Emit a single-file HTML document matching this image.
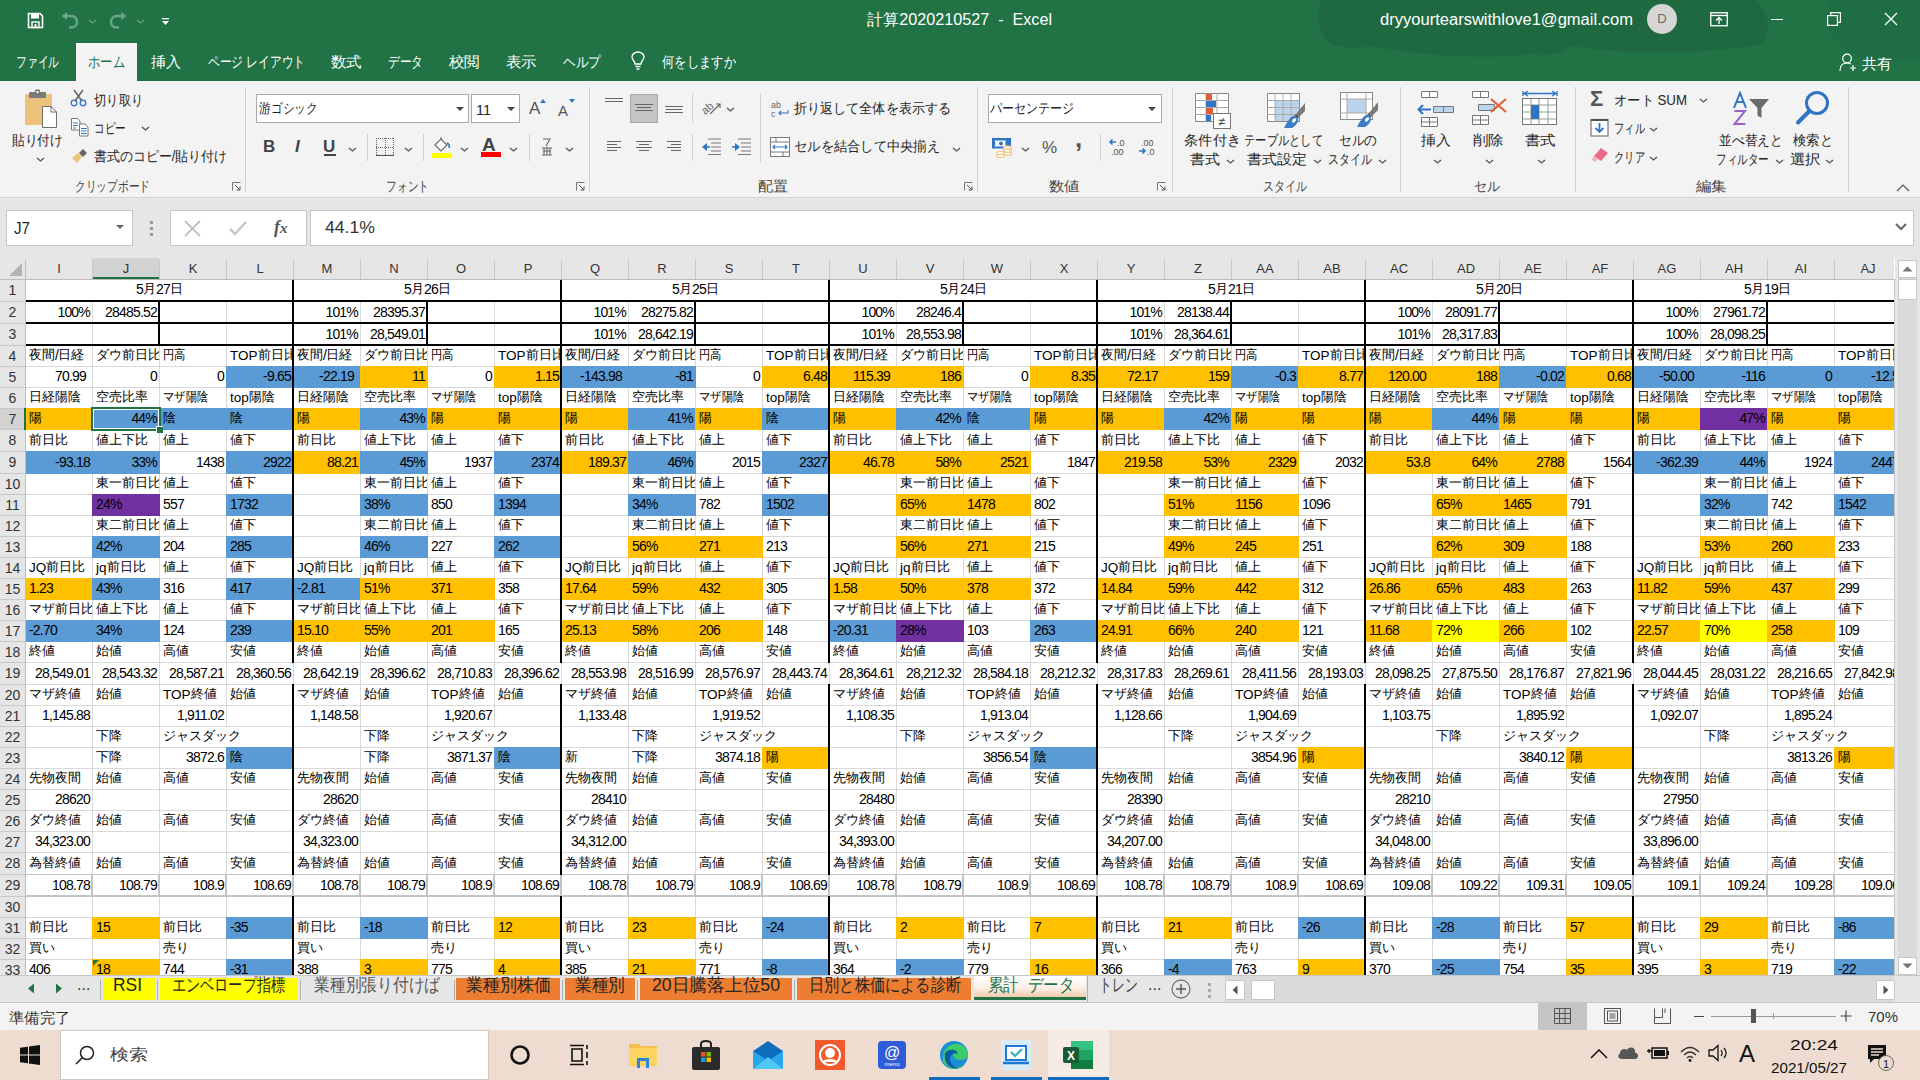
<!DOCTYPE html><html><head><meta charset="utf-8"><style>

*{margin:0;padding:0;box-sizing:border-box}
html,body{width:1920px;height:1080px;overflow:hidden;background:#fff;font-family:"Liberation Sans",sans-serif}
.a{position:absolute}
.t{position:absolute;white-space:nowrap;line-height:1}
.rb{color:#262626;font-size:15px}
.gl{position:absolute;font-size:14px;color:#444;white-space:nowrap;line-height:1}
.sep{position:absolute;width:1px;background:#d0d0d0}
.dd{position:absolute}


.cell{font-size:14px;color:#000;display:flex;align-items:flex-end;padding-bottom:4px}
.n{font-size:14px;letter-spacing:-0.8px}
.l{font-size:13.5px;letter-spacing:0}
.j{font-size:13px;position:relative;top:-1px}

</style></head><body>
<div class="a" style="left:0px;top:0px;width:1920px;height:81px;background:#217346"></div>
<svg class="a" style="left:1280px;top:0;width:640px;height:81px" viewBox="1280 0 640 81"><path d="M1322 0 C1316 12 1318 26 1322 34 C1326 46 1345 50 1372 46 C1420 56 1490 60 1532 54 C1548 58 1562 52 1572 46 C1630 56 1710 54 1762 44 C1774 26 1766 10 1756 0 Z" fill="#1f6741" opacity="0.85"/><path d="M1832 0 C1818 26 1836 52 1872 60 C1895 64 1910 62 1920 60 L1920 0 Z" fill="#1f6741" opacity="0.55"/></svg>
<svg class="a" style="left:27px;top:12px;width:17px;height:17px" viewBox="0 0 17 17"><path d="M1.5 1.5 H13 L15.5 4 V15.5 H1.5 Z" fill="none" stroke="#fff" stroke-width="1.6"/><rect x="4" y="1.5" width="8" height="5" fill="#fff"/><rect x="5" y="10" width="7" height="5.5" fill="none" stroke="#fff" stroke-width="1.4"/><rect x="7.5" y="12" width="2" height="3.5" fill="#fff"/></svg>
<svg class="a" style="left:60px;top:12px;width:20px;height:17px" viewBox="0 0 20 17"><path d="M5 4 H11 C15 4 17 7 17 10 C17 13 15 15.5 11 15.5 H9" fill="none" stroke="#6aa584" stroke-width="2.4"/><path d="M1.5 4 L7 0 V8 Z" fill="#6aa584"/></svg>
<svg class="a" style="left:88px;top:19px;width:9px;height:5px;" viewBox="0 0 9 5"><path d="M1 1 L4.5 4 L8 1" fill="none" stroke="#6aa584" stroke-width="1.3"/></svg>
<svg class="a" style="left:108px;top:12px;width:20px;height:17px" viewBox="0 0 20 17"><path d="M15 4 H9 C5 4 3 7 3 10 C3 13 5 15.5 9 15.5 H11" fill="none" stroke="#6aa584" stroke-width="2.4"/><path d="M18.5 4 L13 0 V8 Z" fill="#6aa584"/></svg>
<svg class="a" style="left:136px;top:19px;width:9px;height:5px;" viewBox="0 0 9 5"><path d="M1 1 L4.5 4 L8 1" fill="none" stroke="#6aa584" stroke-width="1.3"/></svg>
<svg class="a" style="left:161px;top:17px;width:9px;height:10px" viewBox="0 0 9 10"><rect x="1" y="1" width="7" height="1.3" fill="#fff"/><path d="M1 4 H8 L4.5 8 Z" fill="#fff"/></svg>
<div class="t" id="f0" style="left:867px;top:12px;font-size:16px;color:#fff;transform:scaleX(1.0097);transform-origin:0 0;">計算2020210527&nbsp; - &nbsp;Excel</div>
<div class="t" id="f1" style="left:1380px;top:12px;font-size:16px;color:#fff;transform:scaleX(1.0336);transform-origin:0 0;">dryyourtearswithlove1@gmail.com</div>
<div class="a" style="left:1647px;top:4px;width:30px;height:30px;border-radius:50%;background:#d6d6d6;color:#6b6b6b;font-size:13px;text-align:center;line-height:30px">D</div>
<svg class="a" style="left:1710px;top:11px;width:18px;height:16px" viewBox="0 0 18 16"><rect x="0.75" y="1.75" width="16.5" height="13" fill="none" stroke="#fff" stroke-width="1.3"/><line x1="0.75" y1="4.5" x2="17.25" y2="4.5" stroke="#fff" stroke-width="1.3"/><path d="M9 13 V7 M6 9.5 L9 6.5 L12 9.5" fill="none" stroke="#fff" stroke-width="1.3"/></svg>
<div class="a" style="left:1771px;top:19px;width:12px;height:1px;background:#fff"></div>
<svg class="a" style="left:1827px;top:12px;width:14px;height:14px" viewBox="0 0 14 14"><rect x="0.6" y="3.6" width="9.8" height="9.8" fill="none" stroke="#fff" stroke-width="1.2"/><path d="M3.6 3.6 V0.6 H13.4 V10.4 H10.4" fill="none" stroke="#fff" stroke-width="1.2"/></svg>
<svg class="a" style="left:1884px;top:12px;width:14px;height:14px" viewBox="0 0 14 14"><path d="M1 1 L13 13 M13 1 L1 13" stroke="#fff" stroke-width="1.3"/></svg>
<div class="a" style="left:76px;top:43px;width:61px;height:38px;background:#f3f3f3"></div>
<div class="t" id="f2" style="left:16px;top:54px;font-size:15px;color:#fff;transform:scaleX(0.7167);transform-origin:0 0;">ファイル</div>
<div class="t" id="f3" style="left:88px;top:54px;font-size:15px;color:#217346;transform:scaleX(0.8222);transform-origin:0 0;">ホーム</div>
<div class="t" id="f4" style="left:151px;top:54px;font-size:15px;color:#fff;transform:scaleX(1.0000);transform-origin:0 0;">挿入</div>
<div class="t" id="f5" style="left:208px;top:54px;font-size:15px;color:#fff;transform:scaleX(0.7812);transform-origin:0 0;">ページ レイアウト</div>
<div class="t" id="f6" style="left:331px;top:54px;font-size:15px;color:#fff;transform:scaleX(1.0333);transform-origin:0 0;">数式</div>
<div class="t" id="f7" style="left:388px;top:54px;font-size:15px;color:#fff;transform:scaleX(0.7778);transform-origin:0 0;">データ</div>
<div class="t" id="f8" style="left:449px;top:54px;font-size:15px;color:#fff;transform:scaleX(1.0333);transform-origin:0 0;">校閲</div>
<div class="t" id="f9" style="left:506px;top:54px;font-size:15px;color:#fff;transform:scaleX(1.0333);transform-origin:0 0;">表示</div>
<div class="t" id="f10" style="left:563px;top:54px;font-size:15px;color:#fff;transform:scaleX(0.8444);transform-origin:0 0;">ヘルプ</div>
<div class="t" id="f11" style="left:662px;top:54px;font-size:15px;color:#fff;transform:scaleX(0.8222);transform-origin:0 0;">何をしますか</div>
<svg class="a" style="left:630px;top:51px;width:16px;height:20px" viewBox="0 0 16 20"><path d="M5 13 C5 10 2 9 2 6 C2 3 5 1 8 1 C11 1 14 3 14 6 C14 9 11 10 11 13 Z" fill="none" stroke="#fff" stroke-width="1.3"/><path d="M5.5 15.5 H10.5 M6.5 18 H9.5" stroke="#fff" stroke-width="1.3"/></svg>
<svg class="a" style="left:1839px;top:53px;width:18px;height:19px" viewBox="0 0 18 19"><circle cx="8" cy="5.5" r="4.3" fill="none" stroke="#fff" stroke-width="1.2"/><path d="M1 18 C1 12 4 10 8 10 C10 10 11 10.5 12 11" fill="none" stroke="#fff" stroke-width="1.2"/><path d="M14 12 V18 M11 15 H17" stroke="#fff" stroke-width="1.2"/></svg>
<div class="t" id="f12" style="left:1862px;top:56px;font-size:15px;color:#fff;transform:scaleX(1.0000);transform-origin:0 0;">共有</div>
<div class="a" style="left:0px;top:81px;width:1920px;height:116px;background:#f3f3f3"></div>
<div class="a" style="left:0px;top:197px;width:1920px;height:1px;background:#d4d4d4"></div>
<div class="sep" style="left:245px;top:87px;height:105px"></div>
<div class="sep" style="left:589px;top:87px;height:105px"></div>
<div class="sep" style="left:977px;top:87px;height:105px"></div>
<div class="sep" style="left:1172px;top:87px;height:105px"></div>
<div class="sep" style="left:1400px;top:87px;height:105px"></div>
<div class="sep" style="left:1575px;top:87px;height:105px"></div>
<div class="sep" style="left:1848px;top:87px;height:105px"></div>
<div class="t" id="f13" style="left:75px;top:179px;font-size:14px;color:#444;transform:scaleX(0.7653);transform-origin:0 0;">クリップボード</div>
<div class="t" id="f14" style="left:386px;top:179px;font-size:14px;color:#444;transform:scaleX(0.7679);transform-origin:0 0;">フォント</div>
<div class="t" id="f15" style="left:758px;top:179px;font-size:14px;color:#444;transform:scaleX(1.0714);transform-origin:0 0;">配置</div>
<div class="t" id="f16" style="left:1049px;top:179px;font-size:14px;color:#444;transform:scaleX(1.1071);transform-origin:0 0;">数値</div>
<div class="t" id="f17" style="left:1263px;top:179px;font-size:14px;color:#444;transform:scaleX(0.7857);transform-origin:0 0;">スタイル</div>
<div class="t" id="f18" style="left:1474px;top:179px;font-size:14px;color:#444;transform:scaleX(0.9286);transform-origin:0 0;">セル</div>
<div class="t" id="f19" style="left:1696px;top:179px;font-size:14px;color:#444;transform:scaleX(1.1071);transform-origin:0 0;">編集</div>
<svg class="a" style="left:232px;top:182px;width:9px;height:9px" viewBox="0 0 9 9"><path d="M0.5 8.5 V0.5 H8.5" fill="none" stroke="#777" stroke-width="1"/><path d="M3 3 L8 8 M8 4.5 V8 H4.5" fill="none" stroke="#555" stroke-width="1"/></svg>
<svg class="a" style="left:576px;top:182px;width:9px;height:9px" viewBox="0 0 9 9"><path d="M0.5 8.5 V0.5 H8.5" fill="none" stroke="#777" stroke-width="1"/><path d="M3 3 L8 8 M8 4.5 V8 H4.5" fill="none" stroke="#555" stroke-width="1"/></svg>
<svg class="a" style="left:964px;top:182px;width:9px;height:9px" viewBox="0 0 9 9"><path d="M0.5 8.5 V0.5 H8.5" fill="none" stroke="#777" stroke-width="1"/><path d="M3 3 L8 8 M8 4.5 V8 H4.5" fill="none" stroke="#555" stroke-width="1"/></svg>
<svg class="a" style="left:1157px;top:182px;width:9px;height:9px" viewBox="0 0 9 9"><path d="M0.5 8.5 V0.5 H8.5" fill="none" stroke="#777" stroke-width="1"/><path d="M3 3 L8 8 M8 4.5 V8 H4.5" fill="none" stroke="#555" stroke-width="1"/></svg>
<svg class="a" style="left:1896px;top:184px;width:14px;height:8px" viewBox="0 0 14 8"><path d="M1 7 L7 1 L13 7" fill="none" stroke="#555" stroke-width="1.2"/></svg>
<svg class="a" style="left:23px;top:89px;width:36px;height:40px" viewBox="0 0 36 40"><rect x="2" y="5" width="27" height="31" rx="1.5" fill="#edc37c"/><rect x="6" y="3" width="17" height="6" rx="1" fill="#7a7a7a"/><rect x="12" y="0.5" width="5" height="5" rx="1" fill="#7a7a7a"/><rect x="13.5" y="2" width="2" height="2" fill="#fff"/><path d="M19.5 17.5 H28 L33.5 23 V38.5 H19.5 Z" fill="#fff" stroke="#6e6e6e" stroke-width="1"/><path d="M28 17.5 V23 H33.5" fill="none" stroke="#6e6e6e" stroke-width="1"/></svg>
<div class="t" id="f20" style="left:12px;top:133px;font-size:14px;color:#262626;transform:scaleX(0.9107);transform-origin:0 0;">貼り付け</div>
<svg class="a" style="left:36px;top:157px;width:9px;height:5px;" viewBox="0 0 9 5"><path d="M1 1 L4.5 4 L8 1" fill="none" stroke="#555" stroke-width="1.3"/></svg>
<svg class="a" style="left:70px;top:89px;width:18px;height:18px" viewBox="0 0 18 18"><path d="M4 1 L12 12 M13 1 L5 12" stroke="#666" stroke-width="1.6"/><circle cx="4" cy="14" r="2.8" fill="none" stroke="#2f75c4" stroke-width="1.3"/><circle cx="13" cy="14" r="2.8" fill="none" stroke="#2f75c4" stroke-width="1.3"/></svg>
<div class="t" id="f21" style="left:94px;top:93px;font-size:14px;color:#262626;transform:scaleX(0.8750);transform-origin:0 0;">切り取り</div>
<svg class="a" style="left:71px;top:118px;width:18px;height:19px" viewBox="0 0 18 19"><path d="M0.5 0.5 H6.5 L9 3 V12 H0.5 Z" fill="#fff" stroke="#777" stroke-width="1"/><path d="M2 5 H7 M2 7.5 H7 M2 10 H5" stroke="#2f75c4" stroke-width="1"/><path d="M8.5 6 H14 L17 9 V18 H8.5 Z" fill="#fff" stroke="#777" stroke-width="1"/><path d="M10 10.5 H15.5 M10 13 H15.5 M10 15.5 H15.5" stroke="#2f75c4" stroke-width="1"/></svg>
<div class="t" id="f22" style="left:94px;top:121px;font-size:14px;color:#262626;transform:scaleX(0.7619);transform-origin:0 0;">コピー</div>
<svg class="a" style="left:141px;top:126px;width:9px;height:5px;" viewBox="0 0 9 5"><path d="M1 1 L4.5 4 L8 1" fill="none" stroke="#555" stroke-width="1.3"/></svg>
<svg class="a" style="left:71px;top:148px;width:18px;height:16px" viewBox="0 0 18 16"><path d="M1 10 L7 5 L11 9 L6 15 Z" fill="#edc37c"/><path d="M8 5 L12 1 L16 5 L12 9 Z" fill="#666"/></svg>
<div class="t" id="f23" style="left:94px;top:149px;font-size:14px;color:#262626;transform:scaleX(0.9243);transform-origin:0 0;">書式のコピー/貼り付け</div>
<div class="a" style="left:256px;top:94px;width:213px;height:29px;background:#fff;border:1px solid #ababab"></div>
<div class="t" id="f24" style="left:259px;top:101px;font-size:14px;color:#262626;transform:scaleX(0.8429);transform-origin:0 0;">游ゴシック</div>
<svg class="a" style="left:455px;top:106px;width:10px;height:6px;" viewBox="0 0 10 6"><path d="M1 1 H9 L5 5 Z" fill="#444"/></svg>
<div class="a" style="left:471px;top:94px;width:49px;height:29px;background:#fff;border:1px solid #ababab"></div>
<div class="t" id="f25" style="left:476px;top:103px;font-size:14px;color:#262626;transform:scaleX(1.0311);transform-origin:0 0;">11</div>
<svg class="a" style="left:506px;top:106px;width:10px;height:6px;" viewBox="0 0 10 6"><path d="M1 1 H9 L5 5 Z" fill="#444"/></svg>
<div class="t" style="left:529px;top:100px;font-size:17px;color:#555;">A</div>
<svg class="a" style="left:540px;top:99px;width:6px;height:4px" viewBox="0 0 6 4"><path d="M0 4 L3 0 L6 4Z" fill="#2f75c4"/></svg>
<div class="t" style="left:558px;top:103px;font-size:15px;color:#555;">A</div>
<svg class="a" style="left:569px;top:99px;width:6px;height:4px" viewBox="0 0 6 4"><path d="M0 0 L3 4 L6 0Z" fill="#2f75c4"/></svg>
<div class="t" style="left:263px;top:138px;font-size:17px;color:#444;font-weight:bold">B</div>
<div class="t" style="left:295px;top:138px;font-size:17px;color:#444;font-style:italic;font-weight:bold">I</div>
<div class="t" style="left:323px;top:138px;font-size:17px;color:#444;font-weight:bold">U</div>
<div class="a" style="left:324px;top:154px;width:12px;height:1.5px;background:#444"></div>
<svg class="a" style="left:348px;top:147px;width:9px;height:5px;" viewBox="0 0 9 5"><path d="M1 1 L4.5 4 L8 1" fill="none" stroke="#555" stroke-width="1.3"/></svg>
<div class="sep" style="left:367px;top:134px;height:27px"></div>
<svg class="a" style="left:376px;top:138px;width:18px;height:18px" viewBox="0 0 18 18"><path d="M0.5 0 V17 M17.5 0 V17 M9.5 0 V17 M0 0.5 H18 M0 9.5 H18" fill="none" stroke="#666" stroke-width="1" stroke-dasharray="1,1"/><path d="M0 17.5 H18" stroke="#555" stroke-width="1.2"/></svg>
<svg class="a" style="left:404px;top:147px;width:9px;height:5px;" viewBox="0 0 9 5"><path d="M1 1 L4.5 4 L8 1" fill="none" stroke="#555" stroke-width="1.3"/></svg>
<div class="sep" style="left:423px;top:134px;height:27px"></div>
<svg class="a" style="left:432px;top:136px;width:22px;height:22px" viewBox="0 0 22 22"><path d="M3 9 L9 3 L15 9 L9 15 Z" fill="#fff" stroke="#666" stroke-width="1.1"/><path d="M9 3 V1" stroke="#666"/><path d="M15 7 C17 8 18 10 17 12" fill="none" stroke="#2f75c4" stroke-width="1.6"/><rect x="0" y="17" width="20" height="5" fill="#ffff00"/></svg>
<svg class="a" style="left:460px;top:147px;width:9px;height:5px;" viewBox="0 0 9 5"><path d="M1 1 L4.5 4 L8 1" fill="none" stroke="#555" stroke-width="1.3"/></svg>
<div class="t" style="left:482px;top:135px;font-size:19px;color:#444;font-weight:bold">A</div>
<div class="a" style="left:481px;top:152px;width:20px;height:5px;background:#ff0000"></div>
<svg class="a" style="left:509px;top:147px;width:9px;height:5px;" viewBox="0 0 9 5"><path d="M1 1 L4.5 4 L8 1" fill="none" stroke="#555" stroke-width="1.3"/></svg>
<div class="sep" style="left:529px;top:134px;height:27px"></div>
<svg class="a" style="left:541px;top:138px;width:12px;height:18px" viewBox="0 0 12 18"><path d="M2 1 H9 L5 8 M1 10 H11 M2 13 H10 M1 17 H11 M6 9 V17 M3 10 V17 M9 10 V17" fill="none" stroke="#666" stroke-width="1.1"/></svg>
<svg class="a" style="left:565px;top:147px;width:9px;height:5px;" viewBox="0 0 9 5"><path d="M1 1 L4.5 4 L8 1" fill="none" stroke="#555" stroke-width="1.3"/></svg>
<div class="a" style="left:605px;top:98px;width:18px;height:1px;background:#666"></div><div class="a" style="left:605px;top:101px;width:18px;height:1px;background:#666"></div>
<div class="a" style="left:630px;top:94px;width:28px;height:29px;background:#c5c5c5;border:1px solid #a9a9a9"></div>
<div class="a" style="left:635px;top:104px;width:18px;height:1px;background:#666"></div><div class="a" style="left:637px;top:107px;width:14px;height:1px;background:#666"></div><div class="a" style="left:635px;top:110px;width:18px;height:1px;background:#666"></div>
<div class="a" style="left:665px;top:106px;width:18px;height:1px;background:#666"></div><div class="a" style="left:666px;top:109px;width:16px;height:1px;background:#666"></div><div class="a" style="left:665px;top:112px;width:18px;height:1px;background:#666"></div>
<div class="a" style="left:607px;top:141px;width:14px;height:1px;background:#666"></div><div class="a" style="left:607px;top:144px;width:10px;height:1px;background:#666"></div><div class="a" style="left:607px;top:147px;width:14px;height:1px;background:#666"></div><div class="a" style="left:607px;top:150px;width:10px;height:1px;background:#666"></div>
<div class="a" style="left:636px;top:141px;width:16px;height:1px;background:#666"></div><div class="a" style="left:639px;top:144px;width:10px;height:1px;background:#666"></div><div class="a" style="left:636px;top:147px;width:16px;height:1px;background:#666"></div><div class="a" style="left:639px;top:150px;width:10px;height:1px;background:#666"></div>
<div class="a" style="left:667px;top:141px;width:14px;height:1px;background:#666"></div><div class="a" style="left:671px;top:144px;width:10px;height:1px;background:#666"></div><div class="a" style="left:667px;top:147px;width:14px;height:1px;background:#666"></div><div class="a" style="left:671px;top:150px;width:10px;height:1px;background:#666"></div>
<div class="sep" style="left:692px;top:93px;height:30px"></div>
<div class="sep" style="left:692px;top:134px;height:27px"></div>
<svg class="a" style="left:700px;top:98px;width:22px;height:18px" viewBox="0 0 22 18"><text x="1" y="14" font-size="11" fill="#666" transform="rotate(-40 7 10)" font-family="Liberation Sans">ab</text><path d="M10 16 L20 6 M16 6 H20 V10" fill="none" stroke="#666" stroke-width="1.2"/></svg>
<svg class="a" style="left:726px;top:107px;width:9px;height:5px;" viewBox="0 0 9 5"><path d="M1 1 L4.5 4 L8 1" fill="none" stroke="#555" stroke-width="1.3"/></svg>
<svg class="a" style="left:701px;top:138px;width:20px;height:17px" viewBox="0 0 20 17"><path d="M7 1 H20 M10 5 H20 M10 9 H20 M10 13 H20 M7 16.5 H20" stroke="#777" stroke-width="1"/><path d="M1 9 L6 5 V13 Z" fill="#2f75c4"/><path d="M3 9 H9" stroke="#2f75c4" stroke-width="1.5"/></svg>
<svg class="a" style="left:731px;top:138px;width:20px;height:17px" viewBox="0 0 20 17"><path d="M7 1 H20 M10 5 H20 M10 9 H20 M10 13 H20 M7 16.5 H20" stroke="#777" stroke-width="1"/><path d="M9 9 L4 5 V13 Z" fill="#2f75c4"/><path d="M1 9 H6" stroke="#2f75c4" stroke-width="1.5"/></svg>
<div class="sep" style="left:760px;top:93px;height:70px"></div>
<svg class="a" style="left:771px;top:100px;width:19px;height:18px" viewBox="0 0 19 18"><text x="0" y="8" font-size="9" fill="#666" font-family="Liberation Sans">ab</text><text x="0" y="17" font-size="9" fill="#666" font-family="Liberation Sans">c</text><path d="M17 10 V13 H8 M10 11 L8 13 L10 15" fill="none" stroke="#2f75c4" stroke-width="1.1"/></svg>
<div class="t" id="f26" style="left:794px;top:101px;font-size:14px;color:#262626;transform:scaleX(0.9345);transform-origin:0 0;">折り返して全体を表示する</div>
<svg class="a" style="left:770px;top:137px;width:20px;height:20px" viewBox="0 0 20 20"><rect x="0.5" y="0.5" width="19" height="19" fill="#fff" stroke="#777"/><path d="M0.5 5 H19.5 M0.5 15 H19.5 M6 0.5 V5 M13 15 V19.5" stroke="#777"/><path d="M3 10 H17 M5 8 L3 10 L5 12 M15 8 L17 10 L15 12" fill="none" stroke="#2f75c4" stroke-width="1.1"/></svg>
<div class="t" id="f27" style="left:794px;top:139px;font-size:14px;color:#262626;transform:scaleX(0.9481);transform-origin:0 0;">セルを結合して中央揃え</div>
<svg class="a" style="left:952px;top:147px;width:9px;height:5px;" viewBox="0 0 9 5"><path d="M1 1 L4.5 4 L8 1" fill="none" stroke="#555" stroke-width="1.3"/></svg>
<div class="a" style="left:988px;top:94px;width:174px;height:29px;background:#fff;border:1px solid #ababab"></div>
<div class="t" id="f28" style="left:990px;top:101px;font-size:14px;color:#262626;transform:scaleX(0.8571);transform-origin:0 0;">パーセンテージ</div>
<svg class="a" style="left:1147px;top:106px;width:10px;height:6px;" viewBox="0 0 10 6"><path d="M1 1 H9 L5 5 Z" fill="#444"/></svg>
<svg class="a" style="left:992px;top:137px;width:21px;height:21px" viewBox="0 0 21 21"><rect x="0" y="1" width="19" height="10.5" fill="#2f75c4"/><path d="M2.5 3.5 H14 C13 5 13 8 14 9.5 H2.5 C3.5 8 3.5 5 2.5 3.5Z" fill="#fff"/><circle cx="9" cy="6.5" r="2" fill="#2f75c4"/><g fill="#fff" stroke="#f0c27b" stroke-width="1.2"><ellipse cx="15.5" cy="16.5" rx="4" ry="1.6"/><ellipse cx="15.5" cy="13.5" rx="4" ry="1.6"/><ellipse cx="15.5" cy="10.5" rx="4" ry="1.6"/><ellipse cx="8.5" cy="19" rx="4" ry="1.5"/><ellipse cx="8.5" cy="16" rx="4" ry="1.5"/></g></svg>
<svg class="a" style="left:1021px;top:147px;width:9px;height:5px;" viewBox="0 0 9 5"><path d="M1 1 L4.5 4 L8 1" fill="none" stroke="#555" stroke-width="1.3"/></svg>
<div class="t" style="left:1042px;top:139px;font-size:17px;color:#555;">%</div>
<div class="t" style="left:1075px;top:125px;font-size:26px;color:#555;font-weight:bold">,</div>
<div class="sep" style="left:1100px;top:134px;height:27px"></div>
<svg class="a" style="left:1108px;top:137px;width:19px;height:19px" viewBox="0 0 19 19"><path d="M8 5 H2 M4.5 2.5 L2 5 L4.5 7.5" fill="none" stroke="#2f75c4" stroke-width="1.6"/><text x="9" y="9" font-size="9" fill="#555" font-family="Liberation Sans">.0</text><text x="3" y="18" font-size="9" fill="#555" font-family="Liberation Sans">.00</text></svg>
<svg class="a" style="left:1137px;top:137px;width:19px;height:19px" viewBox="0 0 19 19"><text x="4" y="9" font-size="9" fill="#555" font-family="Liberation Sans">.00</text><path d="M2 14 H8 M5.5 11.5 L8 14 L5.5 16.5" fill="none" stroke="#2f75c4" stroke-width="1.6"/><text x="10" y="18" font-size="9" fill="#555" font-family="Liberation Sans">.0</text></svg>
<svg class="a" style="left:1195px;top:93px;width:36px;height:36px" viewBox="0 0 36 36"><rect x="0.5" y="0.5" width="33" height="28" fill="#fff" stroke="#888"/><path d="M0.5 7.5 H33.5 M0.5 14.5 H33.5 M0.5 21.5 H33.5 M11 0.5 V28.5 M22 0.5 V28.5" stroke="#aaa"/><rect x="11" y="1" width="6" height="6" fill="#e0603a"/><rect x="11" y="8" width="10" height="6" fill="#2f75c4"/><rect x="11" y="15" width="7" height="6" fill="#e0603a"/><rect x="11" y="22" width="5" height="6" fill="#2f75c4"/><rect x="18.5" y="20.5" width="17" height="15" fill="#fff" stroke="#777"/><text x="23" y="33" font-size="13" fill="#444" font-family="Liberation Sans">≠</text></svg>
<div class="t" id="f29" style="left:1184px;top:133px;font-size:14px;color:#262626;transform:scaleX(1.0179);transform-origin:0 0;">条件付き</div>
<div class="t" id="f30" style="left:1190px;top:152px;font-size:14px;color:#262626;transform:scaleX(1.0714);transform-origin:0 0;">書式</div>
<svg class="a" style="left:1226px;top:159px;width:9px;height:5px;" viewBox="0 0 9 5"><path d="M1 1 L4.5 4 L8 1" fill="none" stroke="#555" stroke-width="1.3"/></svg>
<svg class="a" style="left:1267px;top:93px;width:38px;height:36px" viewBox="0 0 38 36"><rect x="0.5" y="0.5" width="32" height="28" fill="#fff" stroke="#888"/><rect x="8" y="8" width="24" height="20" fill="#bcd3ec"/><path d="M0.5 7.5 H32.5 M0.5 14.5 H32.5 M0.5 21.5 H32.5 M8 0.5 V28.5 M16 0.5 V28.5 M24 0.5 V28.5" stroke="#aaa"/><path d="M38 10 V18 L32 24 L29 21 Z" fill="#7a7a7a"/><path d="M29 21 L32 24 L30.5 25.5 L27.5 22.5 Z" fill="#555"/><path d="M27.5 22.5 C24 23 20 29 17 35 H25 C30 32 32 28 30.5 25.5 Z" fill="#3b7dc4"/><ellipse cx="27" cy="27.5" rx="1.6" ry="2.6" transform="rotate(40 27 27.5)" fill="#fff"/></svg>
<div class="t" id="f31" style="left:1244px;top:133px;font-size:14px;color:#262626;transform:scaleX(0.8061);transform-origin:0 0;">テーブルとして</div>
<div class="t" id="f32" style="left:1247px;top:152px;font-size:14px;color:#262626;transform:scaleX(1.0714);transform-origin:0 0;">書式設定</div>
<svg class="a" style="left:1313px;top:159px;width:9px;height:5px;" viewBox="0 0 9 5"><path d="M1 1 L4.5 4 L8 1" fill="none" stroke="#555" stroke-width="1.3"/></svg>
<svg class="a" style="left:1340px;top:92px;width:38px;height:37px" viewBox="0 0 38 37"><rect x="0.5" y="0.5" width="32" height="27" fill="#fff" stroke="#888"/><rect x="7" y="7" width="19" height="14" fill="#bcd3ec"/><path d="M0.5 7 H32.5 M0.5 21 H32.5 M7 0.5 V27.5 M26 0.5 V27.5" stroke="#aaa"/><path d="M38 10 V18 L32 24 L29 21 Z" fill="#7a7a7a"/><path d="M29 21 L32 24 L30.5 25.5 L27.5 22.5 Z" fill="#555"/><path d="M27.5 22.5 C24 23 20 29 17 35 H25 C30 32 32 28 30.5 25.5 Z" fill="#3b7dc4"/><ellipse cx="27" cy="27.5" rx="1.6" ry="2.6" transform="rotate(40 27 27.5)" fill="#fff"/></svg>
<div class="t" id="f33" style="left:1339px;top:133px;font-size:14px;color:#262626;transform:scaleX(0.9048);transform-origin:0 0;">セルの</div>
<div class="t" id="f34" style="left:1328px;top:152px;font-size:14px;color:#262626;transform:scaleX(0.7857);transform-origin:0 0;">スタイル</div>
<svg class="a" style="left:1378px;top:159px;width:9px;height:5px;" viewBox="0 0 9 5"><path d="M1 1 L4.5 4 L8 1" fill="none" stroke="#555" stroke-width="1.3"/></svg>
<svg class="a" style="left:1417px;top:91px;width:37px;height:36px" viewBox="0 0 37 36"><path d="M4.5 0.5 H20.5 V6.5 H4.5 Z M12.5 0.5 V6.5" fill="#fff" stroke="#777"/><path d="M16.5 15.5 H36.5 V21.5 H16.5 Z M26.5 15.5 V21.5" fill="#bcd3ec" stroke="#777"/><path d="M4.5 26.5 H20.5 V35.5 H4.5 Z M4.5 31 H20.5 M12.5 26.5 V35.5" fill="#fff" stroke="#777"/><path d="M14 18.5 H2 M6 14 L1.5 18.5 L6 23" fill="none" stroke="#2f75c4" stroke-width="2"/></svg>
<div class="t" id="f35" style="left:1421px;top:133px;font-size:14px;color:#262626;transform:scaleX(1.0714);transform-origin:0 0;">挿入</div>
<svg class="a" style="left:1433px;top:159px;width:9px;height:5px;" viewBox="0 0 9 5"><path d="M1 1 L4.5 4 L8 1" fill="none" stroke="#555" stroke-width="1.3"/></svg>
<svg class="a" style="left:1471px;top:91px;width:37px;height:36px" viewBox="0 0 37 36"><path d="M1.5 0.5 H17.5 V6.5 H1.5 Z M9.5 0.5 V6.5" fill="#fff" stroke="#777"/><path d="M7.5 13.5 H23.5 V19.5 H7.5 Z" fill="#bcd3ec" stroke="#777"/><path d="M1.5 24.5 H17.5 V33.5 H1.5 Z M1.5 29 H17.5 M9.5 24.5 V33.5" fill="#fff" stroke="#777"/><path d="M20 8 L35 21 M35 8 L20 21" stroke="#e0603a" stroke-width="2.2"/></svg>
<div class="t" id="f36" style="left:1473px;top:133px;font-size:14px;color:#262626;transform:scaleX(1.1071);transform-origin:0 0;">削除</div>
<svg class="a" style="left:1485px;top:159px;width:9px;height:5px;" viewBox="0 0 9 5"><path d="M1 1 L4.5 4 L8 1" fill="none" stroke="#555" stroke-width="1.3"/></svg>
<svg class="a" style="left:1522px;top:89px;width:36px;height:40px" viewBox="0 0 36 40"><path d="M1 2 V7 M35 2 V7 M2 4.5 H34 M6 2 L2 4.5 L6 7 M30 2 L34 4.5 L30 7" fill="none" stroke="#2f75c4" stroke-width="1.3"/><rect x="0.5" y="9.5" width="34" height="26" fill="#fff" stroke="#777"/><path d="M0.5 16 H34.5 M0.5 23 H34.5 M0.5 30 H34.5 M9 9.5 V35.5 M17 9.5 V35.5 M26 9.5 V35.5" stroke="#999"/><rect x="9" y="16" width="8" height="14" fill="#2f75c4"/></svg>
<div class="t" id="f37" style="left:1525px;top:133px;font-size:14px;color:#262626;transform:scaleX(1.1071);transform-origin:0 0;">書式</div>
<svg class="a" style="left:1537px;top:159px;width:9px;height:5px;" viewBox="0 0 9 5"><path d="M1 1 L4.5 4 L8 1" fill="none" stroke="#555" stroke-width="1.3"/></svg>
<div class="t" style="left:1590px;top:88px;font-size:22px;color:#555;font-weight:bold">Σ</div>
<div class="t" id="f38" style="left:1614px;top:93px;font-size:14px;color:#262626;transform:scaleX(0.9481);transform-origin:0 0;">オート SUM</div>
<svg class="a" style="left:1699px;top:98px;width:9px;height:5px;" viewBox="0 0 9 5"><path d="M1 1 L4.5 4 L8 1" fill="none" stroke="#555" stroke-width="1.3"/></svg>
<svg class="a" style="left:1590px;top:118px;width:19px;height:19px" viewBox="0 0 19 19"><rect x="1" y="1.5" width="17" height="16.5" fill="#fff" stroke="#777" stroke-width="1.2"/><path d="M1 2 H18" stroke="#555" stroke-width="2"/><path d="M9.5 5 V14 M5.5 10 L9.5 14 L13.5 10" fill="none" stroke="#2f75c4" stroke-width="1.8"/></svg>
<div class="t" id="f39" style="left:1614px;top:121px;font-size:14px;color:#262626;transform:scaleX(0.7381);transform-origin:0 0;">フィル</div>
<svg class="a" style="left:1649px;top:127px;width:9px;height:5px;" viewBox="0 0 9 5"><path d="M1 1 L4.5 4 L8 1" fill="none" stroke="#555" stroke-width="1.3"/></svg>
<svg class="a" style="left:1591px;top:147px;width:18px;height:16px" viewBox="0 0 18 16"><path d="M10 1 L17 6 L10 14 L3 9 Z" fill="#ea6b85"/><path d="M3 9 L7 12 L4 15 L0.5 12.5 Z" fill="#f5b3c0"/></svg>
<div class="t" id="f40" style="left:1614px;top:150px;font-size:14px;color:#262626;transform:scaleX(0.7381);transform-origin:0 0;">クリア</div>
<svg class="a" style="left:1649px;top:156px;width:9px;height:5px;" viewBox="0 0 9 5"><path d="M1 1 L4.5 4 L8 1" fill="none" stroke="#555" stroke-width="1.3"/></svg>
<svg class="a" style="left:1732px;top:91px;width:38px;height:36px" viewBox="0 0 38 36"><path d="M2 17 L8 2 L14 17 M4.5 11 H11.5" fill="none" stroke="#2f75c4" stroke-width="2"/><path d="M2.5 20 H13 L2.5 33 H13.5" fill="none" stroke="#9b62c9" stroke-width="2"/><path d="M17 8 H37 L29.5 17 V27 L25.5 24.5 V17 Z" fill="#6a6a6a"/></svg>
<div class="t" id="f41" style="left:1719px;top:133px;font-size:14px;color:#262626;transform:scaleX(0.9143);transform-origin:0 0;">並べ替えと</div>
<div class="t" id="f42" style="left:1716px;top:152px;font-size:14px;color:#262626;transform:scaleX(0.7571);transform-origin:0 0;">フィルター</div>
<svg class="a" style="left:1775px;top:159px;width:9px;height:5px;" viewBox="0 0 9 5"><path d="M1 1 L4.5 4 L8 1" fill="none" stroke="#555" stroke-width="1.3"/></svg>
<svg class="a" style="left:1795px;top:90px;width:37px;height:36px" viewBox="0 0 37 36"><circle cx="22" cy="13" r="10.5" fill="none" stroke="#2f75c4" stroke-width="3"/><path d="M14.5 21 L3 32.5" stroke="#2f75c4" stroke-width="4" stroke-linecap="round"/></svg>
<div class="t" id="f43" style="left:1793px;top:133px;font-size:14px;color:#262626;transform:scaleX(0.9524);transform-origin:0 0;">検索と</div>
<div class="t" id="f44" style="left:1790px;top:152px;font-size:14px;color:#262626;transform:scaleX(1.1071);transform-origin:0 0;">選択</div>
<svg class="a" style="left:1825px;top:159px;width:9px;height:5px;" viewBox="0 0 9 5"><path d="M1 1 L4.5 4 L8 1" fill="none" stroke="#555" stroke-width="1.3"/></svg>
<div class="a" style="left:0px;top:198px;width:1920px;height:60px;background:#e6e6e6"></div>
<div class="a" style="left:6px;top:210px;width:127px;height:36px;background:#fff;border:1px solid #c6c6c6"></div>
<div class="t" id="f45" style="left:14px;top:221px;font-size:16px;color:#262626;transform:scaleX(0.9464);transform-origin:0 0;">J7</div>
<svg class="a" style="left:115px;top:224px;width:10px;height:6px;" viewBox="0 0 10 6"><path d="M1 1 H9 L5 5 Z" fill="#666"/></svg>
<div class="a" style="left:150px;top:221px;width:3px;height:3px;background:#999"></div>
<div class="a" style="left:150px;top:227px;width:3px;height:3px;background:#999"></div>
<div class="a" style="left:150px;top:233px;width:3px;height:3px;background:#999"></div>
<div class="a" style="left:170px;top:210px;width:137px;height:36px;background:#fff;border:1px solid #c6c6c6"></div>
<svg class="a" style="left:184px;top:220px;width:17px;height:17px" viewBox="0 0 17 17"><path d="M1 1 L16 16 M16 1 L1 16" stroke="#b4b4b4" stroke-width="1.6"/></svg>
<svg class="a" style="left:229px;top:220px;width:18px;height:16px" viewBox="0 0 18 16"><path d="M1 9 L6 14 L17 2" fill="none" stroke="#c8c8c8" stroke-width="2.5"/></svg>
<div class="t" style="left:274px;top:218px;font-size:18px;color:#555;font-style:italic;font-weight:bold;font-family:'Liberation Serif',serif">f<span style="font-size:15px">x</span></div>
<div class="a" style="left:310px;top:210px;width:1604px;height:36px;background:#fff;border:1px solid #c6c6c6"></div>
<div class="t" id="f46" style="left:325px;top:220px;font-size:16px;color:#333;transform:scaleX(1.1019);transform-origin:0 0;">44.1%</div>
<svg class="a" style="left:1895px;top:223px;width:12px;height:8px" viewBox="0 0 12 8"><path d="M1 1 L6 6 L11 1" fill="none" stroke="#666" stroke-width="2"/></svg>
<div class="a" style="left:0px;top:258px;width:1894px;height:21px;background:#e6e6e6"></div>
<div class="a" style="left:92px;top:258px;width:67px;height:21px;background:#d2d2d2"></div>
<div class="a" style="left:92px;top:277px;width:67px;height:2px;background:#217346"></div>
<div class="a" style="left:0px;top:279px;width:1894px;height:1px;background:#bdbdbd"></div>
<div class="a" style="left:92px;top:260px;width:1px;height:19px;background:#c8c8c8"></div>
<div class="a" style="left:159px;top:260px;width:1px;height:19px;background:#c8c8c8"></div>
<div class="a" style="left:226px;top:260px;width:1px;height:19px;background:#c8c8c8"></div>
<div class="a" style="left:293px;top:260px;width:1px;height:19px;background:#c8c8c8"></div>
<div class="a" style="left:360px;top:260px;width:1px;height:19px;background:#c8c8c8"></div>
<div class="a" style="left:427px;top:260px;width:1px;height:19px;background:#c8c8c8"></div>
<div class="a" style="left:494px;top:260px;width:1px;height:19px;background:#c8c8c8"></div>
<div class="a" style="left:561px;top:260px;width:1px;height:19px;background:#c8c8c8"></div>
<div class="a" style="left:628px;top:260px;width:1px;height:19px;background:#c8c8c8"></div>
<div class="a" style="left:695px;top:260px;width:1px;height:19px;background:#c8c8c8"></div>
<div class="a" style="left:762px;top:260px;width:1px;height:19px;background:#c8c8c8"></div>
<div class="a" style="left:829px;top:260px;width:1px;height:19px;background:#c8c8c8"></div>
<div class="a" style="left:896px;top:260px;width:1px;height:19px;background:#c8c8c8"></div>
<div class="a" style="left:963px;top:260px;width:1px;height:19px;background:#c8c8c8"></div>
<div class="a" style="left:1030px;top:260px;width:1px;height:19px;background:#c8c8c8"></div>
<div class="a" style="left:1097px;top:260px;width:1px;height:19px;background:#c8c8c8"></div>
<div class="a" style="left:1164px;top:260px;width:1px;height:19px;background:#c8c8c8"></div>
<div class="a" style="left:1231px;top:260px;width:1px;height:19px;background:#c8c8c8"></div>
<div class="a" style="left:1298px;top:260px;width:1px;height:19px;background:#c8c8c8"></div>
<div class="a" style="left:1365px;top:260px;width:1px;height:19px;background:#c8c8c8"></div>
<div class="a" style="left:1432px;top:260px;width:1px;height:19px;background:#c8c8c8"></div>
<div class="a" style="left:1499px;top:260px;width:1px;height:19px;background:#c8c8c8"></div>
<div class="a" style="left:1566px;top:260px;width:1px;height:19px;background:#c8c8c8"></div>
<div class="a" style="left:1633px;top:260px;width:1px;height:19px;background:#c8c8c8"></div>
<div class="a" style="left:1700px;top:260px;width:1px;height:19px;background:#c8c8c8"></div>
<div class="a" style="left:1767px;top:260px;width:1px;height:19px;background:#c8c8c8"></div>
<div class="a" style="left:1834px;top:260px;width:1px;height:19px;background:#c8c8c8"></div>
<div class="a" style="left:1901px;top:260px;width:1px;height:19px;background:#c8c8c8"></div>
<div class="a" style="left:25px;top:260px;width:1px;height:19px;background:#bdbdbd"></div>
<div class="t" style="left:29px;top:262px;width:60px;text-align:center;font-size:13px;color:#333">I</div>
<div class="t" style="left:96px;top:262px;width:60px;text-align:center;font-size:13px;color:#333">J</div>
<div class="t" style="left:163px;top:262px;width:60px;text-align:center;font-size:13px;color:#333">K</div>
<div class="t" style="left:230px;top:262px;width:60px;text-align:center;font-size:13px;color:#333">L</div>
<div class="t" style="left:297px;top:262px;width:60px;text-align:center;font-size:13px;color:#333">M</div>
<div class="t" style="left:364px;top:262px;width:60px;text-align:center;font-size:13px;color:#333">N</div>
<div class="t" style="left:431px;top:262px;width:60px;text-align:center;font-size:13px;color:#333">O</div>
<div class="t" style="left:498px;top:262px;width:60px;text-align:center;font-size:13px;color:#333">P</div>
<div class="t" style="left:565px;top:262px;width:60px;text-align:center;font-size:13px;color:#333">Q</div>
<div class="t" style="left:632px;top:262px;width:60px;text-align:center;font-size:13px;color:#333">R</div>
<div class="t" style="left:699px;top:262px;width:60px;text-align:center;font-size:13px;color:#333">S</div>
<div class="t" style="left:766px;top:262px;width:60px;text-align:center;font-size:13px;color:#333">T</div>
<div class="t" style="left:833px;top:262px;width:60px;text-align:center;font-size:13px;color:#333">U</div>
<div class="t" style="left:900px;top:262px;width:60px;text-align:center;font-size:13px;color:#333">V</div>
<div class="t" style="left:967px;top:262px;width:60px;text-align:center;font-size:13px;color:#333">W</div>
<div class="t" style="left:1034px;top:262px;width:60px;text-align:center;font-size:13px;color:#333">X</div>
<div class="t" style="left:1101px;top:262px;width:60px;text-align:center;font-size:13px;color:#333">Y</div>
<div class="t" style="left:1168px;top:262px;width:60px;text-align:center;font-size:13px;color:#333">Z</div>
<div class="t" style="left:1235px;top:262px;width:60px;text-align:center;font-size:13px;color:#333">AA</div>
<div class="t" style="left:1302px;top:262px;width:60px;text-align:center;font-size:13px;color:#333">AB</div>
<div class="t" style="left:1369px;top:262px;width:60px;text-align:center;font-size:13px;color:#333">AC</div>
<div class="t" style="left:1436px;top:262px;width:60px;text-align:center;font-size:13px;color:#333">AD</div>
<div class="t" style="left:1503px;top:262px;width:60px;text-align:center;font-size:13px;color:#333">AE</div>
<div class="t" style="left:1570px;top:262px;width:60px;text-align:center;font-size:13px;color:#333">AF</div>
<div class="t" style="left:1637px;top:262px;width:60px;text-align:center;font-size:13px;color:#333">AG</div>
<div class="t" style="left:1704px;top:262px;width:60px;text-align:center;font-size:13px;color:#333">AH</div>
<div class="t" style="left:1771px;top:262px;width:60px;text-align:center;font-size:13px;color:#333">AI</div>
<div class="t" style="left:1838px;top:262px;width:60px;text-align:center;font-size:13px;color:#333">AJ</div>
<svg class="a" style="left:8px;top:262px;width:15px;height:15px" viewBox="0 0 15 15"><path d="M14 1 V14 H1 Z" fill="#b4b4b4"/></svg>
<div class="a" style="left:0px;top:280px;width:25px;height:695px;background:#e6e6e6"></div>
<div class="a" style="left:0px;top:409px;width:25px;height:21px;background:#d2d2d2"></div>
<div class="a" style="left:25px;top:279px;width:1px;height:696px;background:#bdbdbd"></div>
<div class="a" style="left:0px;top:301px;width:25px;height:1px;background:#c8c8c8"></div>
<div class="a" style="left:0px;top:323px;width:25px;height:1px;background:#c8c8c8"></div>
<div class="a" style="left:0px;top:345px;width:25px;height:1px;background:#c8c8c8"></div>
<div class="a" style="left:0px;top:366px;width:25px;height:1px;background:#c8c8c8"></div>
<div class="a" style="left:0px;top:387px;width:25px;height:1px;background:#c8c8c8"></div>
<div class="a" style="left:0px;top:408px;width:25px;height:1px;background:#c8c8c8"></div>
<div class="a" style="left:0px;top:429px;width:25px;height:1px;background:#c8c8c8"></div>
<div class="a" style="left:0px;top:451px;width:25px;height:1px;background:#c8c8c8"></div>
<div class="a" style="left:0px;top:473px;width:25px;height:1px;background:#c8c8c8"></div>
<div class="a" style="left:0px;top:494px;width:25px;height:1px;background:#c8c8c8"></div>
<div class="a" style="left:0px;top:515px;width:25px;height:1px;background:#c8c8c8"></div>
<div class="a" style="left:0px;top:536px;width:25px;height:1px;background:#c8c8c8"></div>
<div class="a" style="left:0px;top:557px;width:25px;height:1px;background:#c8c8c8"></div>
<div class="a" style="left:0px;top:578px;width:25px;height:1px;background:#c8c8c8"></div>
<div class="a" style="left:0px;top:599px;width:25px;height:1px;background:#c8c8c8"></div>
<div class="a" style="left:0px;top:620px;width:25px;height:1px;background:#c8c8c8"></div>
<div class="a" style="left:0px;top:641px;width:25px;height:1px;background:#c8c8c8"></div>
<div class="a" style="left:0px;top:662px;width:25px;height:1px;background:#c8c8c8"></div>
<div class="a" style="left:0px;top:684px;width:25px;height:1px;background:#c8c8c8"></div>
<div class="a" style="left:0px;top:705px;width:25px;height:1px;background:#c8c8c8"></div>
<div class="a" style="left:0px;top:726px;width:25px;height:1px;background:#c8c8c8"></div>
<div class="a" style="left:0px;top:747px;width:25px;height:1px;background:#c8c8c8"></div>
<div class="a" style="left:0px;top:768px;width:25px;height:1px;background:#c8c8c8"></div>
<div class="a" style="left:0px;top:789px;width:25px;height:1px;background:#c8c8c8"></div>
<div class="a" style="left:0px;top:810px;width:25px;height:1px;background:#c8c8c8"></div>
<div class="a" style="left:0px;top:831px;width:25px;height:1px;background:#c8c8c8"></div>
<div class="a" style="left:0px;top:852px;width:25px;height:1px;background:#c8c8c8"></div>
<div class="a" style="left:0px;top:874px;width:25px;height:1px;background:#c8c8c8"></div>
<div class="a" style="left:0px;top:896px;width:25px;height:1px;background:#c8c8c8"></div>
<div class="a" style="left:0px;top:917px;width:25px;height:1px;background:#c8c8c8"></div>
<div class="a" style="left:0px;top:938px;width:25px;height:1px;background:#c8c8c8"></div>
<div class="a" style="left:0px;top:959px;width:25px;height:1px;background:#c8c8c8"></div>
<div class="a" style="left:24px;top:408px;width:2px;height:22px;background:#217346"></div>
<div class="t" style="left:0;top:283px;width:25px;text-align:center;font-size:14px;color:#333">1</div>
<div class="t" style="left:0;top:305px;width:25px;text-align:center;font-size:14px;color:#333">2</div>
<div class="t" style="left:0;top:327px;width:25px;text-align:center;font-size:14px;color:#333">3</div>
<div class="t" style="left:0;top:349px;width:25px;text-align:center;font-size:14px;color:#333">4</div>
<div class="t" style="left:0;top:370px;width:25px;text-align:center;font-size:14px;color:#333">5</div>
<div class="t" style="left:0;top:391px;width:25px;text-align:center;font-size:14px;color:#333">6</div>
<div class="t" style="left:0;top:412px;width:25px;text-align:center;font-size:14px;color:#333">7</div>
<div class="t" style="left:0;top:433px;width:25px;text-align:center;font-size:14px;color:#333">8</div>
<div class="t" style="left:0;top:455px;width:25px;text-align:center;font-size:14px;color:#333">9</div>
<div class="t" style="left:0;top:477px;width:25px;text-align:center;font-size:14px;color:#333">10</div>
<div class="t" style="left:0;top:498px;width:25px;text-align:center;font-size:14px;color:#333">11</div>
<div class="t" style="left:0;top:519px;width:25px;text-align:center;font-size:14px;color:#333">12</div>
<div class="t" style="left:0;top:540px;width:25px;text-align:center;font-size:14px;color:#333">13</div>
<div class="t" style="left:0;top:561px;width:25px;text-align:center;font-size:14px;color:#333">14</div>
<div class="t" style="left:0;top:582px;width:25px;text-align:center;font-size:14px;color:#333">15</div>
<div class="t" style="left:0;top:603px;width:25px;text-align:center;font-size:14px;color:#333">16</div>
<div class="t" style="left:0;top:624px;width:25px;text-align:center;font-size:14px;color:#333">17</div>
<div class="t" style="left:0;top:645px;width:25px;text-align:center;font-size:14px;color:#333">18</div>
<div class="t" style="left:0;top:666px;width:25px;text-align:center;font-size:14px;color:#333">19</div>
<div class="t" style="left:0;top:688px;width:25px;text-align:center;font-size:14px;color:#333">20</div>
<div class="t" style="left:0;top:709px;width:25px;text-align:center;font-size:14px;color:#333">21</div>
<div class="t" style="left:0;top:730px;width:25px;text-align:center;font-size:14px;color:#333">22</div>
<div class="t" style="left:0;top:751px;width:25px;text-align:center;font-size:14px;color:#333">23</div>
<div class="t" style="left:0;top:772px;width:25px;text-align:center;font-size:14px;color:#333">24</div>
<div class="t" style="left:0;top:793px;width:25px;text-align:center;font-size:14px;color:#333">25</div>
<div class="t" style="left:0;top:814px;width:25px;text-align:center;font-size:14px;color:#333">26</div>
<div class="t" style="left:0;top:835px;width:25px;text-align:center;font-size:14px;color:#333">27</div>
<div class="t" style="left:0;top:856px;width:25px;text-align:center;font-size:14px;color:#333">28</div>
<div class="t" style="left:0;top:878px;width:25px;text-align:center;font-size:14px;color:#333">29</div>
<div class="t" style="left:0;top:900px;width:25px;text-align:center;font-size:14px;color:#333">30</div>
<div class="t" style="left:0;top:921px;width:25px;text-align:center;font-size:14px;color:#333">31</div>
<div class="t" style="left:0;top:942px;width:25px;text-align:center;font-size:14px;color:#333">32</div>
<div class="t" style="left:0;top:963px;width:25px;text-align:center;font-size:14px;color:#333">33</div>
<div class="a" style="left:26px;top:280px;width:1868px;height:695px;background:#fff;overflow:hidden">
<div class="a" style="left:66px;top:0px;width:1px;height:695px;background:#d9d9d9"></div>
<div class="a" style="left:133px;top:0px;width:1px;height:695px;background:#d9d9d9"></div>
<div class="a" style="left:200px;top:0px;width:1px;height:695px;background:#d9d9d9"></div>
<div class="a" style="left:267px;top:0px;width:1px;height:695px;background:#d9d9d9"></div>
<div class="a" style="left:334px;top:0px;width:1px;height:695px;background:#d9d9d9"></div>
<div class="a" style="left:401px;top:0px;width:1px;height:695px;background:#d9d9d9"></div>
<div class="a" style="left:468px;top:0px;width:1px;height:695px;background:#d9d9d9"></div>
<div class="a" style="left:535px;top:0px;width:1px;height:695px;background:#d9d9d9"></div>
<div class="a" style="left:602px;top:0px;width:1px;height:695px;background:#d9d9d9"></div>
<div class="a" style="left:669px;top:0px;width:1px;height:695px;background:#d9d9d9"></div>
<div class="a" style="left:736px;top:0px;width:1px;height:695px;background:#d9d9d9"></div>
<div class="a" style="left:803px;top:0px;width:1px;height:695px;background:#d9d9d9"></div>
<div class="a" style="left:870px;top:0px;width:1px;height:695px;background:#d9d9d9"></div>
<div class="a" style="left:937px;top:0px;width:1px;height:695px;background:#d9d9d9"></div>
<div class="a" style="left:1004px;top:0px;width:1px;height:695px;background:#d9d9d9"></div>
<div class="a" style="left:1071px;top:0px;width:1px;height:695px;background:#d9d9d9"></div>
<div class="a" style="left:1138px;top:0px;width:1px;height:695px;background:#d9d9d9"></div>
<div class="a" style="left:1205px;top:0px;width:1px;height:695px;background:#d9d9d9"></div>
<div class="a" style="left:1272px;top:0px;width:1px;height:695px;background:#d9d9d9"></div>
<div class="a" style="left:1339px;top:0px;width:1px;height:695px;background:#d9d9d9"></div>
<div class="a" style="left:1406px;top:0px;width:1px;height:695px;background:#d9d9d9"></div>
<div class="a" style="left:1473px;top:0px;width:1px;height:695px;background:#d9d9d9"></div>
<div class="a" style="left:1540px;top:0px;width:1px;height:695px;background:#d9d9d9"></div>
<div class="a" style="left:1607px;top:0px;width:1px;height:695px;background:#d9d9d9"></div>
<div class="a" style="left:1674px;top:0px;width:1px;height:695px;background:#d9d9d9"></div>
<div class="a" style="left:1741px;top:0px;width:1px;height:695px;background:#d9d9d9"></div>
<div class="a" style="left:1808px;top:0px;width:1px;height:695px;background:#d9d9d9"></div>
<div class="a" style="left:1875px;top:0px;width:1px;height:695px;background:#d9d9d9"></div>
<div class="a" style="left:0px;top:21px;width:1868px;height:1px;background:#d9d9d9"></div>
<div class="a" style="left:0px;top:43px;width:1868px;height:1px;background:#d9d9d9"></div>
<div class="a" style="left:0px;top:65px;width:1868px;height:1px;background:#d9d9d9"></div>
<div class="a" style="left:0px;top:86px;width:1868px;height:1px;background:#d9d9d9"></div>
<div class="a" style="left:0px;top:107px;width:1868px;height:1px;background:#d9d9d9"></div>
<div class="a" style="left:0px;top:128px;width:1868px;height:1px;background:#d9d9d9"></div>
<div class="a" style="left:0px;top:149px;width:1868px;height:1px;background:#d9d9d9"></div>
<div class="a" style="left:0px;top:171px;width:1868px;height:1px;background:#d9d9d9"></div>
<div class="a" style="left:0px;top:193px;width:1868px;height:1px;background:#d9d9d9"></div>
<div class="a" style="left:0px;top:214px;width:1868px;height:1px;background:#d9d9d9"></div>
<div class="a" style="left:0px;top:235px;width:1868px;height:1px;background:#d9d9d9"></div>
<div class="a" style="left:0px;top:256px;width:1868px;height:1px;background:#d9d9d9"></div>
<div class="a" style="left:0px;top:277px;width:1868px;height:1px;background:#d9d9d9"></div>
<div class="a" style="left:0px;top:298px;width:1868px;height:1px;background:#d9d9d9"></div>
<div class="a" style="left:0px;top:319px;width:1868px;height:1px;background:#d9d9d9"></div>
<div class="a" style="left:0px;top:340px;width:1868px;height:1px;background:#d9d9d9"></div>
<div class="a" style="left:0px;top:361px;width:1868px;height:1px;background:#d9d9d9"></div>
<div class="a" style="left:0px;top:382px;width:1868px;height:1px;background:#d9d9d9"></div>
<div class="a" style="left:0px;top:404px;width:1868px;height:1px;background:#d9d9d9"></div>
<div class="a" style="left:0px;top:425px;width:1868px;height:1px;background:#d9d9d9"></div>
<div class="a" style="left:0px;top:446px;width:1868px;height:1px;background:#d9d9d9"></div>
<div class="a" style="left:0px;top:467px;width:1868px;height:1px;background:#d9d9d9"></div>
<div class="a" style="left:0px;top:488px;width:1868px;height:1px;background:#d9d9d9"></div>
<div class="a" style="left:0px;top:509px;width:1868px;height:1px;background:#d9d9d9"></div>
<div class="a" style="left:0px;top:530px;width:1868px;height:1px;background:#d9d9d9"></div>
<div class="a" style="left:0px;top:551px;width:1868px;height:1px;background:#d9d9d9"></div>
<div class="a" style="left:0px;top:572px;width:1868px;height:1px;background:#d9d9d9"></div>
<div class="a" style="left:0px;top:594px;width:1868px;height:1px;background:#d9d9d9"></div>
<div class="a" style="left:0px;top:616px;width:1868px;height:1px;background:#d9d9d9"></div>
<div class="a" style="left:0px;top:637px;width:1868px;height:1px;background:#d9d9d9"></div>
<div class="a" style="left:0px;top:658px;width:1868px;height:1px;background:#d9d9d9"></div>
<div class="a" style="left:0px;top:679px;width:1868px;height:1px;background:#d9d9d9"></div>
<div class="a" style="left:0px;top:700px;width:1868px;height:1px;background:#d9d9d9"></div>
<div class="a" style="left:0px;top:0px;width:267px;height:21px;background:#fff"></div>
<div class="a" style="left:268px;top:0px;width:267px;height:21px;background:#fff"></div>
<div class="a" style="left:536px;top:0px;width:267px;height:21px;background:#fff"></div>
<div class="a" style="left:804px;top:0px;width:267px;height:21px;background:#fff"></div>
<div class="a" style="left:1072px;top:0px;width:267px;height:21px;background:#fff"></div>
<div class="a" style="left:1340px;top:0px;width:267px;height:21px;background:#fff"></div>
<div class="a" style="left:1608px;top:0px;width:267px;height:21px;background:#fff"></div>
<div class="a" style="left:200px;top:447px;width:1px;height:20px;background:#fff"></div>
<div class="a" style="left:468px;top:447px;width:1px;height:20px;background:#fff"></div>
<div class="a" style="left:736px;top:447px;width:1px;height:20px;background:#fff"></div>
<div class="a" style="left:1004px;top:447px;width:1px;height:20px;background:#fff"></div>
<div class="a" style="left:1272px;top:447px;width:1px;height:20px;background:#fff"></div>
<div class="a" style="left:1540px;top:447px;width:1px;height:20px;background:#fff"></div>
<div class="a" style="left:1808px;top:447px;width:1px;height:20px;background:#fff"></div>
<div class="a" style="left:200px;top:86px;width:68px;height:22px;background:#5b9bd5"></div>
<div class="a" style="left:-1px;top:128px;width:68px;height:22px;background:#ffc000"></div>
<div class="a" style="left:66px;top:128px;width:68px;height:22px;background:#5b9bd5"></div>
<div class="a" style="left:133px;top:128px;width:68px;height:22px;background:#5b9bd5"></div>
<div class="a" style="left:200px;top:128px;width:68px;height:22px;background:#5b9bd5"></div>
<div class="a" style="left:-1px;top:171px;width:68px;height:23px;background:#5b9bd5"></div>
<div class="a" style="left:66px;top:171px;width:68px;height:23px;background:#5b9bd5"></div>
<div class="a" style="left:200px;top:171px;width:68px;height:23px;background:#5b9bd5"></div>
<div class="a" style="left:66px;top:214px;width:68px;height:22px;background:#7030a0"></div>
<div class="a" style="left:200px;top:214px;width:68px;height:22px;background:#5b9bd5"></div>
<div class="a" style="left:66px;top:256px;width:68px;height:22px;background:#5b9bd5"></div>
<div class="a" style="left:200px;top:256px;width:68px;height:22px;background:#5b9bd5"></div>
<div class="a" style="left:-1px;top:298px;width:68px;height:22px;background:#ffc000"></div>
<div class="a" style="left:66px;top:298px;width:68px;height:22px;background:#5b9bd5"></div>
<div class="a" style="left:200px;top:298px;width:68px;height:22px;background:#5b9bd5"></div>
<div class="a" style="left:-1px;top:340px;width:68px;height:22px;background:#5b9bd5"></div>
<div class="a" style="left:66px;top:340px;width:68px;height:22px;background:#5b9bd5"></div>
<div class="a" style="left:200px;top:340px;width:68px;height:22px;background:#5b9bd5"></div>
<div class="a" style="left:200px;top:467px;width:68px;height:22px;background:#5b9bd5"></div>
<div class="a" style="left:66px;top:637px;width:68px;height:22px;background:#ffc000"></div>
<div class="a" style="left:200px;top:637px;width:68px;height:22px;background:#5b9bd5"></div>
<div class="a" style="left:66px;top:679px;width:68px;height:22px;background:#ffc000"></div>
<div class="a" style="left:200px;top:679px;width:68px;height:22px;background:#5b9bd5"></div>
<div class="a" style="left:267px;top:86px;width:68px;height:22px;background:#5b9bd5"></div>
<div class="a" style="left:334px;top:86px;width:68px;height:22px;background:#ffc000"></div>
<div class="a" style="left:468px;top:86px;width:68px;height:22px;background:#ffc000"></div>
<div class="a" style="left:267px;top:128px;width:68px;height:22px;background:#ffc000"></div>
<div class="a" style="left:334px;top:128px;width:68px;height:22px;background:#5b9bd5"></div>
<div class="a" style="left:401px;top:128px;width:68px;height:22px;background:#ffc000"></div>
<div class="a" style="left:468px;top:128px;width:68px;height:22px;background:#ffc000"></div>
<div class="a" style="left:267px;top:171px;width:68px;height:23px;background:#ffc000"></div>
<div class="a" style="left:334px;top:171px;width:68px;height:23px;background:#5b9bd5"></div>
<div class="a" style="left:468px;top:171px;width:68px;height:23px;background:#5b9bd5"></div>
<div class="a" style="left:334px;top:214px;width:68px;height:22px;background:#5b9bd5"></div>
<div class="a" style="left:468px;top:214px;width:68px;height:22px;background:#5b9bd5"></div>
<div class="a" style="left:334px;top:256px;width:68px;height:22px;background:#5b9bd5"></div>
<div class="a" style="left:468px;top:256px;width:68px;height:22px;background:#5b9bd5"></div>
<div class="a" style="left:267px;top:298px;width:68px;height:22px;background:#5b9bd5"></div>
<div class="a" style="left:334px;top:298px;width:68px;height:22px;background:#ffc000"></div>
<div class="a" style="left:401px;top:298px;width:68px;height:22px;background:#ffc000"></div>
<div class="a" style="left:267px;top:340px;width:68px;height:22px;background:#ffc000"></div>
<div class="a" style="left:334px;top:340px;width:68px;height:22px;background:#ffc000"></div>
<div class="a" style="left:401px;top:340px;width:68px;height:22px;background:#ffc000"></div>
<div class="a" style="left:468px;top:467px;width:68px;height:22px;background:#5b9bd5"></div>
<div class="a" style="left:334px;top:637px;width:68px;height:22px;background:#5b9bd5"></div>
<div class="a" style="left:468px;top:637px;width:68px;height:22px;background:#ffc000"></div>
<div class="a" style="left:334px;top:679px;width:68px;height:22px;background:#ffc000"></div>
<div class="a" style="left:468px;top:679px;width:68px;height:22px;background:#ffc000"></div>
<div class="a" style="left:535px;top:86px;width:68px;height:22px;background:#5b9bd5"></div>
<div class="a" style="left:602px;top:86px;width:68px;height:22px;background:#5b9bd5"></div>
<div class="a" style="left:736px;top:86px;width:68px;height:22px;background:#ffc000"></div>
<div class="a" style="left:535px;top:128px;width:68px;height:22px;background:#ffc000"></div>
<div class="a" style="left:602px;top:128px;width:68px;height:22px;background:#5b9bd5"></div>
<div class="a" style="left:669px;top:128px;width:68px;height:22px;background:#ffc000"></div>
<div class="a" style="left:736px;top:128px;width:68px;height:22px;background:#5b9bd5"></div>
<div class="a" style="left:535px;top:171px;width:68px;height:23px;background:#ffc000"></div>
<div class="a" style="left:602px;top:171px;width:68px;height:23px;background:#5b9bd5"></div>
<div class="a" style="left:736px;top:171px;width:68px;height:23px;background:#5b9bd5"></div>
<div class="a" style="left:602px;top:214px;width:68px;height:22px;background:#5b9bd5"></div>
<div class="a" style="left:736px;top:214px;width:68px;height:22px;background:#5b9bd5"></div>
<div class="a" style="left:602px;top:256px;width:68px;height:22px;background:#ffc000"></div>
<div class="a" style="left:669px;top:256px;width:68px;height:22px;background:#ffc000"></div>
<div class="a" style="left:535px;top:298px;width:68px;height:22px;background:#ffc000"></div>
<div class="a" style="left:602px;top:298px;width:68px;height:22px;background:#ffc000"></div>
<div class="a" style="left:669px;top:298px;width:68px;height:22px;background:#ffc000"></div>
<div class="a" style="left:535px;top:340px;width:68px;height:22px;background:#ffc000"></div>
<div class="a" style="left:602px;top:340px;width:68px;height:22px;background:#ffc000"></div>
<div class="a" style="left:669px;top:340px;width:68px;height:22px;background:#ffc000"></div>
<div class="a" style="left:736px;top:467px;width:68px;height:22px;background:#ffc000"></div>
<div class="a" style="left:602px;top:637px;width:68px;height:22px;background:#ffc000"></div>
<div class="a" style="left:736px;top:637px;width:68px;height:22px;background:#5b9bd5"></div>
<div class="a" style="left:602px;top:679px;width:68px;height:22px;background:#ffc000"></div>
<div class="a" style="left:736px;top:679px;width:68px;height:22px;background:#5b9bd5"></div>
<div class="a" style="left:803px;top:86px;width:68px;height:22px;background:#ffc000"></div>
<div class="a" style="left:870px;top:86px;width:68px;height:22px;background:#ffc000"></div>
<div class="a" style="left:1004px;top:86px;width:68px;height:22px;background:#ffc000"></div>
<div class="a" style="left:803px;top:128px;width:68px;height:22px;background:#ffc000"></div>
<div class="a" style="left:870px;top:128px;width:68px;height:22px;background:#5b9bd5"></div>
<div class="a" style="left:937px;top:128px;width:68px;height:22px;background:#5b9bd5"></div>
<div class="a" style="left:1004px;top:128px;width:68px;height:22px;background:#ffc000"></div>
<div class="a" style="left:803px;top:171px;width:68px;height:23px;background:#ffc000"></div>
<div class="a" style="left:870px;top:171px;width:68px;height:23px;background:#ffc000"></div>
<div class="a" style="left:937px;top:171px;width:68px;height:23px;background:#ffc000"></div>
<div class="a" style="left:870px;top:214px;width:68px;height:22px;background:#ffc000"></div>
<div class="a" style="left:937px;top:214px;width:68px;height:22px;background:#ffc000"></div>
<div class="a" style="left:870px;top:256px;width:68px;height:22px;background:#ffc000"></div>
<div class="a" style="left:937px;top:256px;width:68px;height:22px;background:#ffc000"></div>
<div class="a" style="left:803px;top:298px;width:68px;height:22px;background:#ffc000"></div>
<div class="a" style="left:870px;top:298px;width:68px;height:22px;background:#ffc000"></div>
<div class="a" style="left:937px;top:298px;width:68px;height:22px;background:#ffc000"></div>
<div class="a" style="left:803px;top:340px;width:68px;height:22px;background:#5b9bd5"></div>
<div class="a" style="left:870px;top:340px;width:68px;height:22px;background:#7030a0"></div>
<div class="a" style="left:1004px;top:340px;width:68px;height:22px;background:#5b9bd5"></div>
<div class="a" style="left:1004px;top:467px;width:68px;height:22px;background:#5b9bd5"></div>
<div class="a" style="left:870px;top:637px;width:68px;height:22px;background:#ffc000"></div>
<div class="a" style="left:1004px;top:637px;width:68px;height:22px;background:#ffc000"></div>
<div class="a" style="left:870px;top:679px;width:68px;height:22px;background:#5b9bd5"></div>
<div class="a" style="left:1004px;top:679px;width:68px;height:22px;background:#ffc000"></div>
<div class="a" style="left:1071px;top:86px;width:68px;height:22px;background:#ffc000"></div>
<div class="a" style="left:1138px;top:86px;width:68px;height:22px;background:#ffc000"></div>
<div class="a" style="left:1205px;top:86px;width:68px;height:22px;background:#5b9bd5"></div>
<div class="a" style="left:1272px;top:86px;width:68px;height:22px;background:#ffc000"></div>
<div class="a" style="left:1071px;top:128px;width:68px;height:22px;background:#ffc000"></div>
<div class="a" style="left:1138px;top:128px;width:68px;height:22px;background:#5b9bd5"></div>
<div class="a" style="left:1205px;top:128px;width:68px;height:22px;background:#ffc000"></div>
<div class="a" style="left:1272px;top:128px;width:68px;height:22px;background:#ffc000"></div>
<div class="a" style="left:1071px;top:171px;width:68px;height:23px;background:#ffc000"></div>
<div class="a" style="left:1138px;top:171px;width:68px;height:23px;background:#ffc000"></div>
<div class="a" style="left:1205px;top:171px;width:68px;height:23px;background:#ffc000"></div>
<div class="a" style="left:1138px;top:214px;width:68px;height:22px;background:#ffc000"></div>
<div class="a" style="left:1205px;top:214px;width:68px;height:22px;background:#ffc000"></div>
<div class="a" style="left:1138px;top:256px;width:68px;height:22px;background:#ffc000"></div>
<div class="a" style="left:1205px;top:256px;width:68px;height:22px;background:#ffc000"></div>
<div class="a" style="left:1071px;top:298px;width:68px;height:22px;background:#ffc000"></div>
<div class="a" style="left:1138px;top:298px;width:68px;height:22px;background:#ffc000"></div>
<div class="a" style="left:1205px;top:298px;width:68px;height:22px;background:#ffc000"></div>
<div class="a" style="left:1071px;top:340px;width:68px;height:22px;background:#ffc000"></div>
<div class="a" style="left:1138px;top:340px;width:68px;height:22px;background:#ffc000"></div>
<div class="a" style="left:1205px;top:340px;width:68px;height:22px;background:#ffc000"></div>
<div class="a" style="left:1272px;top:467px;width:68px;height:22px;background:#ffc000"></div>
<div class="a" style="left:1138px;top:637px;width:68px;height:22px;background:#ffc000"></div>
<div class="a" style="left:1272px;top:637px;width:68px;height:22px;background:#5b9bd5"></div>
<div class="a" style="left:1138px;top:679px;width:68px;height:22px;background:#5b9bd5"></div>
<div class="a" style="left:1272px;top:679px;width:68px;height:22px;background:#ffc000"></div>
<div class="a" style="left:1339px;top:86px;width:68px;height:22px;background:#ffc000"></div>
<div class="a" style="left:1406px;top:86px;width:68px;height:22px;background:#ffc000"></div>
<div class="a" style="left:1473px;top:86px;width:68px;height:22px;background:#5b9bd5"></div>
<div class="a" style="left:1540px;top:86px;width:68px;height:22px;background:#ffc000"></div>
<div class="a" style="left:1339px;top:128px;width:68px;height:22px;background:#ffc000"></div>
<div class="a" style="left:1406px;top:128px;width:68px;height:22px;background:#5b9bd5"></div>
<div class="a" style="left:1473px;top:128px;width:68px;height:22px;background:#ffc000"></div>
<div class="a" style="left:1540px;top:128px;width:68px;height:22px;background:#ffc000"></div>
<div class="a" style="left:1339px;top:171px;width:68px;height:23px;background:#ffc000"></div>
<div class="a" style="left:1406px;top:171px;width:68px;height:23px;background:#ffc000"></div>
<div class="a" style="left:1473px;top:171px;width:68px;height:23px;background:#ffc000"></div>
<div class="a" style="left:1406px;top:214px;width:68px;height:22px;background:#ffc000"></div>
<div class="a" style="left:1473px;top:214px;width:68px;height:22px;background:#ffc000"></div>
<div class="a" style="left:1406px;top:256px;width:68px;height:22px;background:#ffc000"></div>
<div class="a" style="left:1473px;top:256px;width:68px;height:22px;background:#ffc000"></div>
<div class="a" style="left:1339px;top:298px;width:68px;height:22px;background:#ffc000"></div>
<div class="a" style="left:1406px;top:298px;width:68px;height:22px;background:#ffc000"></div>
<div class="a" style="left:1473px;top:298px;width:68px;height:22px;background:#ffc000"></div>
<div class="a" style="left:1339px;top:340px;width:68px;height:22px;background:#ffc000"></div>
<div class="a" style="left:1406px;top:340px;width:68px;height:22px;background:#ffff00"></div>
<div class="a" style="left:1473px;top:340px;width:68px;height:22px;background:#ffc000"></div>
<div class="a" style="left:1540px;top:467px;width:68px;height:22px;background:#ffc000"></div>
<div class="a" style="left:1406px;top:637px;width:68px;height:22px;background:#5b9bd5"></div>
<div class="a" style="left:1540px;top:637px;width:68px;height:22px;background:#ffc000"></div>
<div class="a" style="left:1406px;top:679px;width:68px;height:22px;background:#5b9bd5"></div>
<div class="a" style="left:1540px;top:679px;width:68px;height:22px;background:#ffc000"></div>
<div class="a" style="left:1607px;top:86px;width:68px;height:22px;background:#5b9bd5"></div>
<div class="a" style="left:1674px;top:86px;width:68px;height:22px;background:#5b9bd5"></div>
<div class="a" style="left:1741px;top:86px;width:68px;height:22px;background:#5b9bd5"></div>
<div class="a" style="left:1808px;top:86px;width:68px;height:22px;background:#5b9bd5"></div>
<div class="a" style="left:1607px;top:128px;width:68px;height:22px;background:#ffc000"></div>
<div class="a" style="left:1674px;top:128px;width:68px;height:22px;background:#7030a0"></div>
<div class="a" style="left:1741px;top:128px;width:68px;height:22px;background:#ffc000"></div>
<div class="a" style="left:1808px;top:128px;width:68px;height:22px;background:#ffc000"></div>
<div class="a" style="left:1607px;top:171px;width:68px;height:23px;background:#5b9bd5"></div>
<div class="a" style="left:1674px;top:171px;width:68px;height:23px;background:#5b9bd5"></div>
<div class="a" style="left:1808px;top:171px;width:68px;height:23px;background:#5b9bd5"></div>
<div class="a" style="left:1674px;top:214px;width:68px;height:22px;background:#5b9bd5"></div>
<div class="a" style="left:1808px;top:214px;width:68px;height:22px;background:#5b9bd5"></div>
<div class="a" style="left:1674px;top:256px;width:68px;height:22px;background:#ffc000"></div>
<div class="a" style="left:1741px;top:256px;width:68px;height:22px;background:#ffc000"></div>
<div class="a" style="left:1607px;top:298px;width:68px;height:22px;background:#ffc000"></div>
<div class="a" style="left:1674px;top:298px;width:68px;height:22px;background:#ffc000"></div>
<div class="a" style="left:1741px;top:298px;width:68px;height:22px;background:#ffc000"></div>
<div class="a" style="left:1607px;top:340px;width:68px;height:22px;background:#ffc000"></div>
<div class="a" style="left:1674px;top:340px;width:68px;height:22px;background:#ffff00"></div>
<div class="a" style="left:1741px;top:340px;width:68px;height:22px;background:#ffc000"></div>
<div class="a" style="left:1808px;top:467px;width:68px;height:22px;background:#ffc000"></div>
<div class="a" style="left:1674px;top:637px;width:68px;height:22px;background:#ffc000"></div>
<div class="a" style="left:1808px;top:637px;width:68px;height:22px;background:#5b9bd5"></div>
<div class="a" style="left:1674px;top:679px;width:68px;height:22px;background:#ffc000"></div>
<div class="a" style="left:1808px;top:679px;width:68px;height:22px;background:#5b9bd5"></div>
<div class="a" style="left:0px;top:594px;width:1868px;height:1px;background:#c4c4c4"></div>
<div class="a" style="left:0px;top:615px;width:1868px;height:2px;background:#c4c4c4"></div>
<div class="a" style="left:65px;top:594px;width:2px;height:23px;background:#c4c4c4"></div>
<div class="a" style="left:132px;top:594px;width:2px;height:23px;background:#c4c4c4"></div>
<div class="a" style="left:199px;top:594px;width:2px;height:23px;background:#c4c4c4"></div>
<div class="a" style="left:266px;top:594px;width:2px;height:23px;background:#c4c4c4"></div>
<div class="a" style="left:333px;top:594px;width:2px;height:23px;background:#c4c4c4"></div>
<div class="a" style="left:400px;top:594px;width:2px;height:23px;background:#c4c4c4"></div>
<div class="a" style="left:467px;top:594px;width:2px;height:23px;background:#c4c4c4"></div>
<div class="a" style="left:534px;top:594px;width:2px;height:23px;background:#c4c4c4"></div>
<div class="a" style="left:601px;top:594px;width:2px;height:23px;background:#c4c4c4"></div>
<div class="a" style="left:668px;top:594px;width:2px;height:23px;background:#c4c4c4"></div>
<div class="a" style="left:735px;top:594px;width:2px;height:23px;background:#c4c4c4"></div>
<div class="a" style="left:802px;top:594px;width:2px;height:23px;background:#c4c4c4"></div>
<div class="a" style="left:869px;top:594px;width:2px;height:23px;background:#c4c4c4"></div>
<div class="a" style="left:936px;top:594px;width:2px;height:23px;background:#c4c4c4"></div>
<div class="a" style="left:1003px;top:594px;width:2px;height:23px;background:#c4c4c4"></div>
<div class="a" style="left:1070px;top:594px;width:2px;height:23px;background:#c4c4c4"></div>
<div class="a" style="left:1137px;top:594px;width:2px;height:23px;background:#c4c4c4"></div>
<div class="a" style="left:1204px;top:594px;width:2px;height:23px;background:#c4c4c4"></div>
<div class="a" style="left:1271px;top:594px;width:2px;height:23px;background:#c4c4c4"></div>
<div class="a" style="left:1338px;top:594px;width:2px;height:23px;background:#c4c4c4"></div>
<div class="a" style="left:1405px;top:594px;width:2px;height:23px;background:#c4c4c4"></div>
<div class="a" style="left:1472px;top:594px;width:2px;height:23px;background:#c4c4c4"></div>
<div class="a" style="left:1539px;top:594px;width:2px;height:23px;background:#c4c4c4"></div>
<div class="a" style="left:1606px;top:594px;width:2px;height:23px;background:#c4c4c4"></div>
<div class="a" style="left:1673px;top:594px;width:2px;height:23px;background:#c4c4c4"></div>
<div class="a" style="left:1740px;top:594px;width:2px;height:23px;background:#c4c4c4"></div>
<div class="a" style="left:1807px;top:594px;width:2px;height:23px;background:#c4c4c4"></div>
<div class="a" style="left:1874px;top:594px;width:2px;height:23px;background:#c4c4c4"></div>
<div class="a" style="left:0px;top:20px;width:1868px;height:2px;background:#000"></div>
<div class="a" style="left:0px;top:42px;width:1868px;height:2px;background:#000"></div>
<div class="a" style="left:0px;top:64px;width:1868px;height:2px;background:#000"></div>
<div class="a" style="left:266px;top:0px;width:2px;height:383px;background:#000"></div>
<div class="a" style="left:266px;top:404px;width:2px;height:191px;background:#000"></div>
<div class="a" style="left:266px;top:616px;width:2px;height:84px;background:#000"></div>
<div class="a" style="left:534px;top:0px;width:2px;height:383px;background:#000"></div>
<div class="a" style="left:534px;top:404px;width:2px;height:191px;background:#000"></div>
<div class="a" style="left:534px;top:616px;width:2px;height:84px;background:#000"></div>
<div class="a" style="left:802px;top:0px;width:2px;height:383px;background:#000"></div>
<div class="a" style="left:802px;top:404px;width:2px;height:191px;background:#000"></div>
<div class="a" style="left:802px;top:616px;width:2px;height:84px;background:#000"></div>
<div class="a" style="left:1070px;top:0px;width:2px;height:383px;background:#000"></div>
<div class="a" style="left:1070px;top:404px;width:2px;height:191px;background:#000"></div>
<div class="a" style="left:1070px;top:616px;width:2px;height:84px;background:#000"></div>
<div class="a" style="left:1338px;top:0px;width:2px;height:383px;background:#000"></div>
<div class="a" style="left:1338px;top:404px;width:2px;height:191px;background:#000"></div>
<div class="a" style="left:1338px;top:616px;width:2px;height:84px;background:#000"></div>
<div class="a" style="left:1606px;top:0px;width:2px;height:383px;background:#000"></div>
<div class="a" style="left:1606px;top:404px;width:2px;height:191px;background:#000"></div>
<div class="a" style="left:1606px;top:616px;width:2px;height:84px;background:#000"></div>
<div class="a" style="left:132px;top:21px;width:2px;height:45px;background:#000"></div>
<div class="a" style="left:400px;top:21px;width:2px;height:45px;background:#000"></div>
<div class="a" style="left:668px;top:21px;width:2px;height:45px;background:#000"></div>
<div class="a" style="left:936px;top:21px;width:2px;height:45px;background:#000"></div>
<div class="a" style="left:1204px;top:21px;width:2px;height:45px;background:#000"></div>
<div class="a" style="left:1472px;top:21px;width:2px;height:45px;background:#000"></div>
<div class="a" style="left:1740px;top:21px;width:2px;height:45px;background:#000"></div>
<div class="t cell" style="left:0px;top:0px;width:267px;height:21px;justify-content:center;padding-bottom:5px"><span class="n">5</span><span class="j">月</span><span class="n">27</span><span class="j">日</span></div>
<div class="t cell" style="left:268px;top:0px;width:267px;height:21px;justify-content:center;padding-bottom:5px"><span class="n">5</span><span class="j">月</span><span class="n">26</span><span class="j">日</span></div>
<div class="t cell" style="left:536px;top:0px;width:267px;height:21px;justify-content:center;padding-bottom:5px"><span class="n">5</span><span class="j">月</span><span class="n">25</span><span class="j">日</span></div>
<div class="t cell" style="left:804px;top:0px;width:267px;height:21px;justify-content:center;padding-bottom:5px"><span class="n">5</span><span class="j">月</span><span class="n">24</span><span class="j">日</span></div>
<div class="t cell" style="left:1072px;top:0px;width:267px;height:21px;justify-content:center;padding-bottom:5px"><span class="n">5</span><span class="j">月</span><span class="n">21</span><span class="j">日</span></div>
<div class="t cell" style="left:1340px;top:0px;width:267px;height:21px;justify-content:center;padding-bottom:5px"><span class="n">5</span><span class="j">月</span><span class="n">20</span><span class="j">日</span></div>
<div class="t cell" style="left:1608px;top:0px;width:267px;height:21px;justify-content:center;padding-bottom:5px"><span class="n">5</span><span class="j">月</span><span class="n">19</span><span class="j">日</span></div>
<div class="t cell" style="left:0px;top:22px;width:66px;height:21px;justify-content:flex-end;padding-right:2px;overflow:hidden;color:#000"><span class="n">100%</span></div>
<div class="t cell" style="left:67px;top:22px;width:66px;height:21px;justify-content:flex-end;padding-right:2px;overflow:hidden;color:#000"><span class="n">28485.52</span></div>
<div class="t cell" style="left:0px;top:66px;height:20px;padding-left:3px;color:#000;width:66px;overflow:hidden;"><span class="j">夜間</span><span class="n">/</span><span class="j">日経</span></div>
<div class="t cell" style="left:67px;top:66px;height:20px;padding-left:3px;color:#000;width:66px;overflow:hidden;"><span class="j">ダウ前日比</span></div>
<div class="t cell" style="left:134px;top:66px;height:20px;padding-left:3px;color:#000;width:66px;overflow:hidden;"><span style="display:inline-block;transform:scaleX(0.87);transform-origin:0 100%"><span class="j">円高</span></span></div>
<div class="t cell" style="left:201px;top:66px;height:20px;padding-left:3px;color:#000;width:66px;overflow:hidden;"><span class="l">TOP</span><span class="j">前日比</span></div>
<div class="t cell" style="left:0px;top:87px;width:66px;height:20px;justify-content:flex-end;padding-right:6px;overflow:hidden;color:#000"><span class="n">70.99</span></div>
<div class="t cell" style="left:67px;top:87px;width:66px;height:20px;justify-content:flex-end;padding-right:2px;overflow:hidden;color:#000"><span class="n">0</span></div>
<div class="t cell" style="left:134px;top:87px;width:66px;height:20px;justify-content:flex-end;padding-right:2px;overflow:hidden;color:#000"><span class="n">0</span></div>
<div class="t cell" style="left:201px;top:87px;width:66px;height:20px;justify-content:flex-end;padding-right:2px;overflow:hidden;color:#000"><span class="n">-9.65</span></div>
<div class="t cell" style="left:0px;top:108px;height:20px;padding-left:3px;color:#000;width:66px;overflow:hidden;"><span class="j">日経陽陰</span></div>
<div class="t cell" style="left:67px;top:108px;height:20px;padding-left:3px;color:#000;width:66px;overflow:hidden;"><span class="j">空売比率</span></div>
<div class="t cell" style="left:134px;top:108px;height:20px;padding-left:3px;color:#000;width:66px;overflow:hidden;"><span style="display:inline-block;transform:scaleX(0.87);transform-origin:0 100%"><span class="j">マザ陽陰</span></span></div>
<div class="t cell" style="left:201px;top:108px;height:20px;padding-left:3px;color:#000;width:66px;overflow:hidden;"><span class="l">top</span><span class="j">陽陰</span></div>
<div class="t cell" style="left:0px;top:129px;height:20px;padding-left:3px;color:#000;width:66px;overflow:hidden;"><span class="j">陽</span></div>
<div class="t cell" style="left:67px;top:129px;width:66px;height:20px;justify-content:flex-end;padding-right:2px;overflow:hidden;color:#000"><span class="n">44%</span></div>
<div class="t cell" style="left:134px;top:129px;height:20px;padding-left:3px;color:#000;width:66px;overflow:hidden;"><span class="j">陰</span></div>
<div class="t cell" style="left:201px;top:129px;height:20px;padding-left:3px;color:#000;width:66px;overflow:hidden;"><span class="j">陰</span></div>
<div class="t cell" style="left:0px;top:150px;height:21px;padding-left:3px;color:#000;width:66px;overflow:hidden;"><span class="j">前日比</span></div>
<div class="t cell" style="left:67px;top:150px;height:21px;padding-left:3px;color:#000;width:66px;overflow:hidden;"><span class="j">値上下比</span></div>
<div class="t cell" style="left:134px;top:150px;height:21px;padding-left:3px;color:#000;width:66px;overflow:hidden;"><span class="j">値上</span></div>
<div class="t cell" style="left:201px;top:150px;height:21px;padding-left:3px;color:#000;width:66px;overflow:hidden;"><span class="j">値下</span></div>
<div class="t cell" style="left:0px;top:172px;width:66px;height:21px;justify-content:flex-end;padding-right:2px;overflow:hidden;color:#000"><span class="n">-93.18</span></div>
<div class="t cell" style="left:67px;top:172px;width:66px;height:21px;justify-content:flex-end;padding-right:2px;overflow:hidden;color:#000"><span class="n">33%</span></div>
<div class="t cell" style="left:134px;top:172px;width:66px;height:21px;justify-content:flex-end;padding-right:2px;overflow:hidden;color:#000"><span class="n">1438</span></div>
<div class="t cell" style="left:201px;top:172px;width:66px;height:21px;justify-content:flex-end;padding-right:2px;overflow:hidden;color:#000"><span class="n">2922</span></div>
<div class="t cell" style="left:67px;top:194px;height:20px;padding-left:3px;color:#000;width:66px;overflow:hidden;"><span class="j">東一前日比</span></div>
<div class="t cell" style="left:134px;top:194px;height:20px;padding-left:3px;color:#000;width:66px;overflow:hidden;"><span class="j">値上</span></div>
<div class="t cell" style="left:201px;top:194px;height:20px;padding-left:3px;color:#000;"><span class="j">値下</span></div>
<div class="t cell" style="left:67px;top:215px;height:20px;padding-left:3px;color:#000;width:66px;overflow:hidden;"><span class="n">24%</span></div>
<div class="t cell" style="left:134px;top:215px;height:20px;padding-left:3px;color:#000;width:66px;overflow:hidden;"><span class="n">557</span></div>
<div class="t cell" style="left:201px;top:215px;height:20px;padding-left:3px;color:#000;"><span class="n">1732</span></div>
<div class="t cell" style="left:67px;top:236px;height:20px;padding-left:3px;color:#000;width:66px;overflow:hidden;"><span class="j">東二前日比</span></div>
<div class="t cell" style="left:134px;top:236px;height:20px;padding-left:3px;color:#000;width:66px;overflow:hidden;"><span class="j">値上</span></div>
<div class="t cell" style="left:201px;top:236px;height:20px;padding-left:3px;color:#000;"><span class="j">値下</span></div>
<div class="t cell" style="left:67px;top:257px;height:20px;padding-left:3px;color:#000;width:66px;overflow:hidden;"><span class="n">42%</span></div>
<div class="t cell" style="left:134px;top:257px;height:20px;padding-left:3px;color:#000;width:66px;overflow:hidden;"><span class="n">204</span></div>
<div class="t cell" style="left:201px;top:257px;height:20px;padding-left:3px;color:#000;"><span class="n">285</span></div>
<div class="t cell" style="left:0px;top:278px;height:20px;padding-left:3px;color:#000;width:66px;overflow:hidden;"><span class="l">JQ</span><span class="j">前日比</span></div>
<div class="t cell" style="left:67px;top:278px;height:20px;padding-left:3px;color:#000;width:66px;overflow:hidden;"><span class="l">jq</span><span class="j">前日比</span></div>
<div class="t cell" style="left:134px;top:278px;height:20px;padding-left:3px;color:#000;width:66px;overflow:hidden;"><span class="j">値上</span></div>
<div class="t cell" style="left:201px;top:278px;height:20px;padding-left:3px;color:#000;width:66px;overflow:hidden;"><span class="j">値下</span></div>
<div class="t cell" style="left:0px;top:299px;height:20px;padding-left:3px;color:#000;width:66px;overflow:hidden;"><span class="n">1.23</span></div>
<div class="t cell" style="left:67px;top:299px;height:20px;padding-left:3px;color:#000;width:66px;overflow:hidden;"><span class="n">43%</span></div>
<div class="t cell" style="left:134px;top:299px;height:20px;padding-left:3px;color:#000;width:66px;overflow:hidden;"><span class="n">316</span></div>
<div class="t cell" style="left:201px;top:299px;height:20px;padding-left:3px;color:#000;width:66px;overflow:hidden;"><span class="n">417</span></div>
<div class="t cell" style="left:0px;top:320px;height:20px;padding-left:3px;color:#000;width:66px;overflow:hidden;"><span class="j">マザ前日比</span></div>
<div class="t cell" style="left:67px;top:320px;height:20px;padding-left:3px;color:#000;width:66px;overflow:hidden;"><span class="j">値上下比</span></div>
<div class="t cell" style="left:134px;top:320px;height:20px;padding-left:3px;color:#000;width:66px;overflow:hidden;"><span class="j">値上</span></div>
<div class="t cell" style="left:201px;top:320px;height:20px;padding-left:3px;color:#000;width:66px;overflow:hidden;"><span class="j">値下</span></div>
<div class="t cell" style="left:0px;top:341px;height:20px;padding-left:3px;color:#000;width:66px;overflow:hidden;"><span class="n">-2.70</span></div>
<div class="t cell" style="left:67px;top:341px;height:20px;padding-left:3px;color:#000;width:66px;overflow:hidden;"><span class="n">34%</span></div>
<div class="t cell" style="left:134px;top:341px;height:20px;padding-left:3px;color:#000;width:66px;overflow:hidden;"><span class="n">124</span></div>
<div class="t cell" style="left:201px;top:341px;height:20px;padding-left:3px;color:#000;width:66px;overflow:hidden;"><span class="n">239</span></div>
<div class="t cell" style="left:0px;top:362px;height:20px;padding-left:3px;color:#000;width:66px;overflow:hidden;"><span class="j">終値</span></div>
<div class="t cell" style="left:67px;top:362px;height:20px;padding-left:3px;color:#000;width:66px;overflow:hidden;"><span class="j">始値</span></div>
<div class="t cell" style="left:134px;top:362px;height:20px;padding-left:3px;color:#000;width:66px;overflow:hidden;"><span class="j">高値</span></div>
<div class="t cell" style="left:201px;top:362px;height:20px;padding-left:3px;color:#000;width:66px;overflow:hidden;"><span class="j">安値</span></div>
<div class="t cell" style="left:0px;top:383px;width:66px;height:21px;justify-content:flex-end;padding-right:2px;overflow:hidden;color:#000"><span class="n">28,549.01</span></div>
<div class="t cell" style="left:67px;top:383px;width:66px;height:21px;justify-content:flex-end;padding-right:2px;overflow:hidden;color:#000"><span class="n">28,543.32</span></div>
<div class="t cell" style="left:134px;top:383px;width:66px;height:21px;justify-content:flex-end;padding-right:2px;overflow:hidden;color:#000"><span class="n">28,587.21</span></div>
<div class="t cell" style="left:201px;top:383px;width:66px;height:21px;justify-content:flex-end;padding-right:2px;overflow:hidden;color:#000"><span class="n">28,360.56</span></div>
<div class="t cell" style="left:0px;top:405px;height:20px;padding-left:3px;color:#000;width:66px;overflow:hidden;"><span class="j">マザ終値</span></div>
<div class="t cell" style="left:67px;top:405px;height:20px;padding-left:3px;color:#000;width:66px;overflow:hidden;"><span class="j">始値</span></div>
<div class="t cell" style="left:134px;top:405px;height:20px;padding-left:3px;color:#000;width:66px;overflow:hidden;"><span class="l">TOP</span><span class="j">終値</span></div>
<div class="t cell" style="left:201px;top:405px;height:20px;padding-left:3px;color:#000;width:66px;overflow:hidden;"><span class="j">始値</span></div>
<div class="t cell" style="left:0px;top:426px;width:66px;height:20px;justify-content:flex-end;padding-right:2px;overflow:hidden;color:#000"><span class="n">1,145.88</span></div>
<div class="t cell" style="left:134px;top:426px;width:66px;height:20px;justify-content:flex-end;padding-right:2px;overflow:hidden;color:#000"><span class="n">1,911.02</span></div>
<div class="t cell" style="left:67px;top:447px;height:20px;padding-left:3px;color:#000;width:66px;overflow:hidden;"><span class="j">下降</span></div>
<div class="t cell" style="left:134px;top:447px;height:20px;padding-left:3px;color:#000;"><span class="j">ジャスダック</span></div>
<div class="t cell" style="left:67px;top:468px;height:20px;padding-left:3px;color:#000;width:66px;overflow:hidden;"><span class="j">下降</span></div>
<div class="t cell" style="left:134px;top:468px;width:66px;height:20px;justify-content:flex-end;padding-right:2px;overflow:hidden;color:#000"><span class="n">3872.6</span></div>
<div class="t cell" style="left:201px;top:468px;height:20px;padding-left:3px;color:#000;"><span class="j">陰</span></div>
<div class="t cell" style="left:0px;top:489px;height:20px;padding-left:3px;color:#000;width:66px;overflow:hidden;"><span class="j">先物夜間</span></div>
<div class="t cell" style="left:67px;top:489px;height:20px;padding-left:3px;color:#000;width:66px;overflow:hidden;"><span class="j">始値</span></div>
<div class="t cell" style="left:134px;top:489px;height:20px;padding-left:3px;color:#000;width:66px;overflow:hidden;"><span class="j">高値</span></div>
<div class="t cell" style="left:201px;top:489px;height:20px;padding-left:3px;color:#000;width:66px;overflow:hidden;"><span class="j">安値</span></div>
<div class="t cell" style="left:0px;top:510px;width:66px;height:20px;justify-content:flex-end;padding-right:2px;overflow:hidden;color:#000"><span class="n">28620</span></div>
<div class="t cell" style="left:0px;top:531px;height:20px;padding-left:3px;color:#000;width:66px;overflow:hidden;"><span class="j">ダウ終値</span></div>
<div class="t cell" style="left:67px;top:531px;height:20px;padding-left:3px;color:#000;width:66px;overflow:hidden;"><span class="j">始値</span></div>
<div class="t cell" style="left:134px;top:531px;height:20px;padding-left:3px;color:#000;width:66px;overflow:hidden;"><span class="j">高値</span></div>
<div class="t cell" style="left:201px;top:531px;height:20px;padding-left:3px;color:#000;width:66px;overflow:hidden;"><span class="j">安値</span></div>
<div class="t cell" style="left:0px;top:552px;width:66px;height:20px;justify-content:flex-end;padding-right:2px;overflow:hidden;color:#000"><span class="n">34,323.00</span></div>
<div class="t cell" style="left:0px;top:573px;height:21px;padding-left:3px;color:#000;width:66px;overflow:hidden;"><span class="j">為替終値</span></div>
<div class="t cell" style="left:67px;top:573px;height:21px;padding-left:3px;color:#000;width:66px;overflow:hidden;"><span class="j">始値</span></div>
<div class="t cell" style="left:134px;top:573px;height:21px;padding-left:3px;color:#000;width:66px;overflow:hidden;"><span class="j">高値</span></div>
<div class="t cell" style="left:201px;top:573px;height:21px;padding-left:3px;color:#000;width:66px;overflow:hidden;"><span class="j">安値</span></div>
<div class="t cell" style="left:0px;top:595px;width:66px;height:21px;justify-content:flex-end;padding-right:2px;overflow:hidden;color:#000"><span class="n">108.78</span></div>
<div class="t cell" style="left:67px;top:595px;width:66px;height:21px;justify-content:flex-end;padding-right:2px;overflow:hidden;color:#000"><span class="n">108.79</span></div>
<div class="t cell" style="left:134px;top:595px;width:66px;height:21px;justify-content:flex-end;padding-right:2px;overflow:hidden;color:#000"><span class="n">108.9</span></div>
<div class="t cell" style="left:201px;top:595px;width:66px;height:21px;justify-content:flex-end;padding-right:2px;overflow:hidden;color:#000"><span class="n">108.69</span></div>
<div class="t cell" style="left:0px;top:638px;height:20px;padding-left:3px;color:#000;width:66px;overflow:hidden;"><span class="j">前日比</span></div>
<div class="t cell" style="left:67px;top:638px;height:20px;padding-left:3px;color:#000;width:66px;overflow:hidden;"><span class="n">15</span></div>
<div class="t cell" style="left:134px;top:638px;height:20px;padding-left:3px;color:#000;width:66px;overflow:hidden;"><span class="j">前日比</span></div>
<div class="t cell" style="left:201px;top:638px;height:20px;padding-left:3px;color:#000;width:66px;overflow:hidden;"><span class="n">-35</span></div>
<div class="t cell" style="left:0px;top:659px;height:20px;padding-left:3px;color:#000;"><span class="j">買い</span></div>
<div class="t cell" style="left:134px;top:659px;height:20px;padding-left:3px;color:#000;"><span class="j">売り</span></div>
<div class="t cell" style="left:0px;top:680px;height:20px;padding-left:3px;color:#000;width:66px;overflow:hidden;"><span class="n">406</span></div>
<div class="t cell" style="left:67px;top:680px;height:20px;padding-left:3px;color:#000;width:66px;overflow:hidden;"><span class="n">18</span></div>
<div class="t cell" style="left:134px;top:680px;height:20px;padding-left:3px;color:#000;width:66px;overflow:hidden;"><span class="n">744</span></div>
<div class="t cell" style="left:201px;top:680px;height:20px;padding-left:3px;color:#000;width:66px;overflow:hidden;"><span class="n">-31</span></div>
<div class="t cell" style="left:268px;top:22px;width:66px;height:21px;justify-content:flex-end;padding-right:2px;overflow:hidden;color:#000"><span class="n">101%</span></div>
<div class="t cell" style="left:335px;top:22px;width:66px;height:21px;justify-content:flex-end;padding-right:2px;overflow:hidden;color:#000"><span class="n">28395.37</span></div>
<div class="t cell" style="left:268px;top:44px;width:66px;height:21px;justify-content:flex-end;padding-right:2px;overflow:hidden;color:#000"><span class="n">101%</span></div>
<div class="t cell" style="left:335px;top:44px;width:66px;height:21px;justify-content:flex-end;padding-right:2px;overflow:hidden;color:#000"><span class="n">28,549.01</span></div>
<div class="t cell" style="left:268px;top:66px;height:20px;padding-left:3px;color:#000;width:66px;overflow:hidden;"><span class="j">夜間</span><span class="n">/</span><span class="j">日経</span></div>
<div class="t cell" style="left:335px;top:66px;height:20px;padding-left:3px;color:#000;width:66px;overflow:hidden;"><span class="j">ダウ前日比</span></div>
<div class="t cell" style="left:402px;top:66px;height:20px;padding-left:3px;color:#000;width:66px;overflow:hidden;"><span style="display:inline-block;transform:scaleX(0.87);transform-origin:0 100%"><span class="j">円高</span></span></div>
<div class="t cell" style="left:469px;top:66px;height:20px;padding-left:3px;color:#000;width:66px;overflow:hidden;"><span class="l">TOP</span><span class="j">前日比</span></div>
<div class="t cell" style="left:268px;top:87px;width:66px;height:20px;justify-content:flex-end;padding-right:6px;overflow:hidden;color:#000"><span class="n">-22.19</span></div>
<div class="t cell" style="left:335px;top:87px;width:66px;height:20px;justify-content:flex-end;padding-right:2px;overflow:hidden;color:#000"><span class="n">11</span></div>
<div class="t cell" style="left:402px;top:87px;width:66px;height:20px;justify-content:flex-end;padding-right:2px;overflow:hidden;color:#000"><span class="n">0</span></div>
<div class="t cell" style="left:469px;top:87px;width:66px;height:20px;justify-content:flex-end;padding-right:2px;overflow:hidden;color:#000"><span class="n">1.15</span></div>
<div class="t cell" style="left:268px;top:108px;height:20px;padding-left:3px;color:#000;width:66px;overflow:hidden;"><span class="j">日経陽陰</span></div>
<div class="t cell" style="left:335px;top:108px;height:20px;padding-left:3px;color:#000;width:66px;overflow:hidden;"><span class="j">空売比率</span></div>
<div class="t cell" style="left:402px;top:108px;height:20px;padding-left:3px;color:#000;width:66px;overflow:hidden;"><span style="display:inline-block;transform:scaleX(0.87);transform-origin:0 100%"><span class="j">マザ陽陰</span></span></div>
<div class="t cell" style="left:469px;top:108px;height:20px;padding-left:3px;color:#000;width:66px;overflow:hidden;"><span class="l">top</span><span class="j">陽陰</span></div>
<div class="t cell" style="left:268px;top:129px;height:20px;padding-left:3px;color:#000;width:66px;overflow:hidden;"><span class="j">陽</span></div>
<div class="t cell" style="left:335px;top:129px;width:66px;height:20px;justify-content:flex-end;padding-right:2px;overflow:hidden;color:#000"><span class="n">43%</span></div>
<div class="t cell" style="left:402px;top:129px;height:20px;padding-left:3px;color:#000;width:66px;overflow:hidden;"><span class="j">陽</span></div>
<div class="t cell" style="left:469px;top:129px;height:20px;padding-left:3px;color:#000;width:66px;overflow:hidden;"><span class="j">陽</span></div>
<div class="t cell" style="left:268px;top:150px;height:21px;padding-left:3px;color:#000;width:66px;overflow:hidden;"><span class="j">前日比</span></div>
<div class="t cell" style="left:335px;top:150px;height:21px;padding-left:3px;color:#000;width:66px;overflow:hidden;"><span class="j">値上下比</span></div>
<div class="t cell" style="left:402px;top:150px;height:21px;padding-left:3px;color:#000;width:66px;overflow:hidden;"><span class="j">値上</span></div>
<div class="t cell" style="left:469px;top:150px;height:21px;padding-left:3px;color:#000;width:66px;overflow:hidden;"><span class="j">値下</span></div>
<div class="t cell" style="left:268px;top:172px;width:66px;height:21px;justify-content:flex-end;padding-right:2px;overflow:hidden;color:#000"><span class="n">88.21</span></div>
<div class="t cell" style="left:335px;top:172px;width:66px;height:21px;justify-content:flex-end;padding-right:2px;overflow:hidden;color:#000"><span class="n">45%</span></div>
<div class="t cell" style="left:402px;top:172px;width:66px;height:21px;justify-content:flex-end;padding-right:2px;overflow:hidden;color:#000"><span class="n">1937</span></div>
<div class="t cell" style="left:469px;top:172px;width:66px;height:21px;justify-content:flex-end;padding-right:2px;overflow:hidden;color:#000"><span class="n">2374</span></div>
<div class="t cell" style="left:335px;top:194px;height:20px;padding-left:3px;color:#000;width:66px;overflow:hidden;"><span class="j">東一前日比</span></div>
<div class="t cell" style="left:402px;top:194px;height:20px;padding-left:3px;color:#000;width:66px;overflow:hidden;"><span class="j">値上</span></div>
<div class="t cell" style="left:469px;top:194px;height:20px;padding-left:3px;color:#000;"><span class="j">値下</span></div>
<div class="t cell" style="left:335px;top:215px;height:20px;padding-left:3px;color:#000;width:66px;overflow:hidden;"><span class="n">38%</span></div>
<div class="t cell" style="left:402px;top:215px;height:20px;padding-left:3px;color:#000;width:66px;overflow:hidden;"><span class="n">850</span></div>
<div class="t cell" style="left:469px;top:215px;height:20px;padding-left:3px;color:#000;"><span class="n">1394</span></div>
<div class="t cell" style="left:335px;top:236px;height:20px;padding-left:3px;color:#000;width:66px;overflow:hidden;"><span class="j">東二前日比</span></div>
<div class="t cell" style="left:402px;top:236px;height:20px;padding-left:3px;color:#000;width:66px;overflow:hidden;"><span class="j">値上</span></div>
<div class="t cell" style="left:469px;top:236px;height:20px;padding-left:3px;color:#000;"><span class="j">値下</span></div>
<div class="t cell" style="left:335px;top:257px;height:20px;padding-left:3px;color:#000;width:66px;overflow:hidden;"><span class="n">46%</span></div>
<div class="t cell" style="left:402px;top:257px;height:20px;padding-left:3px;color:#000;width:66px;overflow:hidden;"><span class="n">227</span></div>
<div class="t cell" style="left:469px;top:257px;height:20px;padding-left:3px;color:#000;"><span class="n">262</span></div>
<div class="t cell" style="left:268px;top:278px;height:20px;padding-left:3px;color:#000;width:66px;overflow:hidden;"><span class="l">JQ</span><span class="j">前日比</span></div>
<div class="t cell" style="left:335px;top:278px;height:20px;padding-left:3px;color:#000;width:66px;overflow:hidden;"><span class="l">jq</span><span class="j">前日比</span></div>
<div class="t cell" style="left:402px;top:278px;height:20px;padding-left:3px;color:#000;width:66px;overflow:hidden;"><span class="j">値上</span></div>
<div class="t cell" style="left:469px;top:278px;height:20px;padding-left:3px;color:#000;width:66px;overflow:hidden;"><span class="j">値下</span></div>
<div class="t cell" style="left:268px;top:299px;height:20px;padding-left:3px;color:#000;width:66px;overflow:hidden;"><span class="n">-2.81</span></div>
<div class="t cell" style="left:335px;top:299px;height:20px;padding-left:3px;color:#000;width:66px;overflow:hidden;"><span class="n">51%</span></div>
<div class="t cell" style="left:402px;top:299px;height:20px;padding-left:3px;color:#000;width:66px;overflow:hidden;"><span class="n">371</span></div>
<div class="t cell" style="left:469px;top:299px;height:20px;padding-left:3px;color:#000;width:66px;overflow:hidden;"><span class="n">358</span></div>
<div class="t cell" style="left:268px;top:320px;height:20px;padding-left:3px;color:#000;width:66px;overflow:hidden;"><span class="j">マザ前日比</span></div>
<div class="t cell" style="left:335px;top:320px;height:20px;padding-left:3px;color:#000;width:66px;overflow:hidden;"><span class="j">値上下比</span></div>
<div class="t cell" style="left:402px;top:320px;height:20px;padding-left:3px;color:#000;width:66px;overflow:hidden;"><span class="j">値上</span></div>
<div class="t cell" style="left:469px;top:320px;height:20px;padding-left:3px;color:#000;width:66px;overflow:hidden;"><span class="j">値下</span></div>
<div class="t cell" style="left:268px;top:341px;height:20px;padding-left:3px;color:#000;width:66px;overflow:hidden;"><span class="n">15.10</span></div>
<div class="t cell" style="left:335px;top:341px;height:20px;padding-left:3px;color:#000;width:66px;overflow:hidden;"><span class="n">55%</span></div>
<div class="t cell" style="left:402px;top:341px;height:20px;padding-left:3px;color:#000;width:66px;overflow:hidden;"><span class="n">201</span></div>
<div class="t cell" style="left:469px;top:341px;height:20px;padding-left:3px;color:#000;width:66px;overflow:hidden;"><span class="n">165</span></div>
<div class="t cell" style="left:268px;top:362px;height:20px;padding-left:3px;color:#000;width:66px;overflow:hidden;"><span class="j">終値</span></div>
<div class="t cell" style="left:335px;top:362px;height:20px;padding-left:3px;color:#000;width:66px;overflow:hidden;"><span class="j">始値</span></div>
<div class="t cell" style="left:402px;top:362px;height:20px;padding-left:3px;color:#000;width:66px;overflow:hidden;"><span class="j">高値</span></div>
<div class="t cell" style="left:469px;top:362px;height:20px;padding-left:3px;color:#000;width:66px;overflow:hidden;"><span class="j">安値</span></div>
<div class="t cell" style="left:268px;top:383px;width:66px;height:21px;justify-content:flex-end;padding-right:2px;overflow:hidden;color:#000"><span class="n">28,642.19</span></div>
<div class="t cell" style="left:335px;top:383px;width:66px;height:21px;justify-content:flex-end;padding-right:2px;overflow:hidden;color:#000"><span class="n">28,396.62</span></div>
<div class="t cell" style="left:402px;top:383px;width:66px;height:21px;justify-content:flex-end;padding-right:2px;overflow:hidden;color:#000"><span class="n">28,710.83</span></div>
<div class="t cell" style="left:469px;top:383px;width:66px;height:21px;justify-content:flex-end;padding-right:2px;overflow:hidden;color:#000"><span class="n">28,396.62</span></div>
<div class="t cell" style="left:268px;top:405px;height:20px;padding-left:3px;color:#000;width:66px;overflow:hidden;"><span class="j">マザ終値</span></div>
<div class="t cell" style="left:335px;top:405px;height:20px;padding-left:3px;color:#000;width:66px;overflow:hidden;"><span class="j">始値</span></div>
<div class="t cell" style="left:402px;top:405px;height:20px;padding-left:3px;color:#000;width:66px;overflow:hidden;"><span class="l">TOP</span><span class="j">終値</span></div>
<div class="t cell" style="left:469px;top:405px;height:20px;padding-left:3px;color:#000;width:66px;overflow:hidden;"><span class="j">始値</span></div>
<div class="t cell" style="left:268px;top:426px;width:66px;height:20px;justify-content:flex-end;padding-right:2px;overflow:hidden;color:#000"><span class="n">1,148.58</span></div>
<div class="t cell" style="left:402px;top:426px;width:66px;height:20px;justify-content:flex-end;padding-right:2px;overflow:hidden;color:#000"><span class="n">1,920.67</span></div>
<div class="t cell" style="left:335px;top:447px;height:20px;padding-left:3px;color:#000;width:66px;overflow:hidden;"><span class="j">下降</span></div>
<div class="t cell" style="left:402px;top:447px;height:20px;padding-left:3px;color:#000;"><span class="j">ジャスダック</span></div>
<div class="t cell" style="left:335px;top:468px;height:20px;padding-left:3px;color:#000;width:66px;overflow:hidden;"><span class="j">下降</span></div>
<div class="t cell" style="left:402px;top:468px;width:66px;height:20px;justify-content:flex-end;padding-right:2px;overflow:hidden;color:#000"><span class="n">3871.37</span></div>
<div class="t cell" style="left:469px;top:468px;height:20px;padding-left:3px;color:#000;width:66px;overflow:hidden;"><span class="j">陰</span></div>
<div class="t cell" style="left:268px;top:489px;height:20px;padding-left:3px;color:#000;width:66px;overflow:hidden;"><span class="j">先物夜間</span></div>
<div class="t cell" style="left:335px;top:489px;height:20px;padding-left:3px;color:#000;width:66px;overflow:hidden;"><span class="j">始値</span></div>
<div class="t cell" style="left:402px;top:489px;height:20px;padding-left:3px;color:#000;width:66px;overflow:hidden;"><span class="j">高値</span></div>
<div class="t cell" style="left:469px;top:489px;height:20px;padding-left:3px;color:#000;width:66px;overflow:hidden;"><span class="j">安値</span></div>
<div class="t cell" style="left:268px;top:510px;width:66px;height:20px;justify-content:flex-end;padding-right:2px;overflow:hidden;color:#000"><span class="n">28620</span></div>
<div class="t cell" style="left:268px;top:531px;height:20px;padding-left:3px;color:#000;width:66px;overflow:hidden;"><span class="j">ダウ終値</span></div>
<div class="t cell" style="left:335px;top:531px;height:20px;padding-left:3px;color:#000;width:66px;overflow:hidden;"><span class="j">始値</span></div>
<div class="t cell" style="left:402px;top:531px;height:20px;padding-left:3px;color:#000;width:66px;overflow:hidden;"><span class="j">高値</span></div>
<div class="t cell" style="left:469px;top:531px;height:20px;padding-left:3px;color:#000;width:66px;overflow:hidden;"><span class="j">安値</span></div>
<div class="t cell" style="left:268px;top:552px;width:66px;height:20px;justify-content:flex-end;padding-right:2px;overflow:hidden;color:#000"><span class="n">34,323.00</span></div>
<div class="t cell" style="left:268px;top:573px;height:21px;padding-left:3px;color:#000;width:66px;overflow:hidden;"><span class="j">為替終値</span></div>
<div class="t cell" style="left:335px;top:573px;height:21px;padding-left:3px;color:#000;width:66px;overflow:hidden;"><span class="j">始値</span></div>
<div class="t cell" style="left:402px;top:573px;height:21px;padding-left:3px;color:#000;width:66px;overflow:hidden;"><span class="j">高値</span></div>
<div class="t cell" style="left:469px;top:573px;height:21px;padding-left:3px;color:#000;width:66px;overflow:hidden;"><span class="j">安値</span></div>
<div class="t cell" style="left:268px;top:595px;width:66px;height:21px;justify-content:flex-end;padding-right:2px;overflow:hidden;color:#000"><span class="n">108.78</span></div>
<div class="t cell" style="left:335px;top:595px;width:66px;height:21px;justify-content:flex-end;padding-right:2px;overflow:hidden;color:#000"><span class="n">108.79</span></div>
<div class="t cell" style="left:402px;top:595px;width:66px;height:21px;justify-content:flex-end;padding-right:2px;overflow:hidden;color:#000"><span class="n">108.9</span></div>
<div class="t cell" style="left:469px;top:595px;width:66px;height:21px;justify-content:flex-end;padding-right:2px;overflow:hidden;color:#000"><span class="n">108.69</span></div>
<div class="t cell" style="left:268px;top:638px;height:20px;padding-left:3px;color:#000;width:66px;overflow:hidden;"><span class="j">前日比</span></div>
<div class="t cell" style="left:335px;top:638px;height:20px;padding-left:3px;color:#000;width:66px;overflow:hidden;"><span class="n">-18</span></div>
<div class="t cell" style="left:402px;top:638px;height:20px;padding-left:3px;color:#000;width:66px;overflow:hidden;"><span class="j">前日比</span></div>
<div class="t cell" style="left:469px;top:638px;height:20px;padding-left:3px;color:#000;width:66px;overflow:hidden;"><span class="n">12</span></div>
<div class="t cell" style="left:268px;top:659px;height:20px;padding-left:3px;color:#000;"><span class="j">買い</span></div>
<div class="t cell" style="left:402px;top:659px;height:20px;padding-left:3px;color:#000;"><span class="j">売り</span></div>
<div class="t cell" style="left:268px;top:680px;height:20px;padding-left:3px;color:#000;width:66px;overflow:hidden;"><span class="n">388</span></div>
<div class="t cell" style="left:335px;top:680px;height:20px;padding-left:3px;color:#000;width:66px;overflow:hidden;"><span class="n">3</span></div>
<div class="t cell" style="left:402px;top:680px;height:20px;padding-left:3px;color:#000;width:66px;overflow:hidden;"><span class="n">775</span></div>
<div class="t cell" style="left:469px;top:680px;height:20px;padding-left:3px;color:#000;width:66px;overflow:hidden;"><span class="n">4</span></div>
<div class="t cell" style="left:536px;top:22px;width:66px;height:21px;justify-content:flex-end;padding-right:2px;overflow:hidden;color:#000"><span class="n">101%</span></div>
<div class="t cell" style="left:603px;top:22px;width:66px;height:21px;justify-content:flex-end;padding-right:2px;overflow:hidden;color:#000"><span class="n">28275.82</span></div>
<div class="t cell" style="left:536px;top:44px;width:66px;height:21px;justify-content:flex-end;padding-right:2px;overflow:hidden;color:#000"><span class="n">101%</span></div>
<div class="t cell" style="left:603px;top:44px;width:66px;height:21px;justify-content:flex-end;padding-right:2px;overflow:hidden;color:#000"><span class="n">28,642.19</span></div>
<div class="t cell" style="left:536px;top:66px;height:20px;padding-left:3px;color:#000;width:66px;overflow:hidden;"><span class="j">夜間</span><span class="n">/</span><span class="j">日経</span></div>
<div class="t cell" style="left:603px;top:66px;height:20px;padding-left:3px;color:#000;width:66px;overflow:hidden;"><span class="j">ダウ前日比</span></div>
<div class="t cell" style="left:670px;top:66px;height:20px;padding-left:3px;color:#000;width:66px;overflow:hidden;"><span style="display:inline-block;transform:scaleX(0.87);transform-origin:0 100%"><span class="j">円高</span></span></div>
<div class="t cell" style="left:737px;top:66px;height:20px;padding-left:3px;color:#000;width:66px;overflow:hidden;"><span class="l">TOP</span><span class="j">前日比</span></div>
<div class="t cell" style="left:536px;top:87px;width:66px;height:20px;justify-content:flex-end;padding-right:6px;overflow:hidden;color:#000"><span class="n">-143.98</span></div>
<div class="t cell" style="left:603px;top:87px;width:66px;height:20px;justify-content:flex-end;padding-right:2px;overflow:hidden;color:#000"><span class="n">-81</span></div>
<div class="t cell" style="left:670px;top:87px;width:66px;height:20px;justify-content:flex-end;padding-right:2px;overflow:hidden;color:#000"><span class="n">0</span></div>
<div class="t cell" style="left:737px;top:87px;width:66px;height:20px;justify-content:flex-end;padding-right:2px;overflow:hidden;color:#000"><span class="n">6.48</span></div>
<div class="t cell" style="left:536px;top:108px;height:20px;padding-left:3px;color:#000;width:66px;overflow:hidden;"><span class="j">日経陽陰</span></div>
<div class="t cell" style="left:603px;top:108px;height:20px;padding-left:3px;color:#000;width:66px;overflow:hidden;"><span class="j">空売比率</span></div>
<div class="t cell" style="left:670px;top:108px;height:20px;padding-left:3px;color:#000;width:66px;overflow:hidden;"><span style="display:inline-block;transform:scaleX(0.87);transform-origin:0 100%"><span class="j">マザ陽陰</span></span></div>
<div class="t cell" style="left:737px;top:108px;height:20px;padding-left:3px;color:#000;width:66px;overflow:hidden;"><span class="l">top</span><span class="j">陽陰</span></div>
<div class="t cell" style="left:536px;top:129px;height:20px;padding-left:3px;color:#000;width:66px;overflow:hidden;"><span class="j">陽</span></div>
<div class="t cell" style="left:603px;top:129px;width:66px;height:20px;justify-content:flex-end;padding-right:2px;overflow:hidden;color:#000"><span class="n">41%</span></div>
<div class="t cell" style="left:670px;top:129px;height:20px;padding-left:3px;color:#000;width:66px;overflow:hidden;"><span class="j">陽</span></div>
<div class="t cell" style="left:737px;top:129px;height:20px;padding-left:3px;color:#000;width:66px;overflow:hidden;"><span class="j">陰</span></div>
<div class="t cell" style="left:536px;top:150px;height:21px;padding-left:3px;color:#000;width:66px;overflow:hidden;"><span class="j">前日比</span></div>
<div class="t cell" style="left:603px;top:150px;height:21px;padding-left:3px;color:#000;width:66px;overflow:hidden;"><span class="j">値上下比</span></div>
<div class="t cell" style="left:670px;top:150px;height:21px;padding-left:3px;color:#000;width:66px;overflow:hidden;"><span class="j">値上</span></div>
<div class="t cell" style="left:737px;top:150px;height:21px;padding-left:3px;color:#000;width:66px;overflow:hidden;"><span class="j">値下</span></div>
<div class="t cell" style="left:536px;top:172px;width:66px;height:21px;justify-content:flex-end;padding-right:2px;overflow:hidden;color:#000"><span class="n">189.37</span></div>
<div class="t cell" style="left:603px;top:172px;width:66px;height:21px;justify-content:flex-end;padding-right:2px;overflow:hidden;color:#000"><span class="n">46%</span></div>
<div class="t cell" style="left:670px;top:172px;width:66px;height:21px;justify-content:flex-end;padding-right:2px;overflow:hidden;color:#000"><span class="n">2015</span></div>
<div class="t cell" style="left:737px;top:172px;width:66px;height:21px;justify-content:flex-end;padding-right:2px;overflow:hidden;color:#000"><span class="n">2327</span></div>
<div class="t cell" style="left:603px;top:194px;height:20px;padding-left:3px;color:#000;width:66px;overflow:hidden;"><span class="j">東一前日比</span></div>
<div class="t cell" style="left:670px;top:194px;height:20px;padding-left:3px;color:#000;width:66px;overflow:hidden;"><span class="j">値上</span></div>
<div class="t cell" style="left:737px;top:194px;height:20px;padding-left:3px;color:#000;"><span class="j">値下</span></div>
<div class="t cell" style="left:603px;top:215px;height:20px;padding-left:3px;color:#000;width:66px;overflow:hidden;"><span class="n">34%</span></div>
<div class="t cell" style="left:670px;top:215px;height:20px;padding-left:3px;color:#000;width:66px;overflow:hidden;"><span class="n">782</span></div>
<div class="t cell" style="left:737px;top:215px;height:20px;padding-left:3px;color:#000;"><span class="n">1502</span></div>
<div class="t cell" style="left:603px;top:236px;height:20px;padding-left:3px;color:#000;width:66px;overflow:hidden;"><span class="j">東二前日比</span></div>
<div class="t cell" style="left:670px;top:236px;height:20px;padding-left:3px;color:#000;width:66px;overflow:hidden;"><span class="j">値上</span></div>
<div class="t cell" style="left:737px;top:236px;height:20px;padding-left:3px;color:#000;"><span class="j">値下</span></div>
<div class="t cell" style="left:603px;top:257px;height:20px;padding-left:3px;color:#000;width:66px;overflow:hidden;"><span class="n">56%</span></div>
<div class="t cell" style="left:670px;top:257px;height:20px;padding-left:3px;color:#000;width:66px;overflow:hidden;"><span class="n">271</span></div>
<div class="t cell" style="left:737px;top:257px;height:20px;padding-left:3px;color:#000;"><span class="n">213</span></div>
<div class="t cell" style="left:536px;top:278px;height:20px;padding-left:3px;color:#000;width:66px;overflow:hidden;"><span class="l">JQ</span><span class="j">前日比</span></div>
<div class="t cell" style="left:603px;top:278px;height:20px;padding-left:3px;color:#000;width:66px;overflow:hidden;"><span class="l">jq</span><span class="j">前日比</span></div>
<div class="t cell" style="left:670px;top:278px;height:20px;padding-left:3px;color:#000;width:66px;overflow:hidden;"><span class="j">値上</span></div>
<div class="t cell" style="left:737px;top:278px;height:20px;padding-left:3px;color:#000;width:66px;overflow:hidden;"><span class="j">値下</span></div>
<div class="t cell" style="left:536px;top:299px;height:20px;padding-left:3px;color:#000;width:66px;overflow:hidden;"><span class="n">17.64</span></div>
<div class="t cell" style="left:603px;top:299px;height:20px;padding-left:3px;color:#000;width:66px;overflow:hidden;"><span class="n">59%</span></div>
<div class="t cell" style="left:670px;top:299px;height:20px;padding-left:3px;color:#000;width:66px;overflow:hidden;"><span class="n">432</span></div>
<div class="t cell" style="left:737px;top:299px;height:20px;padding-left:3px;color:#000;width:66px;overflow:hidden;"><span class="n">305</span></div>
<div class="t cell" style="left:536px;top:320px;height:20px;padding-left:3px;color:#000;width:66px;overflow:hidden;"><span class="j">マザ前日比</span></div>
<div class="t cell" style="left:603px;top:320px;height:20px;padding-left:3px;color:#000;width:66px;overflow:hidden;"><span class="j">値上下比</span></div>
<div class="t cell" style="left:670px;top:320px;height:20px;padding-left:3px;color:#000;width:66px;overflow:hidden;"><span class="j">値上</span></div>
<div class="t cell" style="left:737px;top:320px;height:20px;padding-left:3px;color:#000;width:66px;overflow:hidden;"><span class="j">値下</span></div>
<div class="t cell" style="left:536px;top:341px;height:20px;padding-left:3px;color:#000;width:66px;overflow:hidden;"><span class="n">25.13</span></div>
<div class="t cell" style="left:603px;top:341px;height:20px;padding-left:3px;color:#000;width:66px;overflow:hidden;"><span class="n">58%</span></div>
<div class="t cell" style="left:670px;top:341px;height:20px;padding-left:3px;color:#000;width:66px;overflow:hidden;"><span class="n">206</span></div>
<div class="t cell" style="left:737px;top:341px;height:20px;padding-left:3px;color:#000;width:66px;overflow:hidden;"><span class="n">148</span></div>
<div class="t cell" style="left:536px;top:362px;height:20px;padding-left:3px;color:#000;width:66px;overflow:hidden;"><span class="j">終値</span></div>
<div class="t cell" style="left:603px;top:362px;height:20px;padding-left:3px;color:#000;width:66px;overflow:hidden;"><span class="j">始値</span></div>
<div class="t cell" style="left:670px;top:362px;height:20px;padding-left:3px;color:#000;width:66px;overflow:hidden;"><span class="j">高値</span></div>
<div class="t cell" style="left:737px;top:362px;height:20px;padding-left:3px;color:#000;width:66px;overflow:hidden;"><span class="j">安値</span></div>
<div class="t cell" style="left:536px;top:383px;width:66px;height:21px;justify-content:flex-end;padding-right:2px;overflow:hidden;color:#000"><span class="n">28,553.98</span></div>
<div class="t cell" style="left:603px;top:383px;width:66px;height:21px;justify-content:flex-end;padding-right:2px;overflow:hidden;color:#000"><span class="n">28,516.99</span></div>
<div class="t cell" style="left:670px;top:383px;width:66px;height:21px;justify-content:flex-end;padding-right:2px;overflow:hidden;color:#000"><span class="n">28,576.97</span></div>
<div class="t cell" style="left:737px;top:383px;width:66px;height:21px;justify-content:flex-end;padding-right:2px;overflow:hidden;color:#000"><span class="n">28,443.74</span></div>
<div class="t cell" style="left:536px;top:405px;height:20px;padding-left:3px;color:#000;width:66px;overflow:hidden;"><span class="j">マザ終値</span></div>
<div class="t cell" style="left:603px;top:405px;height:20px;padding-left:3px;color:#000;width:66px;overflow:hidden;"><span class="j">始値</span></div>
<div class="t cell" style="left:670px;top:405px;height:20px;padding-left:3px;color:#000;width:66px;overflow:hidden;"><span class="l">TOP</span><span class="j">終値</span></div>
<div class="t cell" style="left:737px;top:405px;height:20px;padding-left:3px;color:#000;width:66px;overflow:hidden;"><span class="j">始値</span></div>
<div class="t cell" style="left:536px;top:426px;width:66px;height:20px;justify-content:flex-end;padding-right:2px;overflow:hidden;color:#000"><span class="n">1,133.48</span></div>
<div class="t cell" style="left:670px;top:426px;width:66px;height:20px;justify-content:flex-end;padding-right:2px;overflow:hidden;color:#000"><span class="n">1,919.52</span></div>
<div class="t cell" style="left:603px;top:447px;height:20px;padding-left:3px;color:#000;width:66px;overflow:hidden;"><span class="j">下降</span></div>
<div class="t cell" style="left:670px;top:447px;height:20px;padding-left:3px;color:#000;"><span class="j">ジャスダック</span></div>
<div class="t cell" style="left:536px;top:468px;height:20px;padding-left:3px;color:#000;width:66px;overflow:hidden;"><span class="j">新</span></div>
<div class="t cell" style="left:603px;top:468px;height:20px;padding-left:3px;color:#000;width:66px;overflow:hidden;"><span class="j">下降</span></div>
<div class="t cell" style="left:670px;top:468px;width:66px;height:20px;justify-content:flex-end;padding-right:2px;overflow:hidden;color:#000"><span class="n">3874.18</span></div>
<div class="t cell" style="left:737px;top:468px;height:20px;padding-left:3px;color:#000;"><span class="j">陽</span></div>
<div class="t cell" style="left:536px;top:489px;height:20px;padding-left:3px;color:#000;width:66px;overflow:hidden;"><span class="j">先物夜間</span></div>
<div class="t cell" style="left:603px;top:489px;height:20px;padding-left:3px;color:#000;width:66px;overflow:hidden;"><span class="j">始値</span></div>
<div class="t cell" style="left:670px;top:489px;height:20px;padding-left:3px;color:#000;width:66px;overflow:hidden;"><span class="j">高値</span></div>
<div class="t cell" style="left:737px;top:489px;height:20px;padding-left:3px;color:#000;width:66px;overflow:hidden;"><span class="j">安値</span></div>
<div class="t cell" style="left:536px;top:510px;width:66px;height:20px;justify-content:flex-end;padding-right:2px;overflow:hidden;color:#000"><span class="n">28410</span></div>
<div class="t cell" style="left:536px;top:531px;height:20px;padding-left:3px;color:#000;width:66px;overflow:hidden;"><span class="j">ダウ終値</span></div>
<div class="t cell" style="left:603px;top:531px;height:20px;padding-left:3px;color:#000;width:66px;overflow:hidden;"><span class="j">始値</span></div>
<div class="t cell" style="left:670px;top:531px;height:20px;padding-left:3px;color:#000;width:66px;overflow:hidden;"><span class="j">高値</span></div>
<div class="t cell" style="left:737px;top:531px;height:20px;padding-left:3px;color:#000;width:66px;overflow:hidden;"><span class="j">安値</span></div>
<div class="t cell" style="left:536px;top:552px;width:66px;height:20px;justify-content:flex-end;padding-right:2px;overflow:hidden;color:#000"><span class="n">34,312.00</span></div>
<div class="t cell" style="left:536px;top:573px;height:21px;padding-left:3px;color:#000;width:66px;overflow:hidden;"><span class="j">為替終値</span></div>
<div class="t cell" style="left:603px;top:573px;height:21px;padding-left:3px;color:#000;width:66px;overflow:hidden;"><span class="j">始値</span></div>
<div class="t cell" style="left:670px;top:573px;height:21px;padding-left:3px;color:#000;width:66px;overflow:hidden;"><span class="j">高値</span></div>
<div class="t cell" style="left:737px;top:573px;height:21px;padding-left:3px;color:#000;width:66px;overflow:hidden;"><span class="j">安値</span></div>
<div class="t cell" style="left:536px;top:595px;width:66px;height:21px;justify-content:flex-end;padding-right:2px;overflow:hidden;color:#000"><span class="n">108.78</span></div>
<div class="t cell" style="left:603px;top:595px;width:66px;height:21px;justify-content:flex-end;padding-right:2px;overflow:hidden;color:#000"><span class="n">108.79</span></div>
<div class="t cell" style="left:670px;top:595px;width:66px;height:21px;justify-content:flex-end;padding-right:2px;overflow:hidden;color:#000"><span class="n">108.9</span></div>
<div class="t cell" style="left:737px;top:595px;width:66px;height:21px;justify-content:flex-end;padding-right:2px;overflow:hidden;color:#000"><span class="n">108.69</span></div>
<div class="t cell" style="left:536px;top:638px;height:20px;padding-left:3px;color:#000;width:66px;overflow:hidden;"><span class="j">前日比</span></div>
<div class="t cell" style="left:603px;top:638px;height:20px;padding-left:3px;color:#000;width:66px;overflow:hidden;"><span class="n">23</span></div>
<div class="t cell" style="left:670px;top:638px;height:20px;padding-left:3px;color:#000;width:66px;overflow:hidden;"><span class="j">前日比</span></div>
<div class="t cell" style="left:737px;top:638px;height:20px;padding-left:3px;color:#000;width:66px;overflow:hidden;"><span class="n">-24</span></div>
<div class="t cell" style="left:536px;top:659px;height:20px;padding-left:3px;color:#000;"><span class="j">買い</span></div>
<div class="t cell" style="left:670px;top:659px;height:20px;padding-left:3px;color:#000;"><span class="j">売り</span></div>
<div class="t cell" style="left:536px;top:680px;height:20px;padding-left:3px;color:#000;width:66px;overflow:hidden;"><span class="n">385</span></div>
<div class="t cell" style="left:603px;top:680px;height:20px;padding-left:3px;color:#000;width:66px;overflow:hidden;"><span class="n">21</span></div>
<div class="t cell" style="left:670px;top:680px;height:20px;padding-left:3px;color:#000;width:66px;overflow:hidden;"><span class="n">771</span></div>
<div class="t cell" style="left:737px;top:680px;height:20px;padding-left:3px;color:#000;width:66px;overflow:hidden;"><span class="n">-8</span></div>
<div class="t cell" style="left:804px;top:22px;width:66px;height:21px;justify-content:flex-end;padding-right:2px;overflow:hidden;color:#000"><span class="n">100%</span></div>
<div class="t cell" style="left:871px;top:22px;width:66px;height:21px;justify-content:flex-end;padding-right:2px;overflow:hidden;color:#000"><span class="n">28246.4</span></div>
<div class="t cell" style="left:804px;top:44px;width:66px;height:21px;justify-content:flex-end;padding-right:2px;overflow:hidden;color:#000"><span class="n">101%</span></div>
<div class="t cell" style="left:871px;top:44px;width:66px;height:21px;justify-content:flex-end;padding-right:2px;overflow:hidden;color:#000"><span class="n">28,553.98</span></div>
<div class="t cell" style="left:804px;top:66px;height:20px;padding-left:3px;color:#000;width:66px;overflow:hidden;"><span class="j">夜間</span><span class="n">/</span><span class="j">日経</span></div>
<div class="t cell" style="left:871px;top:66px;height:20px;padding-left:3px;color:#000;width:66px;overflow:hidden;"><span class="j">ダウ前日比</span></div>
<div class="t cell" style="left:938px;top:66px;height:20px;padding-left:3px;color:#000;width:66px;overflow:hidden;"><span style="display:inline-block;transform:scaleX(0.87);transform-origin:0 100%"><span class="j">円高</span></span></div>
<div class="t cell" style="left:1005px;top:66px;height:20px;padding-left:3px;color:#000;width:66px;overflow:hidden;"><span class="l">TOP</span><span class="j">前日比</span></div>
<div class="t cell" style="left:804px;top:87px;width:66px;height:20px;justify-content:flex-end;padding-right:6px;overflow:hidden;color:#000"><span class="n">115.39</span></div>
<div class="t cell" style="left:871px;top:87px;width:66px;height:20px;justify-content:flex-end;padding-right:2px;overflow:hidden;color:#000"><span class="n">186</span></div>
<div class="t cell" style="left:938px;top:87px;width:66px;height:20px;justify-content:flex-end;padding-right:2px;overflow:hidden;color:#000"><span class="n">0</span></div>
<div class="t cell" style="left:1005px;top:87px;width:66px;height:20px;justify-content:flex-end;padding-right:2px;overflow:hidden;color:#000"><span class="n">8.35</span></div>
<div class="t cell" style="left:804px;top:108px;height:20px;padding-left:3px;color:#000;width:66px;overflow:hidden;"><span class="j">日経陽陰</span></div>
<div class="t cell" style="left:871px;top:108px;height:20px;padding-left:3px;color:#000;width:66px;overflow:hidden;"><span class="j">空売比率</span></div>
<div class="t cell" style="left:938px;top:108px;height:20px;padding-left:3px;color:#000;width:66px;overflow:hidden;"><span style="display:inline-block;transform:scaleX(0.87);transform-origin:0 100%"><span class="j">マザ陽陰</span></span></div>
<div class="t cell" style="left:1005px;top:108px;height:20px;padding-left:3px;color:#000;width:66px;overflow:hidden;"><span class="l">top</span><span class="j">陽陰</span></div>
<div class="t cell" style="left:804px;top:129px;height:20px;padding-left:3px;color:#000;width:66px;overflow:hidden;"><span class="j">陽</span></div>
<div class="t cell" style="left:871px;top:129px;width:66px;height:20px;justify-content:flex-end;padding-right:2px;overflow:hidden;color:#000"><span class="n">42%</span></div>
<div class="t cell" style="left:938px;top:129px;height:20px;padding-left:3px;color:#000;width:66px;overflow:hidden;"><span class="j">陰</span></div>
<div class="t cell" style="left:1005px;top:129px;height:20px;padding-left:3px;color:#000;width:66px;overflow:hidden;"><span class="j">陽</span></div>
<div class="t cell" style="left:804px;top:150px;height:21px;padding-left:3px;color:#000;width:66px;overflow:hidden;"><span class="j">前日比</span></div>
<div class="t cell" style="left:871px;top:150px;height:21px;padding-left:3px;color:#000;width:66px;overflow:hidden;"><span class="j">値上下比</span></div>
<div class="t cell" style="left:938px;top:150px;height:21px;padding-left:3px;color:#000;width:66px;overflow:hidden;"><span class="j">値上</span></div>
<div class="t cell" style="left:1005px;top:150px;height:21px;padding-left:3px;color:#000;width:66px;overflow:hidden;"><span class="j">値下</span></div>
<div class="t cell" style="left:804px;top:172px;width:66px;height:21px;justify-content:flex-end;padding-right:2px;overflow:hidden;color:#000"><span class="n">46.78</span></div>
<div class="t cell" style="left:871px;top:172px;width:66px;height:21px;justify-content:flex-end;padding-right:2px;overflow:hidden;color:#000"><span class="n">58%</span></div>
<div class="t cell" style="left:938px;top:172px;width:66px;height:21px;justify-content:flex-end;padding-right:2px;overflow:hidden;color:#000"><span class="n">2521</span></div>
<div class="t cell" style="left:1005px;top:172px;width:66px;height:21px;justify-content:flex-end;padding-right:2px;overflow:hidden;color:#000"><span class="n">1847</span></div>
<div class="t cell" style="left:871px;top:194px;height:20px;padding-left:3px;color:#000;width:66px;overflow:hidden;"><span class="j">東一前日比</span></div>
<div class="t cell" style="left:938px;top:194px;height:20px;padding-left:3px;color:#000;width:66px;overflow:hidden;"><span class="j">値上</span></div>
<div class="t cell" style="left:1005px;top:194px;height:20px;padding-left:3px;color:#000;"><span class="j">値下</span></div>
<div class="t cell" style="left:871px;top:215px;height:20px;padding-left:3px;color:#000;width:66px;overflow:hidden;"><span class="n">65%</span></div>
<div class="t cell" style="left:938px;top:215px;height:20px;padding-left:3px;color:#000;width:66px;overflow:hidden;"><span class="n">1478</span></div>
<div class="t cell" style="left:1005px;top:215px;height:20px;padding-left:3px;color:#000;"><span class="n">802</span></div>
<div class="t cell" style="left:871px;top:236px;height:20px;padding-left:3px;color:#000;width:66px;overflow:hidden;"><span class="j">東二前日比</span></div>
<div class="t cell" style="left:938px;top:236px;height:20px;padding-left:3px;color:#000;width:66px;overflow:hidden;"><span class="j">値上</span></div>
<div class="t cell" style="left:1005px;top:236px;height:20px;padding-left:3px;color:#000;"><span class="j">値下</span></div>
<div class="t cell" style="left:871px;top:257px;height:20px;padding-left:3px;color:#000;width:66px;overflow:hidden;"><span class="n">56%</span></div>
<div class="t cell" style="left:938px;top:257px;height:20px;padding-left:3px;color:#000;width:66px;overflow:hidden;"><span class="n">271</span></div>
<div class="t cell" style="left:1005px;top:257px;height:20px;padding-left:3px;color:#000;"><span class="n">215</span></div>
<div class="t cell" style="left:804px;top:278px;height:20px;padding-left:3px;color:#000;width:66px;overflow:hidden;"><span class="l">JQ</span><span class="j">前日比</span></div>
<div class="t cell" style="left:871px;top:278px;height:20px;padding-left:3px;color:#000;width:66px;overflow:hidden;"><span class="l">jq</span><span class="j">前日比</span></div>
<div class="t cell" style="left:938px;top:278px;height:20px;padding-left:3px;color:#000;width:66px;overflow:hidden;"><span class="j">値上</span></div>
<div class="t cell" style="left:1005px;top:278px;height:20px;padding-left:3px;color:#000;width:66px;overflow:hidden;"><span class="j">値下</span></div>
<div class="t cell" style="left:804px;top:299px;height:20px;padding-left:3px;color:#000;width:66px;overflow:hidden;"><span class="n">1.58</span></div>
<div class="t cell" style="left:871px;top:299px;height:20px;padding-left:3px;color:#000;width:66px;overflow:hidden;"><span class="n">50%</span></div>
<div class="t cell" style="left:938px;top:299px;height:20px;padding-left:3px;color:#000;width:66px;overflow:hidden;"><span class="n">378</span></div>
<div class="t cell" style="left:1005px;top:299px;height:20px;padding-left:3px;color:#000;width:66px;overflow:hidden;"><span class="n">372</span></div>
<div class="t cell" style="left:804px;top:320px;height:20px;padding-left:3px;color:#000;width:66px;overflow:hidden;"><span class="j">マザ前日比</span></div>
<div class="t cell" style="left:871px;top:320px;height:20px;padding-left:3px;color:#000;width:66px;overflow:hidden;"><span class="j">値上下比</span></div>
<div class="t cell" style="left:938px;top:320px;height:20px;padding-left:3px;color:#000;width:66px;overflow:hidden;"><span class="j">値上</span></div>
<div class="t cell" style="left:1005px;top:320px;height:20px;padding-left:3px;color:#000;width:66px;overflow:hidden;"><span class="j">値下</span></div>
<div class="t cell" style="left:804px;top:341px;height:20px;padding-left:3px;color:#000;width:66px;overflow:hidden;"><span class="n">-20.31</span></div>
<div class="t cell" style="left:871px;top:341px;height:20px;padding-left:3px;color:#000;width:66px;overflow:hidden;"><span class="n">28%</span></div>
<div class="t cell" style="left:938px;top:341px;height:20px;padding-left:3px;color:#000;width:66px;overflow:hidden;"><span class="n">103</span></div>
<div class="t cell" style="left:1005px;top:341px;height:20px;padding-left:3px;color:#000;width:66px;overflow:hidden;"><span class="n">263</span></div>
<div class="t cell" style="left:804px;top:362px;height:20px;padding-left:3px;color:#000;width:66px;overflow:hidden;"><span class="j">終値</span></div>
<div class="t cell" style="left:871px;top:362px;height:20px;padding-left:3px;color:#000;width:66px;overflow:hidden;"><span class="j">始値</span></div>
<div class="t cell" style="left:938px;top:362px;height:20px;padding-left:3px;color:#000;width:66px;overflow:hidden;"><span class="j">高値</span></div>
<div class="t cell" style="left:1005px;top:362px;height:20px;padding-left:3px;color:#000;width:66px;overflow:hidden;"><span class="j">安値</span></div>
<div class="t cell" style="left:804px;top:383px;width:66px;height:21px;justify-content:flex-end;padding-right:2px;overflow:hidden;color:#000"><span class="n">28,364.61</span></div>
<div class="t cell" style="left:871px;top:383px;width:66px;height:21px;justify-content:flex-end;padding-right:2px;overflow:hidden;color:#000"><span class="n">28,212.32</span></div>
<div class="t cell" style="left:938px;top:383px;width:66px;height:21px;justify-content:flex-end;padding-right:2px;overflow:hidden;color:#000"><span class="n">28,584.18</span></div>
<div class="t cell" style="left:1005px;top:383px;width:66px;height:21px;justify-content:flex-end;padding-right:2px;overflow:hidden;color:#000"><span class="n">28,212.32</span></div>
<div class="t cell" style="left:804px;top:405px;height:20px;padding-left:3px;color:#000;width:66px;overflow:hidden;"><span class="j">マザ終値</span></div>
<div class="t cell" style="left:871px;top:405px;height:20px;padding-left:3px;color:#000;width:66px;overflow:hidden;"><span class="j">始値</span></div>
<div class="t cell" style="left:938px;top:405px;height:20px;padding-left:3px;color:#000;width:66px;overflow:hidden;"><span class="l">TOP</span><span class="j">終値</span></div>
<div class="t cell" style="left:1005px;top:405px;height:20px;padding-left:3px;color:#000;width:66px;overflow:hidden;"><span class="j">始値</span></div>
<div class="t cell" style="left:804px;top:426px;width:66px;height:20px;justify-content:flex-end;padding-right:2px;overflow:hidden;color:#000"><span class="n">1,108.35</span></div>
<div class="t cell" style="left:938px;top:426px;width:66px;height:20px;justify-content:flex-end;padding-right:2px;overflow:hidden;color:#000"><span class="n">1,913.04</span></div>
<div class="t cell" style="left:871px;top:447px;height:20px;padding-left:3px;color:#000;width:66px;overflow:hidden;"><span class="j">下降</span></div>
<div class="t cell" style="left:938px;top:447px;height:20px;padding-left:3px;color:#000;"><span class="j">ジャスダック</span></div>
<div class="t cell" style="left:938px;top:468px;width:66px;height:20px;justify-content:flex-end;padding-right:2px;overflow:hidden;color:#000"><span class="n">3856.54</span></div>
<div class="t cell" style="left:1005px;top:468px;height:20px;padding-left:3px;color:#000;"><span class="j">陰</span></div>
<div class="t cell" style="left:804px;top:489px;height:20px;padding-left:3px;color:#000;width:66px;overflow:hidden;"><span class="j">先物夜間</span></div>
<div class="t cell" style="left:871px;top:489px;height:20px;padding-left:3px;color:#000;width:66px;overflow:hidden;"><span class="j">始値</span></div>
<div class="t cell" style="left:938px;top:489px;height:20px;padding-left:3px;color:#000;width:66px;overflow:hidden;"><span class="j">高値</span></div>
<div class="t cell" style="left:1005px;top:489px;height:20px;padding-left:3px;color:#000;width:66px;overflow:hidden;"><span class="j">安値</span></div>
<div class="t cell" style="left:804px;top:510px;width:66px;height:20px;justify-content:flex-end;padding-right:2px;overflow:hidden;color:#000"><span class="n">28480</span></div>
<div class="t cell" style="left:804px;top:531px;height:20px;padding-left:3px;color:#000;width:66px;overflow:hidden;"><span class="j">ダウ終値</span></div>
<div class="t cell" style="left:871px;top:531px;height:20px;padding-left:3px;color:#000;width:66px;overflow:hidden;"><span class="j">始値</span></div>
<div class="t cell" style="left:938px;top:531px;height:20px;padding-left:3px;color:#000;width:66px;overflow:hidden;"><span class="j">高値</span></div>
<div class="t cell" style="left:1005px;top:531px;height:20px;padding-left:3px;color:#000;width:66px;overflow:hidden;"><span class="j">安値</span></div>
<div class="t cell" style="left:804px;top:552px;width:66px;height:20px;justify-content:flex-end;padding-right:2px;overflow:hidden;color:#000"><span class="n">34,393.00</span></div>
<div class="t cell" style="left:804px;top:573px;height:21px;padding-left:3px;color:#000;width:66px;overflow:hidden;"><span class="j">為替終値</span></div>
<div class="t cell" style="left:871px;top:573px;height:21px;padding-left:3px;color:#000;width:66px;overflow:hidden;"><span class="j">始値</span></div>
<div class="t cell" style="left:938px;top:573px;height:21px;padding-left:3px;color:#000;width:66px;overflow:hidden;"><span class="j">高値</span></div>
<div class="t cell" style="left:1005px;top:573px;height:21px;padding-left:3px;color:#000;width:66px;overflow:hidden;"><span class="j">安値</span></div>
<div class="t cell" style="left:804px;top:595px;width:66px;height:21px;justify-content:flex-end;padding-right:2px;overflow:hidden;color:#000"><span class="n">108.78</span></div>
<div class="t cell" style="left:871px;top:595px;width:66px;height:21px;justify-content:flex-end;padding-right:2px;overflow:hidden;color:#000"><span class="n">108.79</span></div>
<div class="t cell" style="left:938px;top:595px;width:66px;height:21px;justify-content:flex-end;padding-right:2px;overflow:hidden;color:#000"><span class="n">108.9</span></div>
<div class="t cell" style="left:1005px;top:595px;width:66px;height:21px;justify-content:flex-end;padding-right:2px;overflow:hidden;color:#000"><span class="n">108.69</span></div>
<div class="t cell" style="left:804px;top:638px;height:20px;padding-left:3px;color:#000;width:66px;overflow:hidden;"><span class="j">前日比</span></div>
<div class="t cell" style="left:871px;top:638px;height:20px;padding-left:3px;color:#000;width:66px;overflow:hidden;"><span class="n">2</span></div>
<div class="t cell" style="left:938px;top:638px;height:20px;padding-left:3px;color:#000;width:66px;overflow:hidden;"><span class="j">前日比</span></div>
<div class="t cell" style="left:1005px;top:638px;height:20px;padding-left:3px;color:#000;width:66px;overflow:hidden;"><span class="n">7</span></div>
<div class="t cell" style="left:804px;top:659px;height:20px;padding-left:3px;color:#000;"><span class="j">買い</span></div>
<div class="t cell" style="left:938px;top:659px;height:20px;padding-left:3px;color:#000;"><span class="j">売り</span></div>
<div class="t cell" style="left:804px;top:680px;height:20px;padding-left:3px;color:#000;width:66px;overflow:hidden;"><span class="n">364</span></div>
<div class="t cell" style="left:871px;top:680px;height:20px;padding-left:3px;color:#000;width:66px;overflow:hidden;"><span class="n">-2</span></div>
<div class="t cell" style="left:938px;top:680px;height:20px;padding-left:3px;color:#000;width:66px;overflow:hidden;"><span class="n">779</span></div>
<div class="t cell" style="left:1005px;top:680px;height:20px;padding-left:3px;color:#000;width:66px;overflow:hidden;"><span class="n">16</span></div>
<div class="t cell" style="left:1072px;top:22px;width:66px;height:21px;justify-content:flex-end;padding-right:2px;overflow:hidden;color:#000"><span class="n">101%</span></div>
<div class="t cell" style="left:1139px;top:22px;width:66px;height:21px;justify-content:flex-end;padding-right:2px;overflow:hidden;color:#000"><span class="n">28138.44</span></div>
<div class="t cell" style="left:1072px;top:44px;width:66px;height:21px;justify-content:flex-end;padding-right:2px;overflow:hidden;color:#000"><span class="n">101%</span></div>
<div class="t cell" style="left:1139px;top:44px;width:66px;height:21px;justify-content:flex-end;padding-right:2px;overflow:hidden;color:#000"><span class="n">28,364.61</span></div>
<div class="t cell" style="left:1072px;top:66px;height:20px;padding-left:3px;color:#000;width:66px;overflow:hidden;"><span class="j">夜間</span><span class="n">/</span><span class="j">日経</span></div>
<div class="t cell" style="left:1139px;top:66px;height:20px;padding-left:3px;color:#000;width:66px;overflow:hidden;"><span class="j">ダウ前日比</span></div>
<div class="t cell" style="left:1206px;top:66px;height:20px;padding-left:3px;color:#000;width:66px;overflow:hidden;"><span style="display:inline-block;transform:scaleX(0.87);transform-origin:0 100%"><span class="j">円高</span></span></div>
<div class="t cell" style="left:1273px;top:66px;height:20px;padding-left:3px;color:#000;width:66px;overflow:hidden;"><span class="l">TOP</span><span class="j">前日比</span></div>
<div class="t cell" style="left:1072px;top:87px;width:66px;height:20px;justify-content:flex-end;padding-right:6px;overflow:hidden;color:#000"><span class="n">72.17</span></div>
<div class="t cell" style="left:1139px;top:87px;width:66px;height:20px;justify-content:flex-end;padding-right:2px;overflow:hidden;color:#000"><span class="n">159</span></div>
<div class="t cell" style="left:1206px;top:87px;width:66px;height:20px;justify-content:flex-end;padding-right:2px;overflow:hidden;color:#000"><span class="n">-0.3</span></div>
<div class="t cell" style="left:1273px;top:87px;width:66px;height:20px;justify-content:flex-end;padding-right:2px;overflow:hidden;color:#000"><span class="n">8.77</span></div>
<div class="t cell" style="left:1072px;top:108px;height:20px;padding-left:3px;color:#000;width:66px;overflow:hidden;"><span class="j">日経陽陰</span></div>
<div class="t cell" style="left:1139px;top:108px;height:20px;padding-left:3px;color:#000;width:66px;overflow:hidden;"><span class="j">空売比率</span></div>
<div class="t cell" style="left:1206px;top:108px;height:20px;padding-left:3px;color:#000;width:66px;overflow:hidden;"><span style="display:inline-block;transform:scaleX(0.87);transform-origin:0 100%"><span class="j">マザ陽陰</span></span></div>
<div class="t cell" style="left:1273px;top:108px;height:20px;padding-left:3px;color:#000;width:66px;overflow:hidden;"><span class="l">top</span><span class="j">陽陰</span></div>
<div class="t cell" style="left:1072px;top:129px;height:20px;padding-left:3px;color:#000;width:66px;overflow:hidden;"><span class="j">陽</span></div>
<div class="t cell" style="left:1139px;top:129px;width:66px;height:20px;justify-content:flex-end;padding-right:2px;overflow:hidden;color:#000"><span class="n">42%</span></div>
<div class="t cell" style="left:1206px;top:129px;height:20px;padding-left:3px;color:#000;width:66px;overflow:hidden;"><span class="j">陽</span></div>
<div class="t cell" style="left:1273px;top:129px;height:20px;padding-left:3px;color:#000;width:66px;overflow:hidden;"><span class="j">陽</span></div>
<div class="t cell" style="left:1072px;top:150px;height:21px;padding-left:3px;color:#000;width:66px;overflow:hidden;"><span class="j">前日比</span></div>
<div class="t cell" style="left:1139px;top:150px;height:21px;padding-left:3px;color:#000;width:66px;overflow:hidden;"><span class="j">値上下比</span></div>
<div class="t cell" style="left:1206px;top:150px;height:21px;padding-left:3px;color:#000;width:66px;overflow:hidden;"><span class="j">値上</span></div>
<div class="t cell" style="left:1273px;top:150px;height:21px;padding-left:3px;color:#000;width:66px;overflow:hidden;"><span class="j">値下</span></div>
<div class="t cell" style="left:1072px;top:172px;width:66px;height:21px;justify-content:flex-end;padding-right:2px;overflow:hidden;color:#000"><span class="n">219.58</span></div>
<div class="t cell" style="left:1139px;top:172px;width:66px;height:21px;justify-content:flex-end;padding-right:2px;overflow:hidden;color:#000"><span class="n">53%</span></div>
<div class="t cell" style="left:1206px;top:172px;width:66px;height:21px;justify-content:flex-end;padding-right:2px;overflow:hidden;color:#000"><span class="n">2329</span></div>
<div class="t cell" style="left:1273px;top:172px;width:66px;height:21px;justify-content:flex-end;padding-right:2px;overflow:hidden;color:#000"><span class="n">2032</span></div>
<div class="t cell" style="left:1139px;top:194px;height:20px;padding-left:3px;color:#000;width:66px;overflow:hidden;"><span class="j">東一前日比</span></div>
<div class="t cell" style="left:1206px;top:194px;height:20px;padding-left:3px;color:#000;width:66px;overflow:hidden;"><span class="j">値上</span></div>
<div class="t cell" style="left:1273px;top:194px;height:20px;padding-left:3px;color:#000;"><span class="j">値下</span></div>
<div class="t cell" style="left:1139px;top:215px;height:20px;padding-left:3px;color:#000;width:66px;overflow:hidden;"><span class="n">51%</span></div>
<div class="t cell" style="left:1206px;top:215px;height:20px;padding-left:3px;color:#000;width:66px;overflow:hidden;"><span class="n">1156</span></div>
<div class="t cell" style="left:1273px;top:215px;height:20px;padding-left:3px;color:#000;"><span class="n">1096</span></div>
<div class="t cell" style="left:1139px;top:236px;height:20px;padding-left:3px;color:#000;width:66px;overflow:hidden;"><span class="j">東二前日比</span></div>
<div class="t cell" style="left:1206px;top:236px;height:20px;padding-left:3px;color:#000;width:66px;overflow:hidden;"><span class="j">値上</span></div>
<div class="t cell" style="left:1273px;top:236px;height:20px;padding-left:3px;color:#000;"><span class="j">値下</span></div>
<div class="t cell" style="left:1139px;top:257px;height:20px;padding-left:3px;color:#000;width:66px;overflow:hidden;"><span class="n">49%</span></div>
<div class="t cell" style="left:1206px;top:257px;height:20px;padding-left:3px;color:#000;width:66px;overflow:hidden;"><span class="n">245</span></div>
<div class="t cell" style="left:1273px;top:257px;height:20px;padding-left:3px;color:#000;"><span class="n">251</span></div>
<div class="t cell" style="left:1072px;top:278px;height:20px;padding-left:3px;color:#000;width:66px;overflow:hidden;"><span class="l">JQ</span><span class="j">前日比</span></div>
<div class="t cell" style="left:1139px;top:278px;height:20px;padding-left:3px;color:#000;width:66px;overflow:hidden;"><span class="l">jq</span><span class="j">前日比</span></div>
<div class="t cell" style="left:1206px;top:278px;height:20px;padding-left:3px;color:#000;width:66px;overflow:hidden;"><span class="j">値上</span></div>
<div class="t cell" style="left:1273px;top:278px;height:20px;padding-left:3px;color:#000;width:66px;overflow:hidden;"><span class="j">値下</span></div>
<div class="t cell" style="left:1072px;top:299px;height:20px;padding-left:3px;color:#000;width:66px;overflow:hidden;"><span class="n">14.84</span></div>
<div class="t cell" style="left:1139px;top:299px;height:20px;padding-left:3px;color:#000;width:66px;overflow:hidden;"><span class="n">59%</span></div>
<div class="t cell" style="left:1206px;top:299px;height:20px;padding-left:3px;color:#000;width:66px;overflow:hidden;"><span class="n">442</span></div>
<div class="t cell" style="left:1273px;top:299px;height:20px;padding-left:3px;color:#000;width:66px;overflow:hidden;"><span class="n">312</span></div>
<div class="t cell" style="left:1072px;top:320px;height:20px;padding-left:3px;color:#000;width:66px;overflow:hidden;"><span class="j">マザ前日比</span></div>
<div class="t cell" style="left:1139px;top:320px;height:20px;padding-left:3px;color:#000;width:66px;overflow:hidden;"><span class="j">値上下比</span></div>
<div class="t cell" style="left:1206px;top:320px;height:20px;padding-left:3px;color:#000;width:66px;overflow:hidden;"><span class="j">値上</span></div>
<div class="t cell" style="left:1273px;top:320px;height:20px;padding-left:3px;color:#000;width:66px;overflow:hidden;"><span class="j">値下</span></div>
<div class="t cell" style="left:1072px;top:341px;height:20px;padding-left:3px;color:#000;width:66px;overflow:hidden;"><span class="n">24.91</span></div>
<div class="t cell" style="left:1139px;top:341px;height:20px;padding-left:3px;color:#000;width:66px;overflow:hidden;"><span class="n">66%</span></div>
<div class="t cell" style="left:1206px;top:341px;height:20px;padding-left:3px;color:#000;width:66px;overflow:hidden;"><span class="n">240</span></div>
<div class="t cell" style="left:1273px;top:341px;height:20px;padding-left:3px;color:#000;width:66px;overflow:hidden;"><span class="n">121</span></div>
<div class="t cell" style="left:1072px;top:362px;height:20px;padding-left:3px;color:#000;width:66px;overflow:hidden;"><span class="j">終値</span></div>
<div class="t cell" style="left:1139px;top:362px;height:20px;padding-left:3px;color:#000;width:66px;overflow:hidden;"><span class="j">始値</span></div>
<div class="t cell" style="left:1206px;top:362px;height:20px;padding-left:3px;color:#000;width:66px;overflow:hidden;"><span class="j">高値</span></div>
<div class="t cell" style="left:1273px;top:362px;height:20px;padding-left:3px;color:#000;width:66px;overflow:hidden;"><span class="j">安値</span></div>
<div class="t cell" style="left:1072px;top:383px;width:66px;height:21px;justify-content:flex-end;padding-right:2px;overflow:hidden;color:#000"><span class="n">28,317.83</span></div>
<div class="t cell" style="left:1139px;top:383px;width:66px;height:21px;justify-content:flex-end;padding-right:2px;overflow:hidden;color:#000"><span class="n">28,269.61</span></div>
<div class="t cell" style="left:1206px;top:383px;width:66px;height:21px;justify-content:flex-end;padding-right:2px;overflow:hidden;color:#000"><span class="n">28,411.56</span></div>
<div class="t cell" style="left:1273px;top:383px;width:66px;height:21px;justify-content:flex-end;padding-right:2px;overflow:hidden;color:#000"><span class="n">28,193.03</span></div>
<div class="t cell" style="left:1072px;top:405px;height:20px;padding-left:3px;color:#000;width:66px;overflow:hidden;"><span class="j">マザ終値</span></div>
<div class="t cell" style="left:1139px;top:405px;height:20px;padding-left:3px;color:#000;width:66px;overflow:hidden;"><span class="j">始値</span></div>
<div class="t cell" style="left:1206px;top:405px;height:20px;padding-left:3px;color:#000;width:66px;overflow:hidden;"><span class="l">TOP</span><span class="j">終値</span></div>
<div class="t cell" style="left:1273px;top:405px;height:20px;padding-left:3px;color:#000;width:66px;overflow:hidden;"><span class="j">始値</span></div>
<div class="t cell" style="left:1072px;top:426px;width:66px;height:20px;justify-content:flex-end;padding-right:2px;overflow:hidden;color:#000"><span class="n">1,128.66</span></div>
<div class="t cell" style="left:1206px;top:426px;width:66px;height:20px;justify-content:flex-end;padding-right:2px;overflow:hidden;color:#000"><span class="n">1,904.69</span></div>
<div class="t cell" style="left:1139px;top:447px;height:20px;padding-left:3px;color:#000;width:66px;overflow:hidden;"><span class="j">下降</span></div>
<div class="t cell" style="left:1206px;top:447px;height:20px;padding-left:3px;color:#000;"><span class="j">ジャスダック</span></div>
<div class="t cell" style="left:1206px;top:468px;width:66px;height:20px;justify-content:flex-end;padding-right:2px;overflow:hidden;color:#000"><span class="n">3854.96</span></div>
<div class="t cell" style="left:1273px;top:468px;height:20px;padding-left:3px;color:#000;"><span class="j">陽</span></div>
<div class="t cell" style="left:1072px;top:489px;height:20px;padding-left:3px;color:#000;width:66px;overflow:hidden;"><span class="j">先物夜間</span></div>
<div class="t cell" style="left:1139px;top:489px;height:20px;padding-left:3px;color:#000;width:66px;overflow:hidden;"><span class="j">始値</span></div>
<div class="t cell" style="left:1206px;top:489px;height:20px;padding-left:3px;color:#000;width:66px;overflow:hidden;"><span class="j">高値</span></div>
<div class="t cell" style="left:1273px;top:489px;height:20px;padding-left:3px;color:#000;width:66px;overflow:hidden;"><span class="j">安値</span></div>
<div class="t cell" style="left:1072px;top:510px;width:66px;height:20px;justify-content:flex-end;padding-right:2px;overflow:hidden;color:#000"><span class="n">28390</span></div>
<div class="t cell" style="left:1072px;top:531px;height:20px;padding-left:3px;color:#000;width:66px;overflow:hidden;"><span class="j">ダウ終値</span></div>
<div class="t cell" style="left:1139px;top:531px;height:20px;padding-left:3px;color:#000;width:66px;overflow:hidden;"><span class="j">始値</span></div>
<div class="t cell" style="left:1206px;top:531px;height:20px;padding-left:3px;color:#000;width:66px;overflow:hidden;"><span class="j">高値</span></div>
<div class="t cell" style="left:1273px;top:531px;height:20px;padding-left:3px;color:#000;width:66px;overflow:hidden;"><span class="j">安値</span></div>
<div class="t cell" style="left:1072px;top:552px;width:66px;height:20px;justify-content:flex-end;padding-right:2px;overflow:hidden;color:#000"><span class="n">34,207.00</span></div>
<div class="t cell" style="left:1072px;top:573px;height:21px;padding-left:3px;color:#000;width:66px;overflow:hidden;"><span class="j">為替終値</span></div>
<div class="t cell" style="left:1139px;top:573px;height:21px;padding-left:3px;color:#000;width:66px;overflow:hidden;"><span class="j">始値</span></div>
<div class="t cell" style="left:1206px;top:573px;height:21px;padding-left:3px;color:#000;width:66px;overflow:hidden;"><span class="j">高値</span></div>
<div class="t cell" style="left:1273px;top:573px;height:21px;padding-left:3px;color:#000;width:66px;overflow:hidden;"><span class="j">安値</span></div>
<div class="t cell" style="left:1072px;top:595px;width:66px;height:21px;justify-content:flex-end;padding-right:2px;overflow:hidden;color:#000"><span class="n">108.78</span></div>
<div class="t cell" style="left:1139px;top:595px;width:66px;height:21px;justify-content:flex-end;padding-right:2px;overflow:hidden;color:#000"><span class="n">108.79</span></div>
<div class="t cell" style="left:1206px;top:595px;width:66px;height:21px;justify-content:flex-end;padding-right:2px;overflow:hidden;color:#000"><span class="n">108.9</span></div>
<div class="t cell" style="left:1273px;top:595px;width:66px;height:21px;justify-content:flex-end;padding-right:2px;overflow:hidden;color:#000"><span class="n">108.69</span></div>
<div class="t cell" style="left:1072px;top:638px;height:20px;padding-left:3px;color:#000;width:66px;overflow:hidden;"><span class="j">前日比</span></div>
<div class="t cell" style="left:1139px;top:638px;height:20px;padding-left:3px;color:#000;width:66px;overflow:hidden;"><span class="n">21</span></div>
<div class="t cell" style="left:1206px;top:638px;height:20px;padding-left:3px;color:#000;width:66px;overflow:hidden;"><span class="j">前日比</span></div>
<div class="t cell" style="left:1273px;top:638px;height:20px;padding-left:3px;color:#000;width:66px;overflow:hidden;"><span class="n">-26</span></div>
<div class="t cell" style="left:1072px;top:659px;height:20px;padding-left:3px;color:#000;"><span class="j">買い</span></div>
<div class="t cell" style="left:1206px;top:659px;height:20px;padding-left:3px;color:#000;"><span class="j">売り</span></div>
<div class="t cell" style="left:1072px;top:680px;height:20px;padding-left:3px;color:#000;width:66px;overflow:hidden;"><span class="n">366</span></div>
<div class="t cell" style="left:1139px;top:680px;height:20px;padding-left:3px;color:#000;width:66px;overflow:hidden;"><span class="n">-4</span></div>
<div class="t cell" style="left:1206px;top:680px;height:20px;padding-left:3px;color:#000;width:66px;overflow:hidden;"><span class="n">763</span></div>
<div class="t cell" style="left:1273px;top:680px;height:20px;padding-left:3px;color:#000;width:66px;overflow:hidden;"><span class="n">9</span></div>
<div class="t cell" style="left:1340px;top:22px;width:66px;height:21px;justify-content:flex-end;padding-right:2px;overflow:hidden;color:#000"><span class="n">100%</span></div>
<div class="t cell" style="left:1407px;top:22px;width:66px;height:21px;justify-content:flex-end;padding-right:2px;overflow:hidden;color:#000"><span class="n">28091.77</span></div>
<div class="t cell" style="left:1340px;top:44px;width:66px;height:21px;justify-content:flex-end;padding-right:2px;overflow:hidden;color:#000"><span class="n">101%</span></div>
<div class="t cell" style="left:1407px;top:44px;width:66px;height:21px;justify-content:flex-end;padding-right:2px;overflow:hidden;color:#000"><span class="n">28,317.83</span></div>
<div class="t cell" style="left:1340px;top:66px;height:20px;padding-left:3px;color:#000;width:66px;overflow:hidden;"><span class="j">夜間</span><span class="n">/</span><span class="j">日経</span></div>
<div class="t cell" style="left:1407px;top:66px;height:20px;padding-left:3px;color:#000;width:66px;overflow:hidden;"><span class="j">ダウ前日比</span></div>
<div class="t cell" style="left:1474px;top:66px;height:20px;padding-left:3px;color:#000;width:66px;overflow:hidden;"><span style="display:inline-block;transform:scaleX(0.87);transform-origin:0 100%"><span class="j">円高</span></span></div>
<div class="t cell" style="left:1541px;top:66px;height:20px;padding-left:3px;color:#000;width:66px;overflow:hidden;"><span class="l">TOP</span><span class="j">前日比</span></div>
<div class="t cell" style="left:1340px;top:87px;width:66px;height:20px;justify-content:flex-end;padding-right:6px;overflow:hidden;color:#000"><span class="n">120.00</span></div>
<div class="t cell" style="left:1407px;top:87px;width:66px;height:20px;justify-content:flex-end;padding-right:2px;overflow:hidden;color:#000"><span class="n">188</span></div>
<div class="t cell" style="left:1474px;top:87px;width:66px;height:20px;justify-content:flex-end;padding-right:2px;overflow:hidden;color:#000"><span class="n">-0.02</span></div>
<div class="t cell" style="left:1541px;top:87px;width:66px;height:20px;justify-content:flex-end;padding-right:2px;overflow:hidden;color:#000"><span class="n">0.68</span></div>
<div class="t cell" style="left:1340px;top:108px;height:20px;padding-left:3px;color:#000;width:66px;overflow:hidden;"><span class="j">日経陽陰</span></div>
<div class="t cell" style="left:1407px;top:108px;height:20px;padding-left:3px;color:#000;width:66px;overflow:hidden;"><span class="j">空売比率</span></div>
<div class="t cell" style="left:1474px;top:108px;height:20px;padding-left:3px;color:#000;width:66px;overflow:hidden;"><span style="display:inline-block;transform:scaleX(0.87);transform-origin:0 100%"><span class="j">マザ陽陰</span></span></div>
<div class="t cell" style="left:1541px;top:108px;height:20px;padding-left:3px;color:#000;width:66px;overflow:hidden;"><span class="l">top</span><span class="j">陽陰</span></div>
<div class="t cell" style="left:1340px;top:129px;height:20px;padding-left:3px;color:#000;width:66px;overflow:hidden;"><span class="j">陽</span></div>
<div class="t cell" style="left:1407px;top:129px;width:66px;height:20px;justify-content:flex-end;padding-right:2px;overflow:hidden;color:#000"><span class="n">44%</span></div>
<div class="t cell" style="left:1474px;top:129px;height:20px;padding-left:3px;color:#000;width:66px;overflow:hidden;"><span class="j">陽</span></div>
<div class="t cell" style="left:1541px;top:129px;height:20px;padding-left:3px;color:#000;width:66px;overflow:hidden;"><span class="j">陽</span></div>
<div class="t cell" style="left:1340px;top:150px;height:21px;padding-left:3px;color:#000;width:66px;overflow:hidden;"><span class="j">前日比</span></div>
<div class="t cell" style="left:1407px;top:150px;height:21px;padding-left:3px;color:#000;width:66px;overflow:hidden;"><span class="j">値上下比</span></div>
<div class="t cell" style="left:1474px;top:150px;height:21px;padding-left:3px;color:#000;width:66px;overflow:hidden;"><span class="j">値上</span></div>
<div class="t cell" style="left:1541px;top:150px;height:21px;padding-left:3px;color:#000;width:66px;overflow:hidden;"><span class="j">値下</span></div>
<div class="t cell" style="left:1340px;top:172px;width:66px;height:21px;justify-content:flex-end;padding-right:2px;overflow:hidden;color:#000"><span class="n">53.8</span></div>
<div class="t cell" style="left:1407px;top:172px;width:66px;height:21px;justify-content:flex-end;padding-right:2px;overflow:hidden;color:#000"><span class="n">64%</span></div>
<div class="t cell" style="left:1474px;top:172px;width:66px;height:21px;justify-content:flex-end;padding-right:2px;overflow:hidden;color:#000"><span class="n">2788</span></div>
<div class="t cell" style="left:1541px;top:172px;width:66px;height:21px;justify-content:flex-end;padding-right:2px;overflow:hidden;color:#000"><span class="n">1564</span></div>
<div class="t cell" style="left:1407px;top:194px;height:20px;padding-left:3px;color:#000;width:66px;overflow:hidden;"><span class="j">東一前日比</span></div>
<div class="t cell" style="left:1474px;top:194px;height:20px;padding-left:3px;color:#000;width:66px;overflow:hidden;"><span class="j">値上</span></div>
<div class="t cell" style="left:1541px;top:194px;height:20px;padding-left:3px;color:#000;"><span class="j">値下</span></div>
<div class="t cell" style="left:1407px;top:215px;height:20px;padding-left:3px;color:#000;width:66px;overflow:hidden;"><span class="n">65%</span></div>
<div class="t cell" style="left:1474px;top:215px;height:20px;padding-left:3px;color:#000;width:66px;overflow:hidden;"><span class="n">1465</span></div>
<div class="t cell" style="left:1541px;top:215px;height:20px;padding-left:3px;color:#000;"><span class="n">791</span></div>
<div class="t cell" style="left:1407px;top:236px;height:20px;padding-left:3px;color:#000;width:66px;overflow:hidden;"><span class="j">東二前日比</span></div>
<div class="t cell" style="left:1474px;top:236px;height:20px;padding-left:3px;color:#000;width:66px;overflow:hidden;"><span class="j">値上</span></div>
<div class="t cell" style="left:1541px;top:236px;height:20px;padding-left:3px;color:#000;"><span class="j">値下</span></div>
<div class="t cell" style="left:1407px;top:257px;height:20px;padding-left:3px;color:#000;width:66px;overflow:hidden;"><span class="n">62%</span></div>
<div class="t cell" style="left:1474px;top:257px;height:20px;padding-left:3px;color:#000;width:66px;overflow:hidden;"><span class="n">309</span></div>
<div class="t cell" style="left:1541px;top:257px;height:20px;padding-left:3px;color:#000;"><span class="n">188</span></div>
<div class="t cell" style="left:1340px;top:278px;height:20px;padding-left:3px;color:#000;width:66px;overflow:hidden;"><span class="l">JQ</span><span class="j">前日比</span></div>
<div class="t cell" style="left:1407px;top:278px;height:20px;padding-left:3px;color:#000;width:66px;overflow:hidden;"><span class="l">jq</span><span class="j">前日比</span></div>
<div class="t cell" style="left:1474px;top:278px;height:20px;padding-left:3px;color:#000;width:66px;overflow:hidden;"><span class="j">値上</span></div>
<div class="t cell" style="left:1541px;top:278px;height:20px;padding-left:3px;color:#000;width:66px;overflow:hidden;"><span class="j">値下</span></div>
<div class="t cell" style="left:1340px;top:299px;height:20px;padding-left:3px;color:#000;width:66px;overflow:hidden;"><span class="n">26.86</span></div>
<div class="t cell" style="left:1407px;top:299px;height:20px;padding-left:3px;color:#000;width:66px;overflow:hidden;"><span class="n">65%</span></div>
<div class="t cell" style="left:1474px;top:299px;height:20px;padding-left:3px;color:#000;width:66px;overflow:hidden;"><span class="n">483</span></div>
<div class="t cell" style="left:1541px;top:299px;height:20px;padding-left:3px;color:#000;width:66px;overflow:hidden;"><span class="n">263</span></div>
<div class="t cell" style="left:1340px;top:320px;height:20px;padding-left:3px;color:#000;width:66px;overflow:hidden;"><span class="j">マザ前日比</span></div>
<div class="t cell" style="left:1407px;top:320px;height:20px;padding-left:3px;color:#000;width:66px;overflow:hidden;"><span class="j">値上下比</span></div>
<div class="t cell" style="left:1474px;top:320px;height:20px;padding-left:3px;color:#000;width:66px;overflow:hidden;"><span class="j">値上</span></div>
<div class="t cell" style="left:1541px;top:320px;height:20px;padding-left:3px;color:#000;width:66px;overflow:hidden;"><span class="j">値下</span></div>
<div class="t cell" style="left:1340px;top:341px;height:20px;padding-left:3px;color:#000;width:66px;overflow:hidden;"><span class="n">11.68</span></div>
<div class="t cell" style="left:1407px;top:341px;height:20px;padding-left:3px;color:#000;width:66px;overflow:hidden;"><span class="n">72%</span></div>
<div class="t cell" style="left:1474px;top:341px;height:20px;padding-left:3px;color:#000;width:66px;overflow:hidden;"><span class="n">266</span></div>
<div class="t cell" style="left:1541px;top:341px;height:20px;padding-left:3px;color:#000;width:66px;overflow:hidden;"><span class="n">102</span></div>
<div class="t cell" style="left:1340px;top:362px;height:20px;padding-left:3px;color:#000;width:66px;overflow:hidden;"><span class="j">終値</span></div>
<div class="t cell" style="left:1407px;top:362px;height:20px;padding-left:3px;color:#000;width:66px;overflow:hidden;"><span class="j">始値</span></div>
<div class="t cell" style="left:1474px;top:362px;height:20px;padding-left:3px;color:#000;width:66px;overflow:hidden;"><span class="j">高値</span></div>
<div class="t cell" style="left:1541px;top:362px;height:20px;padding-left:3px;color:#000;width:66px;overflow:hidden;"><span class="j">安値</span></div>
<div class="t cell" style="left:1340px;top:383px;width:66px;height:21px;justify-content:flex-end;padding-right:2px;overflow:hidden;color:#000"><span class="n">28,098.25</span></div>
<div class="t cell" style="left:1407px;top:383px;width:66px;height:21px;justify-content:flex-end;padding-right:2px;overflow:hidden;color:#000"><span class="n">27,875.50</span></div>
<div class="t cell" style="left:1474px;top:383px;width:66px;height:21px;justify-content:flex-end;padding-right:2px;overflow:hidden;color:#000"><span class="n">28,176.87</span></div>
<div class="t cell" style="left:1541px;top:383px;width:66px;height:21px;justify-content:flex-end;padding-right:2px;overflow:hidden;color:#000"><span class="n">27,821.96</span></div>
<div class="t cell" style="left:1340px;top:405px;height:20px;padding-left:3px;color:#000;width:66px;overflow:hidden;"><span class="j">マザ終値</span></div>
<div class="t cell" style="left:1407px;top:405px;height:20px;padding-left:3px;color:#000;width:66px;overflow:hidden;"><span class="j">始値</span></div>
<div class="t cell" style="left:1474px;top:405px;height:20px;padding-left:3px;color:#000;width:66px;overflow:hidden;"><span class="l">TOP</span><span class="j">終値</span></div>
<div class="t cell" style="left:1541px;top:405px;height:20px;padding-left:3px;color:#000;width:66px;overflow:hidden;"><span class="j">始値</span></div>
<div class="t cell" style="left:1340px;top:426px;width:66px;height:20px;justify-content:flex-end;padding-right:2px;overflow:hidden;color:#000"><span class="n">1,103.75</span></div>
<div class="t cell" style="left:1474px;top:426px;width:66px;height:20px;justify-content:flex-end;padding-right:2px;overflow:hidden;color:#000"><span class="n">1,895.92</span></div>
<div class="t cell" style="left:1407px;top:447px;height:20px;padding-left:3px;color:#000;width:66px;overflow:hidden;"><span class="j">下降</span></div>
<div class="t cell" style="left:1474px;top:447px;height:20px;padding-left:3px;color:#000;"><span class="j">ジャスダック</span></div>
<div class="t cell" style="left:1474px;top:468px;width:66px;height:20px;justify-content:flex-end;padding-right:2px;overflow:hidden;color:#000"><span class="n">3840.12</span></div>
<div class="t cell" style="left:1541px;top:468px;height:20px;padding-left:3px;color:#000;"><span class="j">陽</span></div>
<div class="t cell" style="left:1340px;top:489px;height:20px;padding-left:3px;color:#000;width:66px;overflow:hidden;"><span class="j">先物夜間</span></div>
<div class="t cell" style="left:1407px;top:489px;height:20px;padding-left:3px;color:#000;width:66px;overflow:hidden;"><span class="j">始値</span></div>
<div class="t cell" style="left:1474px;top:489px;height:20px;padding-left:3px;color:#000;width:66px;overflow:hidden;"><span class="j">高値</span></div>
<div class="t cell" style="left:1541px;top:489px;height:20px;padding-left:3px;color:#000;width:66px;overflow:hidden;"><span class="j">安値</span></div>
<div class="t cell" style="left:1340px;top:510px;width:66px;height:20px;justify-content:flex-end;padding-right:2px;overflow:hidden;color:#000"><span class="n">28210</span></div>
<div class="t cell" style="left:1340px;top:531px;height:20px;padding-left:3px;color:#000;width:66px;overflow:hidden;"><span class="j">ダウ終値</span></div>
<div class="t cell" style="left:1407px;top:531px;height:20px;padding-left:3px;color:#000;width:66px;overflow:hidden;"><span class="j">始値</span></div>
<div class="t cell" style="left:1474px;top:531px;height:20px;padding-left:3px;color:#000;width:66px;overflow:hidden;"><span class="j">高値</span></div>
<div class="t cell" style="left:1541px;top:531px;height:20px;padding-left:3px;color:#000;width:66px;overflow:hidden;"><span class="j">安値</span></div>
<div class="t cell" style="left:1340px;top:552px;width:66px;height:20px;justify-content:flex-end;padding-right:2px;overflow:hidden;color:#000"><span class="n">34,048.00</span></div>
<div class="t cell" style="left:1340px;top:573px;height:21px;padding-left:3px;color:#000;width:66px;overflow:hidden;"><span class="j">為替終値</span></div>
<div class="t cell" style="left:1407px;top:573px;height:21px;padding-left:3px;color:#000;width:66px;overflow:hidden;"><span class="j">始値</span></div>
<div class="t cell" style="left:1474px;top:573px;height:21px;padding-left:3px;color:#000;width:66px;overflow:hidden;"><span class="j">高値</span></div>
<div class="t cell" style="left:1541px;top:573px;height:21px;padding-left:3px;color:#000;width:66px;overflow:hidden;"><span class="j">安値</span></div>
<div class="t cell" style="left:1340px;top:595px;width:66px;height:21px;justify-content:flex-end;padding-right:2px;overflow:hidden;color:#000"><span class="n">109.08</span></div>
<div class="t cell" style="left:1407px;top:595px;width:66px;height:21px;justify-content:flex-end;padding-right:2px;overflow:hidden;color:#000"><span class="n">109.22</span></div>
<div class="t cell" style="left:1474px;top:595px;width:66px;height:21px;justify-content:flex-end;padding-right:2px;overflow:hidden;color:#000"><span class="n">109.31</span></div>
<div class="t cell" style="left:1541px;top:595px;width:66px;height:21px;justify-content:flex-end;padding-right:2px;overflow:hidden;color:#000"><span class="n">109.05</span></div>
<div class="t cell" style="left:1340px;top:638px;height:20px;padding-left:3px;color:#000;width:66px;overflow:hidden;"><span class="j">前日比</span></div>
<div class="t cell" style="left:1407px;top:638px;height:20px;padding-left:3px;color:#000;width:66px;overflow:hidden;"><span class="n">-28</span></div>
<div class="t cell" style="left:1474px;top:638px;height:20px;padding-left:3px;color:#000;width:66px;overflow:hidden;"><span class="j">前日比</span></div>
<div class="t cell" style="left:1541px;top:638px;height:20px;padding-left:3px;color:#000;width:66px;overflow:hidden;"><span class="n">57</span></div>
<div class="t cell" style="left:1340px;top:659px;height:20px;padding-left:3px;color:#000;"><span class="j">買い</span></div>
<div class="t cell" style="left:1474px;top:659px;height:20px;padding-left:3px;color:#000;"><span class="j">売り</span></div>
<div class="t cell" style="left:1340px;top:680px;height:20px;padding-left:3px;color:#000;width:66px;overflow:hidden;"><span class="n">370</span></div>
<div class="t cell" style="left:1407px;top:680px;height:20px;padding-left:3px;color:#000;width:66px;overflow:hidden;"><span class="n">-25</span></div>
<div class="t cell" style="left:1474px;top:680px;height:20px;padding-left:3px;color:#000;width:66px;overflow:hidden;"><span class="n">754</span></div>
<div class="t cell" style="left:1541px;top:680px;height:20px;padding-left:3px;color:#000;width:66px;overflow:hidden;"><span class="n">35</span></div>
<div class="t cell" style="left:1608px;top:22px;width:66px;height:21px;justify-content:flex-end;padding-right:2px;overflow:hidden;color:#000"><span class="n">100%</span></div>
<div class="t cell" style="left:1675px;top:22px;width:66px;height:21px;justify-content:flex-end;padding-right:2px;overflow:hidden;color:#000"><span class="n">27961.72</span></div>
<div class="t cell" style="left:1608px;top:44px;width:66px;height:21px;justify-content:flex-end;padding-right:2px;overflow:hidden;color:#000"><span class="n">100%</span></div>
<div class="t cell" style="left:1675px;top:44px;width:66px;height:21px;justify-content:flex-end;padding-right:2px;overflow:hidden;color:#000"><span class="n">28,098.25</span></div>
<div class="t cell" style="left:1608px;top:66px;height:20px;padding-left:3px;color:#000;width:66px;overflow:hidden;"><span class="j">夜間</span><span class="n">/</span><span class="j">日経</span></div>
<div class="t cell" style="left:1675px;top:66px;height:20px;padding-left:3px;color:#000;width:66px;overflow:hidden;"><span class="j">ダウ前日比</span></div>
<div class="t cell" style="left:1742px;top:66px;height:20px;padding-left:3px;color:#000;width:66px;overflow:hidden;"><span style="display:inline-block;transform:scaleX(0.87);transform-origin:0 100%"><span class="j">円高</span></span></div>
<div class="t cell" style="left:1809px;top:66px;height:20px;padding-left:3px;color:#000;"><span class="l">TOP</span><span class="j">前日比</span></div>
<div class="t cell" style="left:1608px;top:87px;width:66px;height:20px;justify-content:flex-end;padding-right:6px;overflow:hidden;color:#000"><span class="n">-50.00</span></div>
<div class="t cell" style="left:1675px;top:87px;width:66px;height:20px;justify-content:flex-end;padding-right:2px;overflow:hidden;color:#000"><span class="n">-116</span></div>
<div class="t cell" style="left:1742px;top:87px;width:66px;height:20px;justify-content:flex-end;padding-right:2px;overflow:hidden;color:#000"><span class="n">0</span></div>
<div class="t cell" style="left:1809px;top:87px;width:66px;height:20px;justify-content:flex-end;padding-right:2px;overflow:hidden;color:#000"><span class="n">-12.5</span></div>
<div class="t cell" style="left:1608px;top:108px;height:20px;padding-left:3px;color:#000;width:66px;overflow:hidden;"><span class="j">日経陽陰</span></div>
<div class="t cell" style="left:1675px;top:108px;height:20px;padding-left:3px;color:#000;width:66px;overflow:hidden;"><span class="j">空売比率</span></div>
<div class="t cell" style="left:1742px;top:108px;height:20px;padding-left:3px;color:#000;width:66px;overflow:hidden;"><span style="display:inline-block;transform:scaleX(0.87);transform-origin:0 100%"><span class="j">マザ陽陰</span></span></div>
<div class="t cell" style="left:1809px;top:108px;height:20px;padding-left:3px;color:#000;"><span class="l">top</span><span class="j">陽陰</span></div>
<div class="t cell" style="left:1608px;top:129px;height:20px;padding-left:3px;color:#000;width:66px;overflow:hidden;"><span class="j">陽</span></div>
<div class="t cell" style="left:1675px;top:129px;width:66px;height:20px;justify-content:flex-end;padding-right:2px;overflow:hidden;color:#000"><span class="n">47%</span></div>
<div class="t cell" style="left:1742px;top:129px;height:20px;padding-left:3px;color:#000;width:66px;overflow:hidden;"><span class="j">陽</span></div>
<div class="t cell" style="left:1809px;top:129px;height:20px;padding-left:3px;color:#000;"><span class="j">陽</span></div>
<div class="t cell" style="left:1608px;top:150px;height:21px;padding-left:3px;color:#000;width:66px;overflow:hidden;"><span class="j">前日比</span></div>
<div class="t cell" style="left:1675px;top:150px;height:21px;padding-left:3px;color:#000;width:66px;overflow:hidden;"><span class="j">値上下比</span></div>
<div class="t cell" style="left:1742px;top:150px;height:21px;padding-left:3px;color:#000;width:66px;overflow:hidden;"><span class="j">値上</span></div>
<div class="t cell" style="left:1809px;top:150px;height:21px;padding-left:3px;color:#000;"><span class="j">値下</span></div>
<div class="t cell" style="left:1608px;top:172px;width:66px;height:21px;justify-content:flex-end;padding-right:2px;overflow:hidden;color:#000"><span class="n">-362.39</span></div>
<div class="t cell" style="left:1675px;top:172px;width:66px;height:21px;justify-content:flex-end;padding-right:2px;overflow:hidden;color:#000"><span class="n">44%</span></div>
<div class="t cell" style="left:1742px;top:172px;width:66px;height:21px;justify-content:flex-end;padding-right:2px;overflow:hidden;color:#000"><span class="n">1924</span></div>
<div class="t cell" style="left:1809px;top:172px;width:66px;height:21px;justify-content:flex-end;padding-right:2px;overflow:hidden;color:#000"><span class="n">2447</span></div>
<div class="t cell" style="left:1675px;top:194px;height:20px;padding-left:3px;color:#000;width:66px;overflow:hidden;"><span class="j">東一前日比</span></div>
<div class="t cell" style="left:1742px;top:194px;height:20px;padding-left:3px;color:#000;width:66px;overflow:hidden;"><span class="j">値上</span></div>
<div class="t cell" style="left:1809px;top:194px;height:20px;padding-left:3px;color:#000;"><span class="j">値下</span></div>
<div class="t cell" style="left:1675px;top:215px;height:20px;padding-left:3px;color:#000;width:66px;overflow:hidden;"><span class="n">32%</span></div>
<div class="t cell" style="left:1742px;top:215px;height:20px;padding-left:3px;color:#000;width:66px;overflow:hidden;"><span class="n">742</span></div>
<div class="t cell" style="left:1809px;top:215px;height:20px;padding-left:3px;color:#000;"><span class="n">1542</span></div>
<div class="t cell" style="left:1675px;top:236px;height:20px;padding-left:3px;color:#000;width:66px;overflow:hidden;"><span class="j">東二前日比</span></div>
<div class="t cell" style="left:1742px;top:236px;height:20px;padding-left:3px;color:#000;width:66px;overflow:hidden;"><span class="j">値上</span></div>
<div class="t cell" style="left:1809px;top:236px;height:20px;padding-left:3px;color:#000;"><span class="j">値下</span></div>
<div class="t cell" style="left:1675px;top:257px;height:20px;padding-left:3px;color:#000;width:66px;overflow:hidden;"><span class="n">53%</span></div>
<div class="t cell" style="left:1742px;top:257px;height:20px;padding-left:3px;color:#000;width:66px;overflow:hidden;"><span class="n">260</span></div>
<div class="t cell" style="left:1809px;top:257px;height:20px;padding-left:3px;color:#000;"><span class="n">233</span></div>
<div class="t cell" style="left:1608px;top:278px;height:20px;padding-left:3px;color:#000;width:66px;overflow:hidden;"><span class="l">JQ</span><span class="j">前日比</span></div>
<div class="t cell" style="left:1675px;top:278px;height:20px;padding-left:3px;color:#000;width:66px;overflow:hidden;"><span class="l">jq</span><span class="j">前日比</span></div>
<div class="t cell" style="left:1742px;top:278px;height:20px;padding-left:3px;color:#000;width:66px;overflow:hidden;"><span class="j">値上</span></div>
<div class="t cell" style="left:1809px;top:278px;height:20px;padding-left:3px;color:#000;"><span class="j">値下</span></div>
<div class="t cell" style="left:1608px;top:299px;height:20px;padding-left:3px;color:#000;width:66px;overflow:hidden;"><span class="n">11.82</span></div>
<div class="t cell" style="left:1675px;top:299px;height:20px;padding-left:3px;color:#000;width:66px;overflow:hidden;"><span class="n">59%</span></div>
<div class="t cell" style="left:1742px;top:299px;height:20px;padding-left:3px;color:#000;width:66px;overflow:hidden;"><span class="n">437</span></div>
<div class="t cell" style="left:1809px;top:299px;height:20px;padding-left:3px;color:#000;"><span class="n">299</span></div>
<div class="t cell" style="left:1608px;top:320px;height:20px;padding-left:3px;color:#000;width:66px;overflow:hidden;"><span class="j">マザ前日比</span></div>
<div class="t cell" style="left:1675px;top:320px;height:20px;padding-left:3px;color:#000;width:66px;overflow:hidden;"><span class="j">値上下比</span></div>
<div class="t cell" style="left:1742px;top:320px;height:20px;padding-left:3px;color:#000;width:66px;overflow:hidden;"><span class="j">値上</span></div>
<div class="t cell" style="left:1809px;top:320px;height:20px;padding-left:3px;color:#000;"><span class="j">値下</span></div>
<div class="t cell" style="left:1608px;top:341px;height:20px;padding-left:3px;color:#000;width:66px;overflow:hidden;"><span class="n">22.57</span></div>
<div class="t cell" style="left:1675px;top:341px;height:20px;padding-left:3px;color:#000;width:66px;overflow:hidden;"><span class="n">70%</span></div>
<div class="t cell" style="left:1742px;top:341px;height:20px;padding-left:3px;color:#000;width:66px;overflow:hidden;"><span class="n">258</span></div>
<div class="t cell" style="left:1809px;top:341px;height:20px;padding-left:3px;color:#000;"><span class="n">109</span></div>
<div class="t cell" style="left:1608px;top:362px;height:20px;padding-left:3px;color:#000;width:66px;overflow:hidden;"><span class="j">終値</span></div>
<div class="t cell" style="left:1675px;top:362px;height:20px;padding-left:3px;color:#000;width:66px;overflow:hidden;"><span class="j">始値</span></div>
<div class="t cell" style="left:1742px;top:362px;height:20px;padding-left:3px;color:#000;width:66px;overflow:hidden;"><span class="j">高値</span></div>
<div class="t cell" style="left:1809px;top:362px;height:20px;padding-left:3px;color:#000;"><span class="j">安値</span></div>
<div class="t cell" style="left:1608px;top:383px;width:66px;height:21px;justify-content:flex-end;padding-right:2px;overflow:hidden;color:#000"><span class="n">28,044.45</span></div>
<div class="t cell" style="left:1675px;top:383px;width:66px;height:21px;justify-content:flex-end;padding-right:2px;overflow:hidden;color:#000"><span class="n">28,031.22</span></div>
<div class="t cell" style="left:1742px;top:383px;width:66px;height:21px;justify-content:flex-end;padding-right:2px;overflow:hidden;color:#000"><span class="n">28,216.65</span></div>
<div class="t cell" style="left:1809px;top:383px;width:66px;height:21px;justify-content:flex-end;padding-right:2px;overflow:hidden;color:#000"><span class="n">27,842.98</span></div>
<div class="t cell" style="left:1608px;top:405px;height:20px;padding-left:3px;color:#000;width:66px;overflow:hidden;"><span class="j">マザ終値</span></div>
<div class="t cell" style="left:1675px;top:405px;height:20px;padding-left:3px;color:#000;width:66px;overflow:hidden;"><span class="j">始値</span></div>
<div class="t cell" style="left:1742px;top:405px;height:20px;padding-left:3px;color:#000;width:66px;overflow:hidden;"><span class="l">TOP</span><span class="j">終値</span></div>
<div class="t cell" style="left:1809px;top:405px;height:20px;padding-left:3px;color:#000;"><span class="j">始値</span></div>
<div class="t cell" style="left:1608px;top:426px;width:66px;height:20px;justify-content:flex-end;padding-right:2px;overflow:hidden;color:#000"><span class="n">1,092.07</span></div>
<div class="t cell" style="left:1742px;top:426px;width:66px;height:20px;justify-content:flex-end;padding-right:2px;overflow:hidden;color:#000"><span class="n">1,895.24</span></div>
<div class="t cell" style="left:1675px;top:447px;height:20px;padding-left:3px;color:#000;width:66px;overflow:hidden;"><span class="j">下降</span></div>
<div class="t cell" style="left:1742px;top:447px;height:20px;padding-left:3px;color:#000;"><span class="j">ジャスダック</span></div>
<div class="t cell" style="left:1742px;top:468px;width:66px;height:20px;justify-content:flex-end;padding-right:2px;overflow:hidden;color:#000"><span class="n">3813.26</span></div>
<div class="t cell" style="left:1809px;top:468px;height:20px;padding-left:3px;color:#000;"><span class="j">陽</span></div>
<div class="t cell" style="left:1608px;top:489px;height:20px;padding-left:3px;color:#000;width:66px;overflow:hidden;"><span class="j">先物夜間</span></div>
<div class="t cell" style="left:1675px;top:489px;height:20px;padding-left:3px;color:#000;width:66px;overflow:hidden;"><span class="j">始値</span></div>
<div class="t cell" style="left:1742px;top:489px;height:20px;padding-left:3px;color:#000;width:66px;overflow:hidden;"><span class="j">高値</span></div>
<div class="t cell" style="left:1809px;top:489px;height:20px;padding-left:3px;color:#000;"><span class="j">安値</span></div>
<div class="t cell" style="left:1608px;top:510px;width:66px;height:20px;justify-content:flex-end;padding-right:2px;overflow:hidden;color:#000"><span class="n">27950</span></div>
<div class="t cell" style="left:1608px;top:531px;height:20px;padding-left:3px;color:#000;width:66px;overflow:hidden;"><span class="j">ダウ終値</span></div>
<div class="t cell" style="left:1675px;top:531px;height:20px;padding-left:3px;color:#000;width:66px;overflow:hidden;"><span class="j">始値</span></div>
<div class="t cell" style="left:1742px;top:531px;height:20px;padding-left:3px;color:#000;width:66px;overflow:hidden;"><span class="j">高値</span></div>
<div class="t cell" style="left:1809px;top:531px;height:20px;padding-left:3px;color:#000;"><span class="j">安値</span></div>
<div class="t cell" style="left:1608px;top:552px;width:66px;height:20px;justify-content:flex-end;padding-right:2px;overflow:hidden;color:#000"><span class="n">33,896.00</span></div>
<div class="t cell" style="left:1608px;top:573px;height:21px;padding-left:3px;color:#000;width:66px;overflow:hidden;"><span class="j">為替終値</span></div>
<div class="t cell" style="left:1675px;top:573px;height:21px;padding-left:3px;color:#000;width:66px;overflow:hidden;"><span class="j">始値</span></div>
<div class="t cell" style="left:1742px;top:573px;height:21px;padding-left:3px;color:#000;width:66px;overflow:hidden;"><span class="j">高値</span></div>
<div class="t cell" style="left:1809px;top:573px;height:21px;padding-left:3px;color:#000;"><span class="j">安値</span></div>
<div class="t cell" style="left:1608px;top:595px;width:66px;height:21px;justify-content:flex-end;padding-right:2px;overflow:hidden;color:#000"><span class="n">109.1</span></div>
<div class="t cell" style="left:1675px;top:595px;width:66px;height:21px;justify-content:flex-end;padding-right:2px;overflow:hidden;color:#000"><span class="n">109.24</span></div>
<div class="t cell" style="left:1742px;top:595px;width:66px;height:21px;justify-content:flex-end;padding-right:2px;overflow:hidden;color:#000"><span class="n">109.28</span></div>
<div class="t cell" style="left:1809px;top:595px;width:66px;height:21px;justify-content:flex-end;padding-right:2px;overflow:hidden;color:#000"><span class="n">109.06</span></div>
<div class="t cell" style="left:1608px;top:638px;height:20px;padding-left:3px;color:#000;width:66px;overflow:hidden;"><span class="j">前日比</span></div>
<div class="t cell" style="left:1675px;top:638px;height:20px;padding-left:3px;color:#000;width:66px;overflow:hidden;"><span class="n">29</span></div>
<div class="t cell" style="left:1742px;top:638px;height:20px;padding-left:3px;color:#000;width:66px;overflow:hidden;"><span class="j">前日比</span></div>
<div class="t cell" style="left:1809px;top:638px;height:20px;padding-left:3px;color:#000;"><span class="n">-86</span></div>
<div class="t cell" style="left:1608px;top:659px;height:20px;padding-left:3px;color:#000;"><span class="j">買い</span></div>
<div class="t cell" style="left:1742px;top:659px;height:20px;padding-left:3px;color:#000;"><span class="j">売り</span></div>
<div class="t cell" style="left:1608px;top:680px;height:20px;padding-left:3px;color:#000;width:66px;overflow:hidden;"><span class="n">395</span></div>
<div class="t cell" style="left:1675px;top:680px;height:20px;padding-left:3px;color:#000;width:66px;overflow:hidden;"><span class="n">3</span></div>
<div class="t cell" style="left:1742px;top:680px;height:20px;padding-left:3px;color:#000;width:66px;overflow:hidden;"><span class="n">719</span></div>
<div class="t cell" style="left:1809px;top:680px;height:20px;padding-left:3px;color:#000;"><span class="n">-22</span></div>
<svg class="a" style="left:67px;top:680px;width:6px;height:6px" viewBox="0 0 6 6"><path d="M0 0 H6 L0 6 Z" fill="#217346"/></svg>
<div class="a" style="left:65px;top:127px;width:70px;height:24px;border:2px solid #217346"></div>
<div class="a" style="left:67px;top:129px;width:66px;height:20px;border:1px solid #fff"></div>
<div class="a" style="left:130px;top:146px;width:7px;height:7px;background:#217346;border:1px solid #fff;border-right:0;border-bottom:0"></div>
</div>
<div class="a" style="left:1894px;top:279px;width:1px;height:696px;background:#c6c6c6"></div>
<div class="a" style="left:1895px;top:258px;width:26px;height:717px;background:#e6e6e6"></div>
<div class="a" style="left:1898px;top:278px;width:19px;height:680px;background:#dadada"></div>
<div class="a" style="left:1898px;top:260px;width:19px;height:18px;background:#fff;border:1px solid #c6c6c6"></div>
<svg class="a" style="left:1902px;top:266px;width:11px;height:6px" viewBox="0 0 11 6"><path d="M0.5 5.5 L5.5 0.5 L10.5 5.5 Z" fill="#777"/></svg>
<div class="a" style="left:1898px;top:279px;width:19px;height:21px;background:#fff;border:1px solid #c6c6c6"></div>
<div class="a" style="left:1898px;top:957px;width:19px;height:18px;background:#fff;border:1px solid #c6c6c6"></div>
<svg class="a" style="left:1902px;top:963px;width:11px;height:6px" viewBox="0 0 11 6"><path d="M0.5 0.5 L5.5 5.5 L10.5 0.5 Z" fill="#777"/></svg>
<div class="a" style="left:0px;top:975px;width:1920px;height:28px;background:#e6e6e6"></div>
<div class="a" style="left:0px;top:975px;width:1920px;height:1px;background:#c6c6c6"></div>
<div class="a" style="left:0px;top:1002px;width:1920px;height:1px;background:#c6c6c6"></div>
<svg class="a" style="left:27px;top:983px;width:8px;height:11px" viewBox="0 0 8 11"><path d="M7 0.5 V10.5 L1 5.5 Z" fill="#217346"/></svg>
<svg class="a" style="left:55px;top:983px;width:8px;height:11px" viewBox="0 0 8 11"><path d="M1 0.5 V10.5 L7 5.5 Z" fill="#217346"/></svg>
<div class="t" style="left:77px;top:977px;font-size:16px;color:#333">...</div>
<div class="a" style="left:103px;top:978px;width:52px;height:22px;background:#ffff00"></div>
<div class="t" id="f47" style="left:113px;top:976px;font-size:18px;color:#262626;transform:scaleX(0.9662);transform-origin:0 0;">RSI</div>
<div class="a" style="left:160px;top:978px;width:138px;height:22px;background:#ffff00"></div>
<div class="t" id="f48" style="left:172px;top:976px;font-size:18px;color:#262626;transform:scaleX(0.7847);transform-origin:0 0;">エンベロープ指標</div>
<div class="t" id="f49" style="left:314px;top:976px;font-size:18px;color:#555;transform:scaleX(0.8750);transform-origin:0 0;">業種別張り付けば</div>
<div class="a" style="left:456px;top:978px;width:104px;height:22px;background:#ed7d31"></div>
<div class="t" id="f50" style="left:466px;top:976px;font-size:18px;color:#262626;transform:scaleX(0.9444);transform-origin:0 0;">業種別株価</div>
<div class="a" style="left:565px;top:978px;width:70px;height:22px;background:#ed7d31"></div>
<div class="t" id="f51" style="left:575px;top:976px;font-size:18px;color:#262626;transform:scaleX(0.9259);transform-origin:0 0;">業種別</div>
<div class="a" style="left:640px;top:978px;width:152px;height:22px;background:#ed7d31"></div>
<div class="t" id="f52" style="left:652px;top:976px;font-size:18px;color:#262626;transform:scaleX(0.9843);transform-origin:0 0;">20日騰落上位50</div>
<div class="a" style="left:797px;top:978px;width:174px;height:22px;background:#ed7d31"></div>
<div class="t" id="f53" style="left:809px;top:976px;font-size:18px;color:#262626;transform:scaleX(0.8444);transform-origin:0 0;">日別と株価による診断</div>
<div class="a" style="left:100px;top:980px;width:1px;height:20px;background:#b0b0b0"></div>
<div class="a" style="left:157px;top:980px;width:1px;height:20px;background:#b0b0b0"></div>
<div class="a" style="left:300px;top:980px;width:1px;height:20px;background:#b0b0b0"></div>
<div class="a" style="left:454px;top:980px;width:1px;height:20px;background:#b0b0b0"></div>
<div class="a" style="left:562px;top:980px;width:1px;height:20px;background:#b0b0b0"></div>
<div class="a" style="left:637px;top:980px;width:1px;height:20px;background:#b0b0b0"></div>
<div class="a" style="left:794px;top:980px;width:1px;height:20px;background:#b0b0b0"></div>
<div class="a" style="left:974px;top:976px;width:112px;height:22px;background:linear-gradient(#ffffff 0%,#fbeee5 55%,#f3c6a6 100%)"></div>
<div class="a" style="left:974px;top:997px;width:112px;height:3px;background:#217346"></div>
<div class="t" id="f54" style="left:988px;top:976px;font-size:18px;color:#217346;transform:scaleX(0.8599);transform-origin:0 0;">累計&nbsp; データ</div>
<div class="a" style="left:1087px;top:976px;width:1px;height:26px;background:#b0b0b0"></div>
<div class="t" id="f55" style="left:1099px;top:976px;font-size:18px;color:#444;transform:scaleX(0.7222);transform-origin:0 0;">トレン</div>
<div class="t" style="left:1148px;top:977px;font-size:16px;color:#333">...</div>
<svg class="a" style="left:1171px;top:979px;width:20px;height:20px" viewBox="0 0 20 20"><circle cx="10" cy="10" r="9" fill="none" stroke="#777" stroke-width="1.3"/><path d="M10 5 V15 M5 10 H15" stroke="#555" stroke-width="1.4"/></svg>
<div class="a" style="left:1208px;top:983px;width:3px;height:3px;background:#aaa"></div>
<div class="a" style="left:1208px;top:989px;width:3px;height:3px;background:#aaa"></div>
<div class="a" style="left:1208px;top:995px;width:3px;height:3px;background:#aaa"></div>
<div class="a" style="left:1225px;top:976px;width:669px;height:26px;background:#dadada"></div>
<div class="a" style="left:1225px;top:980px;width:20px;height:20px;background:#fff;border:1px solid #c6c6c6"></div>
<svg class="a" style="left:1232px;top:985px;width:6px;height:10px" viewBox="0 0 6 10"><path d="M5.5 0.5 V9.5 L0.5 5 Z" fill="#555"/></svg>
<div class="a" style="left:1251px;top:980px;width:24px;height:20px;background:#fff;border:1px solid #c6c6c6"></div>
<div class="a" style="left:1876px;top:980px;width:19px;height:20px;background:#fff;border:1px solid #c6c6c6"></div>
<svg class="a" style="left:1883px;top:985px;width:6px;height:10px" viewBox="0 0 6 10"><path d="M0.5 0.5 V9.5 L5.5 5 Z" fill="#555"/></svg>
<div class="a" style="left:0px;top:1003px;width:1920px;height:27px;background:#f3f3f3"></div>
<div class="t" id="f56" style="left:9px;top:1010px;font-size:15px;color:#333;transform:scaleX(1.0167);transform-origin:0 0;">準備完了</div>
<div class="a" style="left:1538px;top:1003px;width:49px;height:27px;background:#c5c5c5"></div>
<svg class="a" style="left:1554px;top:1008px;width:17px;height:16px" viewBox="0 0 17 16"><path d="M0.5 0.5 H16.5 V15.5 H0.5 Z M0.5 5.5 H16.5 M0.5 10.5 H16.5 M5.5 0.5 V15.5 M11 0.5 V15.5" fill="none" stroke="#555"/></svg>
<svg class="a" style="left:1604px;top:1008px;width:17px;height:16px" viewBox="0 0 17 16"><rect x="0.5" y="0.5" width="16" height="15" fill="none" stroke="#555"/><rect x="3.5" y="3" width="10" height="10" fill="none" stroke="#555"/><path d="M5.5 6 H11.5 M5.5 8 H11.5 M5.5 10 H11.5" stroke="#555"/></svg>
<svg class="a" style="left:1654px;top:1008px;width:17px;height:16px" viewBox="0 0 17 16"><path d="M0.5 0.5 V15.5 H16.5 V0.5 M0.5 9.5 H8.5 V0.5 M11 0.5 V5" fill="none" stroke="#555"/></svg>
<div class="a" style="left:1694px;top:1016px;width:10px;height:1px;background:#444"></div>
<div class="a" style="left:1711px;top:1016px;width:125px;height:1px;background:#999"></div>
<div class="a" style="left:1773px;top:1013px;width:1px;height:6px;background:#999"></div>
<div class="a" style="left:1751px;top:1009px;width:5px;height:14px;background:#555"></div>
<svg class="a" style="left:1840px;top:1010px;width:12px;height:12px" viewBox="0 0 12 12"><path d="M6 0.5 V11.5 M0.5 6 H11.5" stroke="#444" stroke-width="1.2"/></svg>
<div class="t" style="left:1868px;top:1009px;font-size:15px;color:#333">70%</div>
<div class="a" style="left:0px;top:1030px;width:1920px;height:50px;background:#eddccf"></div>
<svg class="a" style="left:20px;top:1045px;width:20px;height:20px" viewBox="0 0 20 20"><path d="M0 2.8 L8 1.7 V9.5 H0 Z M9 1.5 L20 0 V9.5 H9 Z M0 10.5 H8 V18.3 L0 17.2 Z M9 10.5 H20 V20 L9 18.5 Z" fill="#111"/></svg>
<div class="a" style="left:60px;top:1030px;width:429px;height:50px;background:#fff;border:1px solid #d0c8c0"></div>
<svg class="a" style="left:75px;top:1045px;width:20px;height:20px" viewBox="0 0 20 20"><circle cx="12" cy="8" r="6.5" fill="none" stroke="#222" stroke-width="1.5"/><path d="M7.5 12.5 L1 19" stroke="#222" stroke-width="1.6"/></svg>
<div class="t" id="f57" style="left:110px;top:1047px;font-size:16px;color:#444;transform:scaleX(1.1875);transform-origin:0 0;">検索</div>
<svg class="a" style="left:509px;top:1044px;width:22px;height:22px" viewBox="0 0 22 22"><circle cx="11" cy="11" r="8.5" fill="none" stroke="#111" stroke-width="2.6"/></svg>
<svg class="a" style="left:569px;top:1044px;width:24px;height:22px" viewBox="0 0 24 22"><path d="M1 1.5 H15 M1 20.5 H15 M3 5 H13 V17 H3 Z M18 1 V5 M18 8 V14 M18 17 V21" fill="none" stroke="#111" stroke-width="1.6"/></svg>
<svg class="a" style="left:629px;top:1042px;width:28px;height:26px" viewBox="0 0 28 26"><path d="M0 2 H10 L12 4 H28 V24 H0 Z" fill="#f4c04e"/><rect x="0" y="6" width="28" height="18" fill="#fcd462"/><path d="M8 26 V16 H20 V26 H17 V19 H11 V26 Z" fill="#2f82d8"/></svg>
<svg class="a" style="left:692px;top:1040px;width:28px;height:30px" viewBox="0 0 28 30"><path d="M9 7 V4 C9 1.5 11 1 14 1 C17 1 19 1.5 19 4 V7" fill="none" stroke="#222" stroke-width="2"/><rect x="0" y="7" width="28" height="23" rx="2" fill="#2b2b2b"/><rect x="9" y="12" width="4.5" height="4.5" fill="#f25022"/><rect x="14.5" y="12" width="4.5" height="4.5" fill="#7fba00"/><rect x="9" y="17.5" width="4.5" height="4.5" fill="#00a4ef"/><rect x="14.5" y="17.5" width="4.5" height="4.5" fill="#ffb900"/></svg>
<svg class="a" style="left:753px;top:1041px;width:30px;height:28px" viewBox="0 0 30 28"><path d="M0 10 L15 0 L30 10 V28 H0 Z" fill="#0f6cbd"/><path d="M0 10 L15 20 L30 10 V28 H0 Z" fill="#28a8ea"/><path d="M0 28 L15 16 L30 28 Z" fill="#50c8f5"/></svg>
<svg class="a" style="left:815px;top:1040px;width:30px;height:30px" viewBox="0 0 30 30"><rect width="30" height="30" fill="#f25a2e"/><circle cx="15" cy="15" r="10" fill="none" stroke="#fff" stroke-width="2"/><circle cx="15" cy="13" r="5" fill="#fff"/><path d="M7 22 C10 18 20 18 23 22" fill="#fff"/></svg>
<svg class="a" style="left:878px;top:1041px;width:28px;height:28px" viewBox="0 0 28 28"><rect width="28" height="28" rx="4" fill="#2f5bd8"/><text x="14" y="17" font-size="16" fill="#fff" text-anchor="middle" font-family="Liberation Sans">@</text><text x="14" y="25" font-size="6" fill="#fff" text-anchor="middle" font-family="Liberation Sans">menu</text></svg>
<svg class="a" style="left:939px;top:1040px;width:30px;height:30px" viewBox="0 0 30 30"><circle cx="15" cy="15" r="14" fill="#1b8fd6"/><path d="M4 18 C4 8 12 3 19 4 C26 5 29 11 29 15 C29 19 25 20 21 20 C14 20 13 15 16 12 C10 12 7 18 12 24 C16 28 22 28 26 25 C22 30 10 31 4 22 Z" fill="#3ccb6d"/><path d="M6 13 C10 8 18 9 19 14 C15 12 11 14 11 19 C11 23 14 27 20 28 C12 30 4 24 6 13 Z" fill="#0c59a4"/></svg>
<svg class="a" style="left:1001px;top:1040px;width:30px;height:30px" viewBox="0 0 30 30"><rect width="30" height="30" fill="#d8ecf8"/><rect x="5" y="6" width="20" height="14" fill="#fff" stroke="#1f78d1" stroke-width="2"/><path d="M2 23 H28" stroke="#1f78d1" stroke-width="2.5"/><path d="M10 12 L14 16 L21 9" fill="none" stroke="#2bb0c8" stroke-width="2"/></svg>
<div class="a" style="left:1048px;top:1030px;width:61px;height:50px;background:#f6ebe5"></div>
<svg class="a" style="left:1063px;top:1041px;width:30px;height:28px" viewBox="0 0 30 28"><rect x="8" y="0" width="22" height="28" rx="2" fill="#21a366"/><rect x="8" y="0" width="22" height="9" fill="#33c481"/><rect x="8" y="19" width="22" height="9" fill="#107c41"/><rect x="0" y="6" width="16" height="16" rx="2" fill="#185c37"/><text x="8" y="19" font-size="12" fill="#fff" text-anchor="middle" font-weight="bold" font-family="Liberation Sans">X</text></svg>
<div class="a" style="left:929px;top:1077px;width:51px;height:3px;background:#0f6cbd"></div>
<div class="a" style="left:991px;top:1077px;width:51px;height:3px;background:#0f6cbd"></div>
<div class="a" style="left:1048px;top:1077px;width:61px;height:3px;background:#0f6cbd"></div>
<svg class="a" style="left:1590px;top:1049px;width:18px;height:10px" viewBox="0 0 18 10"><path d="M1 9 L9 1 L17 9" fill="none" stroke="#111" stroke-width="1.5"/></svg>
<svg class="a" style="left:1617px;top:1046px;width:22px;height:14px" viewBox="0 0 22 14"><path d="M5 13 C1 13 0 9 3 7.5 C3 3 8 2 10 4 C12 0 19 1 18 6.5 C22 7 22 13 18 13 Z" fill="#555"/></svg>
<svg class="a" style="left:1647px;top:1046px;width:22px;height:14px" viewBox="0 0 22 14"><rect x="5" y="2" width="15" height="10" fill="none" stroke="#111" stroke-width="1.5"/><rect x="7" y="4" width="11" height="6" fill="#111"/><path d="M0 5 H5 M2 3 V7" stroke="#111" stroke-width="1.3"/><rect x="20" y="5" width="2" height="4" fill="#111"/></svg>
<svg class="a" style="left:1680px;top:1044px;width:20px;height:18px" viewBox="0 0 20 18"><path d="M1 8 C7 2 13 2 19 8 M4 11 C8 7 12 7 16 11 M7 14 C9 12 11 12 13 14" fill="none" stroke="#333" stroke-width="1.4"/><circle cx="10" cy="16.5" r="1.4" fill="#111"/></svg>
<svg class="a" style="left:1708px;top:1044px;width:22px;height:18px" viewBox="0 0 22 18"><path d="M1 6 H5 L10 1.5 V16.5 L5 12 H1 Z" fill="none" stroke="#111" stroke-width="1.3"/><path d="M13 6 C14.5 8 14.5 10 13 12 M16 4 C18.5 7 18.5 11 16 14" fill="none" stroke="#111" stroke-width="1.2"/></svg>
<div class="t" style="left:1739px;top:1042px;font-size:24px;color:#111">A</div>
<div class="t" id="f58" style="left:1790px;top:1037px;font-size:15px;color:#111;transform:scaleX(1.2784);transform-origin:0 0;">20:24</div>
<div class="t" id="f59" style="left:1771px;top:1060px;font-size:15px;color:#111;transform:scaleX(1.0123);transform-origin:0 0;">2021/05/27</div>
<svg class="a" style="left:1866px;top:1043px;width:28px;height:28px" viewBox="0 0 28 28"><path d="M2 2 H20 V16 H8 L4 20 V16 H2 Z" fill="#111"/><path d="M5 6 H17 M5 9 H17 M5 12 H13" stroke="#eddccf" stroke-width="1.3"/><circle cx="20" cy="20" r="7.5" fill="#eddccf" stroke="#666" stroke-width="1"/><text x="20" y="24.5" font-size="11" fill="#111" text-anchor="middle" font-family="Liberation Sans">1</text></svg>
</body></html>
